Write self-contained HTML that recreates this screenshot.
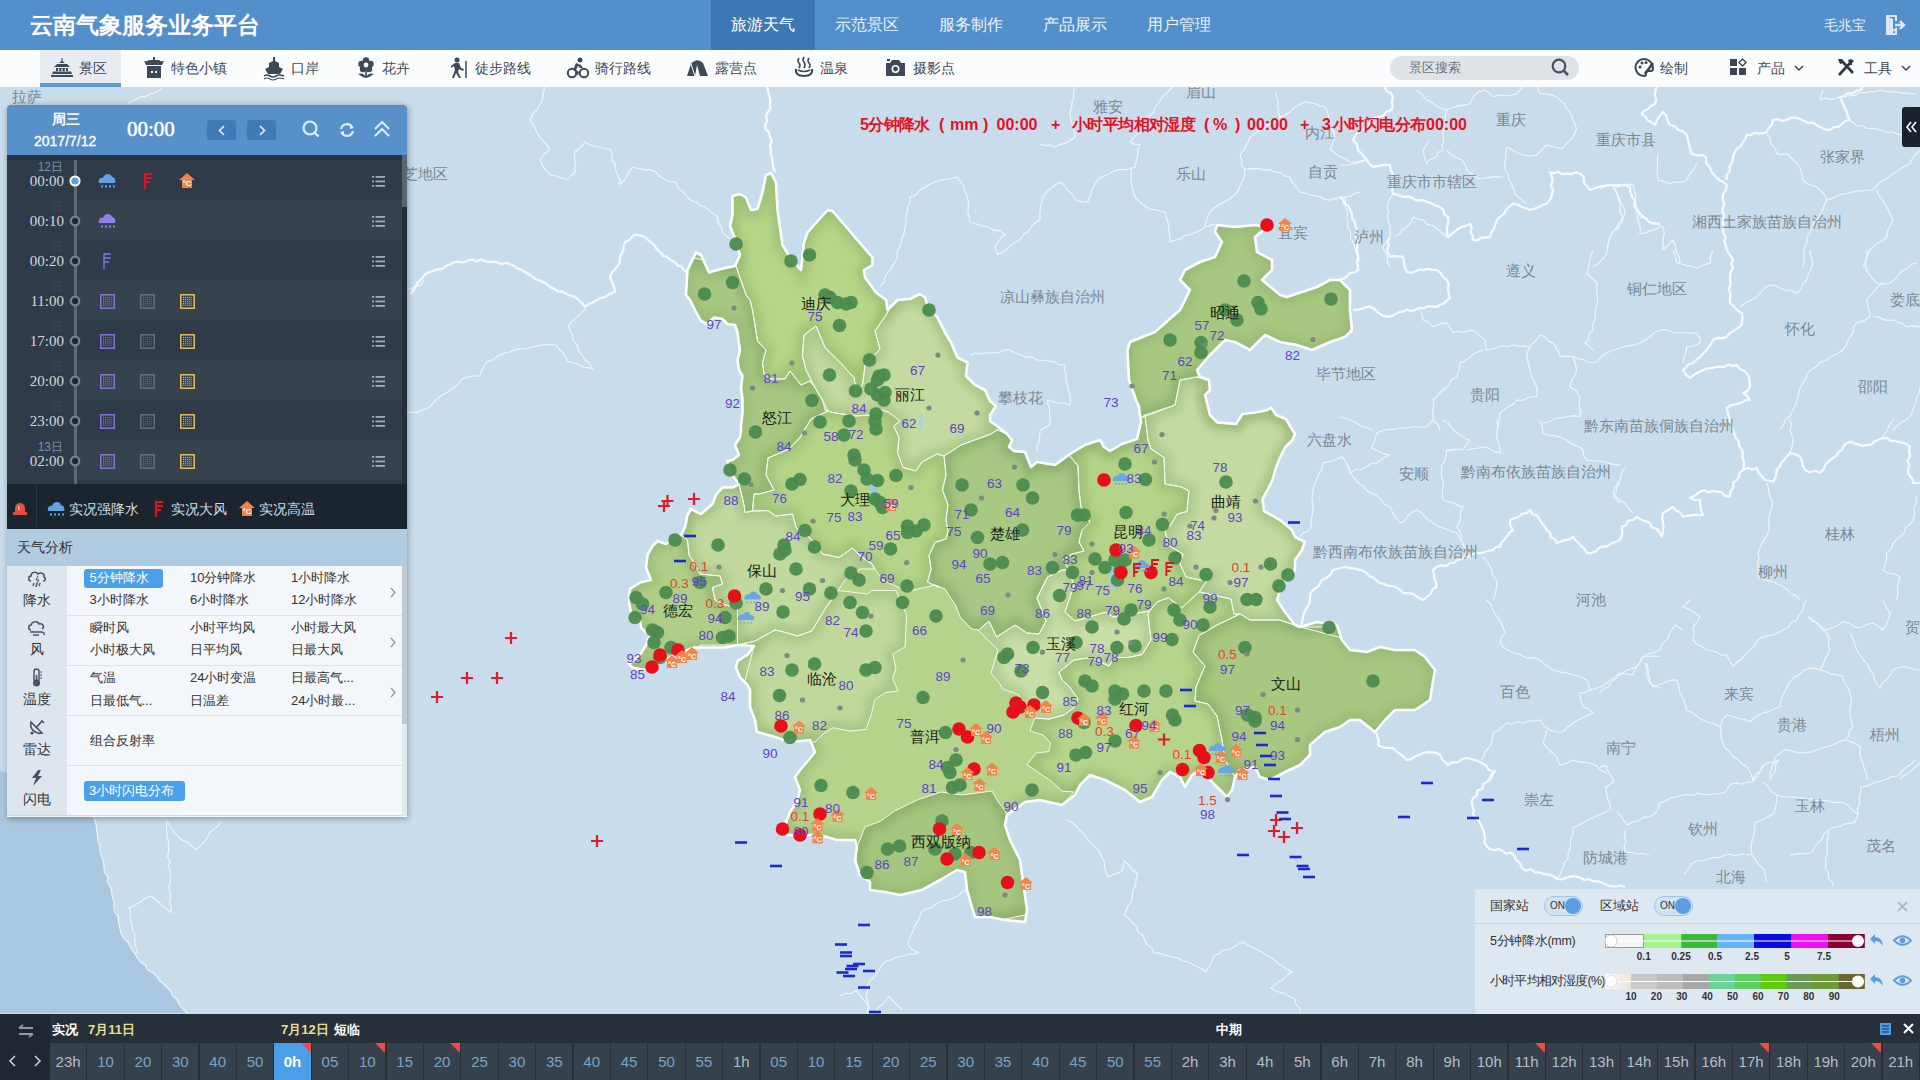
<!DOCTYPE html>
<html><head><meta charset="utf-8">
<style>
*{margin:0;padding:0;box-sizing:border-box}
html,body{width:1920px;height:1080px;overflow:hidden;background:#c9dcec;font-family:"Liberation Sans",sans-serif;position:relative}
.a{position:absolute;white-space:nowrap}
#map{position:absolute;left:0;top:0;width:1920px;height:1080px}
svg.i{position:absolute;overflow:visible}
#hdr{position:absolute;left:0;top:0;width:1920px;height:50px;background:#5390cb}
#hdr .title{position:absolute;left:30px;top:10px;font-family:"Liberation Serif",serif;font-weight:bold;font-size:23px;color:#fff;white-space:nowrap}
#hdr .nav{position:absolute;top:0;height:50px;width:104px;line-height:50px;text-align:center;font-size:16px;color:#eaf2fa;white-space:nowrap}
#hdr .nav.on{background:#3e78b4;color:#fff}
#tb{position:absolute;left:0;top:50px;width:1920px;height:37px;background:#fbfcfe}
#tb .it{position:absolute;top:0;height:37px;line-height:37px;font-size:14px;color:#3f4752;white-space:nowrap}
#lp{position:absolute;left:7px;top:105px;width:400px;height:424px;background:#2f3b48;border-radius:5px 5px 0 0;overflow:hidden;box-shadow:1px 1px 6px rgba(0,0,0,.35)}
#lph{position:absolute;left:0;top:0;width:400px;height:50px;background:#5890ca}
.row{position:absolute;left:71px;width:324px;height:40px;background:#2f3b48}
.row.l{background:#36434f}
.tt{position:absolute;left:0;width:57px;text-align:right;font-size:15px;color:#d3d9df;font-family:"Liberation Serif",serif;line-height:16px}
.td{position:absolute;left:0;width:56px;text-align:right;font-size:12px;color:#7d91a7;line-height:13px}
.td.f{color:#3c4855}
#wa{position:absolute;left:7px;top:529px;width:400px;height:288px;background:#f3f6fa;box-shadow:1px 2px 6px rgba(0,0,0,.3)}
#wa .hd{position:absolute;left:0;top:0;width:400px;height:37px;background:#b1cbe1;font-size:14px;color:#333;line-height:37px;padding-left:10px}
#wa .lc{position:absolute;left:0;width:60px;height:50px;background:#dde5ed}
#wa .lb{position:absolute;left:0;width:60px;text-align:center;font-size:14px;color:#333;line-height:15px}
#wa .tx{position:absolute;font-size:13px;color:#333;white-space:nowrap;line-height:14px}
#wa .sep{position:absolute;left:0;width:395px;height:1px;background:#dce1e6}
.pill{position:absolute;background:#4ba0ea;border-radius:3px;color:#fff;font-size:13px;white-space:nowrap;line-height:19px;padding-left:5px}
#bt{position:absolute;left:0;top:1014px;width:1920px;height:66px;background:#272f38}
.cell{position:absolute;top:29px;height:37px;background:#36414c;text-align:center;line-height:37px;font-size:15px;color:#7aa3c8}
.cell.h{color:#b4bec8}
.cell.on{background:#4a9fe8;color:#fff;font-weight:bold}
.tri{position:absolute;right:0;top:0;width:0;height:0;border-top:10px solid #f04a4a;border-left:10px solid transparent}
#lg{position:absolute;left:1475px;top:889px;width:445px;height:125px;background:rgba(224,233,242,0.9)}
#lg .t{position:absolute;font-size:12.5px;color:#333;white-space:nowrap;line-height:14px}
#lg .n{position:absolute;font-size:10px;color:#333;font-weight:bold;white-space:nowrap;transform:translateX(-50%);line-height:11px}
.tog{position:absolute;width:39px;height:20px;border-radius:10px;background:#cfe3f5;border:1px solid #9fc6ea}
.tog span{position:absolute;left:5px;top:3px;font-size:10px;color:#333;line-height:12px}
.tog i{position:absolute;right:1px;top:1px;width:16px;height:16px;border-radius:50%;background:#5b9de0}
.ttl{position:absolute;top:116px;font-size:16px;font-weight:bold;color:#e8101e;white-space:nowrap;line-height:18px}
</style></head>
<body>
<svg id="map" width="1920" height="1080" viewBox="0 0 1920 1080">
<defs><clipPath id="yn"><polygon points="686,295 687.5,270 696,252.5 701,255 709,272.5 721,269 735,266 740,255 736,241 730,226 732.5,215 732.5,196 740,194 746,197.5 751,210 757.5,209 762.5,192.5 766,175 771,173 776,182.5 777.5,210 782.5,245 790,257.5 801,270 804,242.5 807.5,232.5 827.5,210 832.5,211 872.5,257.5 872.5,265 864,270 865,277.5 876,292.5 886,300 887.5,310 897.5,300 910,299 920,294 925,297.5 927.5,306 937.5,317.5 945,332.5 951,342.5 957.5,357.5 967.5,362.5 966,376 975,385 985,390 990,401 996,406 990,415 990,421 997,426 1007,434 1012,440 1009,447 1014,451 1025,452 1031,467 1037,462 1055,465 1070,454 1085,445 1100,440 1104,447 1110,451 1122,444 1137,439 1141,422 1139,407 1136,400 1129,380 1127.5,350 1130,342 1155,332 1180,310 1190,290 1180,280 1185,270 1200,262 1215,257 1222,242 1215,232 1217,225 1235,227 1255,225 1267,227 1255,237 1257,252 1272,260 1272,270 1262,280 1280,295 1287,297 1317,287 1330,280 1340,280 1350,290 1350,310 1352,330 1345,337 1330,342 1312,350 1297,345 1280,342 1265,335 1250,350 1235,342 1225,340 1210,355 1197,370 1200,377 1209,380 1210,390 1205,395 1207.5,405 1210,415 1217.5,422.5 1236,424 1242.5,414 1255,412.5 1267.5,410 1271,407.5 1276,415 1286,419 1290,426 1295,434 1292.5,440 1285,447.5 1280,457.5 1276,467.5 1272.5,480 1267.5,490 1262.5,499 1264,511 1280,520 1292,530 1295,537 1305,542 1302,550 1295,560 1295,570 1285,580 1280,590 1277,600 1285,612 1295,625 1300,627 1317,622 1337,625 1342,640 1350,650 1367,652 1380,647 1395,650 1415,650 1425,657 1435,670 1432,687 1430,700 1415,710 1395,710 1385,720 1375,732 1360,720 1350,720 1340,727 1325,732 1310,745 1310,755 1300,765 1285,772 1270,780 1260,777 1255,767 1240,770 1235,777 1232,790 1227,797 1212,782 1200,770 1192,775 1185,787 1180,777 1170,772 1162,780 1152,797 1140,802 1125,790 1105,780 1090,775 1080,785 1075,795 1062,805 1040,800 1025,802 1007,815 1005,825 1010,840 1020,860 1022,875 1025,895 1027,910 1025,922 1005,920 990,917 975,917 972,907 967,890 965,872 957,870 940,880 922,890 900,895 885,892 870,890 870,882 860,875 855,860 857,847 855,840 837,840 820,835 805,835 787,835 782,830 785,825 790,812 797,802 800,790 795,777 800,770 807,762 815,752 810,740 790,742 775,737 757,732 755,720 750,707 750,690 747.5,685 740,677.5 736,667.5 737.5,661 747.5,655 754,646 737.5,645 725,647.5 694,647.5 675,655 656,664 644,670 632.5,667.5 629,664 640,655 646,645 650,635 646,632.5 641,627.5 640,620 629,617.5 631,612.5 629,602.5 630,589 640,582.5 651,580 646,567.5 647.5,555 652.5,546 657.5,541 666,544 674,539 681,535 685,527.5 687.5,515 691,509 701,514 712.5,504 716,495 722.5,487.5 732.5,487.5 739,484 729,471 727.5,461 732.5,460 739,455 735,445 740,437.5 741,430 741,425 742.5,412.5 742.5,400 741,387.5 742.5,376 739,370 737.5,360 740,350 739,344 737.5,332.5 735,325 727.5,324 722.5,319 714,317.5 707.5,324 701,321 695,310 690,300"/></clipPath><radialGradient id="seag" cx="0" cy="1" r="1.2"><stop offset="0" stop-color="#a4c3de"/><stop offset="1" stop-color="#b9d2e7"/></radialGradient><g id="house"><path d="M-7,-1 L0,-7 L7,-1 L5,-1 L5,6 L-5,6 L-5,-1 Z" fill="#f0864a"/><text x="0" y="4.5" font-size="7" fill="#fff" text-anchor="middle" font-weight="bold">°C</text></g><g id="cloud"><path d="M-8,2 C-9,-2 -5,-4 -3,-3 C-2,-7 4,-7 5,-3 C8,-3 9,0 8,2 Z" fill="#6aa6e2"/><g fill="#6aa6e2"><rect x="-6" y="4" width="1.6" height="1.6"/><rect x="-2.5" y="4" width="1.6" height="1.6"/><rect x="1" y="4" width="1.6" height="1.6"/><rect x="4.5" y="4" width="1.6" height="1.6"/></g></g></defs>
<rect width="1920" height="1080" fill="#c9dcec"/>
<polygon points="0,770 60,800 94,819 104,867 112,896 121,933 137.5,958 167,987.5 179,1004 187.5,1013 0,1013" fill="#a9c7e0"/>
<polyline points="735,242 730.5,239 726.1,236 722.5,232 721.2,226.9 718.1,222.4 717.5,217 713.4,213.6 708.9,210.6 705,207 700.1,205.5 696.3,202 691.3,200.5 687.5,197 683.2,192.1 678.3,187.7 675,182 669.7,181.8 665,179.5 659.9,176.3 655.5,172.1 650,169.5 644,169.6 638.2,168.5 632.5,167 628.5,173.1 625,179.5 620,184.5 619.7,179.2 617.3,174.4 615.5,169.6 615.5,164.2 611.7,159.8 612.3,154.2 610,149.5 604.9,148.8 600,147 594.7,146.2 589.7,144.6 585,142 580.4,147.4 575,152 574.2,157 575.8,162 574.8,167 575,172 571,175.5 567.5,179.5 561.6,178.2 555.9,176 550,174.5 545.7,170.1 542.4,165.1 540,159.5 544.5,154 550,149.5 547,145 543.2,141.3 540,137 537.1,132.9 535.2,128.1 532.4,123.9 530,119.5 532.7,114.2 536.9,109.9 539.8,104.8 542.5,99.5 543.1,93.1 545,87" fill="none" stroke="#f2f7fb" stroke-width="1.1" stroke-linejoin="round"/>
<polyline points="585.4,309 581.1,313.1 577,317.4 572.1,320.9 568.6,325.8 569.9,330.8 572.9,335.2 573.1,340.7 577,344.6 578,349.8 581.8,354.5 584.8,359.8 589.7,363.7 592.6,369 587.8,367.6 582.7,367.3 578.3,364.3 573.6,362.7 568.6,361.9 565.7,357.6 563.3,352.9 559.1,349.5 556.5,345 549.2,344.5 542,345 536.4,346 531,347.2 525.5,348.7 519.8,348.9 514.3,349.9 509,352.3 503.5,353.4 497.7,355.9 492.8,360.1 486.7,361.9 483.8,366.5 481.6,371.3 479.5,376.3 473.7,375.8 468.1,377.1 462.6,378.7 458.2,383.9 453,388.4 447.2,392.3 441,395.6 435.8,400.1 431.3,405.2 427.1,408.7 421.7,410.1 416.9,412.4 407.2,412.4" fill="none" stroke="#f2f7fb" stroke-width="1.1" stroke-linejoin="round"/>
<polyline points="400,294.4 405.1,291.2 410.4,288.7 415.8,286.2 421.7,284.8 424,280" fill="none" stroke="#f2f7fb" stroke-width="1.1" stroke-linejoin="round"/>
<polyline points="880,287 883.6,282.4 885.2,276.5 888.4,271.7 891.8,266.9 895,262 897.4,257.3 897,251.7 899.4,247 901.1,242 902.5,237 904.4,232.2 905.2,227.2 906.2,222.2 905.7,216.9 907,212 907.8,206.9 910,202.2 910,197 915.6,195 919.5,190.2 924.6,187.3 929.6,184.4 935,182 940.5,180.1 946.2,179.5 951.9,178.5 957.5,177 960.6,181.7 963.7,186.4 965.2,191.9 967.5,197 968.3,202 968.3,207 967.8,212.1 969,217 970,222 975.8,223.7 981.6,225.6 987.5,227 993.2,229.9 999.6,230.9 1005,234.5 1000.9,238 997.8,242.4 995,247 997.5,254.5 1002.5,252.3 1006.9,249.1 1010.8,245.3 1015.4,242.3 1020,239.5 1023.3,234.8 1028.2,231.7 1031.2,226.7 1035.2,222.7 1040,219.5 1039.9,213.8 1040.4,208.2 1041.5,202.6 1042.5,197 1046.1,192.4 1050.4,188.5 1055,185.1 1060,182 1064.5,185.7 1067.8,190.5 1072.2,194.3 1075,199.5 1081.1,201.7 1087.5,202 1090.3,196.5 1091.7,190.4 1094.4,184.9 1097.5,179.5 1103,176.6 1108.6,174.2 1114,171.1 1120,169.5 1125.1,169.6 1130.2,169.1 1135,167 1136.2,161.4 1137.5,155.7 1137.7,149.9 1140,144.5 1134.7,144.3 1130,142 1133.5,138 1137.1,134.1 1141.9,131.4 1145,127 1146.7,121.6 1148.9,116.4 1153.5,112.5 1155,107 1159.2,102 1162.6,96.4 1167.5,92 1172.5,87" fill="none" stroke="#f2f7fb" stroke-width="1.1" stroke-linejoin="round"/>
<polyline points="1040,144.5 1045,145.4 1050.2,145 1055,147 1060,144.6 1065.6,143.1 1070.4,140.3 1075,137 1074.5,131.9 1072.4,127.1 1071.7,122.1 1070.2,117.2 1070,112 1071.7,107.1 1072.1,102 1073.7,97.1 1073.6,91.9 1075,87" fill="none" stroke="#f2f7fb" stroke-width="1.1" stroke-linejoin="round"/>
<polyline points="1130,167 1131.5,171.9 1130.9,177.1 1131.3,182.2 1132.4,187.2 1133.4,192.1 1135,197 1139.5,201.8 1144.6,205.8 1150,209.5 1155.1,209.6 1160,211.2 1165,212 1166.2,216.9 1167.9,221.8 1168.7,226.8 1168.9,231.9 1169.8,236.9 1170,242 1175.2,240.3 1180.5,238.8 1184.9,235.4 1190.4,234.5 1195.5,232.5 1200.5,230.2 1205,227 1209.9,225.4 1215,224.5" fill="none" stroke="#f2f7fb" stroke-width="1.1" stroke-linejoin="round"/>
<polyline points="1205,227 1206,221.8 1207.7,216.8 1210,212 1214.1,208 1218.7,204.7 1223.9,202.3 1228.9,199.5 1233.4,196 1237.5,192 1240,186.1 1242.9,180.5 1245,174.5 1244.5,169.3 1241.5,164.8 1241.7,159.4 1240,154.5 1243.4,150.7 1245.6,146.1 1248.1,141.7 1250,137 1254.3,134.1 1258.1,130.6 1263.3,129.1 1266.9,125.2 1271.9,123.4 1276.4,120.9 1280,117 1278.7,112.1 1277.7,107.1 1278.1,101.8 1276.6,96.9 1275,92" fill="none" stroke="#f2f7fb" stroke-width="1.1" stroke-linejoin="round"/>
<polyline points="1245,169.5 1250,168.6 1255,168.5 1260,168.6 1265,170.6 1270,169.5 1274.7,172.1 1280.3,172.4 1284.7,175.9 1290,177 1292.3,182.7 1296.3,187.2 1300,192 1305.1,193.1 1310,195.1 1315.3,195.6 1320.4,196.8 1325,199.5 1330.2,200.1 1335,198.6 1340,197.7 1345,197 1350.4,196.4 1354.9,193.5 1360,192" fill="none" stroke="#f2f7fb" stroke-width="1.1" stroke-linejoin="round"/>
<polyline points="1280,117 1285.5,114.8 1290.4,111.7 1294.6,107.4 1299.7,104.4 1305,102 1310.1,102.7 1315.2,103.8 1319.9,106 1325,107 1327.3,111.8 1328.5,116.9 1330.9,121.7 1330.7,127.3 1333.7,131.9 1335,137 1332.6,143.3 1330,149.5 1334.9,152.8 1339.4,156.6 1345.1,158.7 1350,162 1355.7,162.4 1361.1,160.7 1366.7,160" fill="none" stroke="#f2f7fb" stroke-width="1.1" stroke-linejoin="round"/>
<polyline points="1345,197 1345.3,202 1345.8,207 1347.5,211.9 1346.8,217 1347.9,221.9 1347.5,227 1350.6,232.2 1350.5,238.5 1353.9,243.6 1355,249.5 1357.6,255.7 1360,262" fill="none" stroke="#f2f7fb" stroke-width="1.1" stroke-linejoin="round"/>
<polyline points="1340,165 1345.6,165.2 1351.1,164.3 1356.7,163.7 1361.5,161.4 1366.7,160" fill="none" stroke="#f2f7fb" stroke-width="1.1" stroke-linejoin="round"/>
<polyline points="1506.7,147 1506.2,152.7 1505.7,158.5 1504.7,164.2 1505,170 1507.9,174.3 1508.9,179.5 1511.6,184 1513.5,188.7 1515,193.7 1518.4,197.6 1522.8,200.4 1526.7,203.7" fill="none" stroke="#f2f7fb" stroke-width="1.1" stroke-linejoin="round"/>
<polyline points="1506.7,147 1512.1,149.8 1517.3,152.9 1523,155 1529.8,156.1 1536.7,155 1541.6,149.9 1546.7,145 1551.6,146.5 1556.7,147.5 1561.7,148.7 1565.5,144.8 1569.6,141.2 1573,137 1576.7,128.7 1574.4,123.2 1572.3,117.5 1570,112 1566.6,108.3 1564.2,103.7 1560.4,100.4 1556.7,97 1551.3,94.9 1545.8,93.7 1540,93.7 1536.7,87" fill="none" stroke="#f2f7fb" stroke-width="1.1" stroke-linejoin="round"/>
<polyline points="1416.7,90 1422.1,94.6 1426.7,100 1431.6,102.6 1436.2,106 1441.3,108.3 1446.7,110 1452.3,107.5 1458.1,105.9 1464.1,105.1 1470,103.7 1473.1,97.2 1478,92 1485,90 1489.4,93 1493,97 1498.8,95.1 1504.9,95.8 1510.9,95.3 1516.7,93.7 1523,87" fill="none" stroke="#f2f7fb" stroke-width="1.1" stroke-linejoin="round"/>
<polyline points="1446.7,110 1444.9,114.8 1446.1,120.1 1443.9,124.9 1443.3,129.9 1443,135 1443.9,140 1442,145 1443,150 1438.1,152.5 1435.3,157.4 1430,159.4 1426.7,163.7 1424.6,156.9 1423,150 1426.5,145 1430,140" fill="none" stroke="#f2f7fb" stroke-width="1.1" stroke-linejoin="round"/>
<polyline points="1446.7,150 1451,154.4 1456.2,157.4 1461.7,160 1465,164.6 1466.7,170 1472.5,174.2 1478,178.7 1483,178.4 1488,177.6 1492.9,176.9 1498,176.9 1503,177" fill="none" stroke="#f2f7fb" stroke-width="1.1" stroke-linejoin="round"/>
<polyline points="1393,193.7 1389.3,200.1 1386.7,207 1388.5,211.9 1387.7,217 1388.5,222 1390.1,226.9 1389.9,232 1390,237 1386.2,241.8 1383,247 1384.7,252 1387.6,256.6 1387.1,262.4 1390,267" fill="none" stroke="#f2f7fb" stroke-width="1.1" stroke-linejoin="round"/>
<polyline points="1413,217 1417.8,219.2 1423,220 1427.3,224.4 1433.6,226 1438.3,229.8 1443,233.7 1448,237" fill="none" stroke="#f2f7fb" stroke-width="1.1" stroke-linejoin="round"/>
<polyline points="1413,217 1410.9,222.6 1406.7,227 1402.3,229.8 1399.3,234.1 1395,237" fill="none" stroke="#f2f7fb" stroke-width="1.1" stroke-linejoin="round"/>
<polyline points="1613,185 1616.2,190.9 1617.9,197.4 1620,203.7 1619.9,209.3 1621.2,214.7 1623,220 1620.2,224.6 1617.2,229.1 1612.4,232.1 1610,237 1608.7,242.5 1607.3,248 1606.7,253.7 1602.9,258.9 1598.4,263.4 1593,267" fill="none" stroke="#f2f7fb" stroke-width="1.1" stroke-linejoin="round"/>
<polyline points="1636.7,210 1637,216 1638.5,221.8 1640.3,227.6 1640,233.7 1645.4,233.1 1650.1,230.7 1655.2,229.4 1660,227" fill="none" stroke="#f2f7fb" stroke-width="1.1" stroke-linejoin="round"/>
<polyline points="1766.7,133.7 1770.2,138.2 1770.9,144.1 1775.2,148.2 1776.7,153.7 1781.7,154.6 1786.7,153.7 1791.2,158 1795.9,162.3 1800,167 1801.4,173.5 1803,180 1808.1,184.3 1814.6,186.1 1820,190 1824.2,194.5 1826.7,200 1831.7,198.5 1836.5,196.2 1841.4,194.3 1846.7,193.7 1851.8,192.1 1857.1,191.1 1862.4,190.7 1867.7,190.3 1873,190 1877.6,184.6 1883,180 1887.8,177.9 1891.7,174.1 1896.5,171.9 1900.6,168.4 1905.3,166.1 1910,163.7 1912.3,158.4 1916.1,154.2 1920,150" fill="none" stroke="#f2f7fb" stroke-width="1.1" stroke-linejoin="round"/>
<polyline points="1850,120 1856.7,125.7 1861.9,125.5 1866.6,128.3 1871.7,128.8 1876.9,128.9 1881.7,130.6 1886.5,132.8 1891.9,131.7 1896.7,133.7 1902.4,135.3 1908.4,135.2 1914.2,136.2 1920,137" fill="none" stroke="#f2f7fb" stroke-width="1.1" stroke-linejoin="round"/>
<polyline points="1876.7,190 1879.3,196.1 1883.6,201.2 1886.7,207 1889.8,213.5 1893,220 1890.4,225.5 1887.6,230.9 1886.7,237 1882.8,240.6 1877.8,242.8 1873.8,246.3 1870,250 1867.3,255.5 1865.6,261.4 1863,267" fill="none" stroke="#f2f7fb" stroke-width="1.1" stroke-linejoin="round"/>
<polyline points="1826.7,200 1824.5,204.8 1822.7,209.8 1820,214.3 1817.7,219 1813.6,222.8 1812.3,228.1 1810,232.8 1806.7,237 1807.2,242.1 1804.6,246.9 1803.9,251.9 1803.8,256.9 1804.2,262.1 1803,267" fill="none" stroke="#f2f7fb" stroke-width="1.1" stroke-linejoin="round"/>
<polyline points="1600,188.7 1606.3,186.2 1613,185 1618,184.5 1623,184.9 1628,184.1 1633,185 1634.3,190.3 1635.9,195.5 1635.3,201.3 1636.5,206.6 1638.7,211.7 1640,217 1644.9,218.4 1648.7,222.1 1654,222.5 1658.5,224.7 1663,227 1664.3,232.8 1663.3,238.5 1663.1,244.2 1663,250 1668,245 1673,240 1675.5,245.7 1676.5,251.9 1679.5,257.4 1680,263.7" fill="none" stroke="#f2f7fb" stroke-width="1.1" stroke-linejoin="round"/>
<polyline points="1613,187 1616,191.7 1618.8,196.5 1620.4,201.9 1623.7,206.5 1625,212 1623.1,217.6 1619.4,222.3 1616.6,227.4 1612.8,231.9 1610,237 1608.3,242.8 1606.7,248.7" fill="none" stroke="#f2f7fb" stroke-width="1.1" stroke-linejoin="round"/>
<polyline points="1658,153.7 1657.3,159 1657.6,164.2 1657.4,169.5 1657,174.7 1658,180 1664.1,181.6 1670,183.7 1675.5,182 1681.4,182.5 1686.7,180 1689.3,174.1 1693.9,169.4 1696.7,163.7" fill="none" stroke="#f2f7fb" stroke-width="1.1" stroke-linejoin="round"/>
<polyline points="1823,90 1821.1,94.9 1820,100 1824.8,98.1 1830.1,99.4 1835.2,98.8 1840,97 1845.1,96.5 1850.1,95.8 1855.1,95.2 1859.8,92.6 1865,92.7 1870,91.8 1875.2,91.7 1880,90 1885.2,91.3 1890.4,91.9 1895.7,91.8 1900.9,93.1 1906.2,93.1 1911.4,93.7 1916.7,93.7" fill="none" stroke="#f2f7fb" stroke-width="1.1" stroke-linejoin="round"/>
<polyline points="1420,310 1422.2,314.8 1423,320 1428.7,322.3 1433,326.7 1439.6,323.9 1446.7,323 1450.2,327.8 1453,333 1457.8,331.2 1463.1,332.4 1468,330.9 1473,330 1476.8,333.6 1480.8,336.9 1485,340 1485.4,345.1 1486.7,350 1491.7,349 1496.7,348 1501.9,345.7 1507.7,346.8 1513,345 1518.6,346.2 1524.3,346.1 1530,346.7 1533.4,342.9 1537,339.2 1540,335 1544.9,336.7 1548.3,340.9 1553,343 1555.9,347.3 1558.7,351.6 1560,356.7 1566.5,356.1 1573,356.7 1577.8,358.8 1583.2,359.1 1587.8,362 1593,363 1598.3,360.7 1602.1,356.3 1606.7,353 1612,350.6 1617.5,348.7 1623,346.7 1628.8,345.9 1634.5,344.9 1640,343 1645.2,340 1650.2,336.8 1654.4,332.3 1660,330 1665.1,329.8 1670.1,330.9 1674.9,332.9 1680,333 1685.6,332.5 1691.1,333.2 1696.7,333 1699.6,337.6 1700,343 1693.7,346 1686.7,346.7 1686.1,352.3 1683.8,357.5 1683,363" fill="none" stroke="#f2f7fb" stroke-width="1.1" stroke-linejoin="round"/>
<polyline points="1593,250 1590.9,255.6 1589.4,261.4 1588.8,267.4 1586.7,273 1591.7,278 1596.7,283 1596.8,288.9 1596.8,294.9 1597.7,300.8 1596.7,306.7 1594.8,312.4 1595.6,318.5 1592.7,324 1593,330 1589.4,333.7 1588.7,339.3 1585,343 1589.1,346.4 1593,350" fill="none" stroke="#f2f7fb" stroke-width="1.1" stroke-linejoin="round"/>
<polyline points="1483,350 1478,351.9 1473.2,354.1 1469.3,357.9 1464.9,360.9 1460,363 1459.1,370 1456.7,376.7 1451.3,380.3 1448.1,386.1 1443,390 1437.9,394.9 1433,400 1433.9,405.6 1432.9,411.1 1433,416.7 1434.3,421.7 1438.5,425.1 1440,430" fill="none" stroke="#f2f7fb" stroke-width="1.1" stroke-linejoin="round"/>
<polyline points="1530,346.7 1527.6,351.4 1526.7,356.7 1528.3,363.4 1530,370 1531.3,375.9 1534,381.3 1536.7,386.7 1537.4,391.7 1536.7,396.7 1531.5,396.5 1526.7,398.4 1521.9,400.4 1516.7,400 1513.3,404.3 1508.4,406.5 1504.3,409.9 1500,413 1499.4,418.8 1498.7,424.5 1496.7,430" fill="none" stroke="#f2f7fb" stroke-width="1.1" stroke-linejoin="round"/>
<polyline points="1573,356.7 1575.2,363.2 1576.7,370 1574.9,375.7 1571.4,380.8 1570,386.7 1575.9,390.8 1580,396.7 1579.3,401.7 1579.1,406.7 1581,411.7 1580,416.7 1573.3,415.6 1566.7,416.7 1560.6,417.7 1554.6,418.8 1549.1,422 1543,423" fill="none" stroke="#f2f7fb" stroke-width="1.1" stroke-linejoin="round"/>
<polyline points="1340,416.7 1345.7,418.5 1351.2,420.6 1356.7,423 1361.6,426.5 1367.5,427.9 1373,430" fill="none" stroke="#f2f7fb" stroke-width="1.1" stroke-linejoin="round"/>
<polyline points="1740,306.7 1745.4,303.1 1751,299.9 1756.7,296.7 1760.7,292.4 1764.8,288 1770,285 1775.3,285.5 1780,288 1785.3,290.5 1791.3,290.8 1796.7,293 1800.9,289.4 1802.9,283.9 1806.7,280 1808.2,274.1 1810.9,268.7 1813,263 1810.7,256.7 1810,250" fill="none" stroke="#f2f7fb" stroke-width="1.1" stroke-linejoin="round"/>
<polyline points="1866.7,250 1867,255 1865.5,260 1865.7,265 1866.7,270 1869.4,274.8 1873.1,278.9 1876.7,283 1883.3,284.1 1890,283 1895.1,279.5 1898.8,274.4 1903,270 1907.8,268.2 1911.6,264.3 1916.7,263" fill="none" stroke="#f2f7fb" stroke-width="1.1" stroke-linejoin="round"/>
<polyline points="1881.7,283 1877.5,286.9 1874.3,291.6 1870,295.3 1866.7,300 1867.4,305.6 1869.4,311 1870,316.7 1863.9,320.9 1856.7,323 1853.5,327.1 1853.1,332.6 1850,336.7 1847.7,341.2 1845.7,345.8 1843,350 1837.8,353.8 1831.8,356.1 1826.7,360 1820.5,362.3 1815.9,367.2 1810,370 1807.1,374.3 1805.5,379.3 1802.4,383.4 1800,388 1798.5,393.6 1797.3,399.3 1795.6,404.8 1793,410 1790.4,415.4 1785.6,419.4 1783.3,425 1780,430" fill="none" stroke="#f2f7fb" stroke-width="1.1" stroke-linejoin="round"/>
<polyline points="1873,316.7 1878.1,316.8 1882.8,319.4 1887.8,320.4 1893,320 1897.6,322.1 1902.5,323.6 1906.7,326.7 1913.3,325.9 1920,326.7" fill="none" stroke="#f2f7fb" stroke-width="1.1" stroke-linejoin="round"/>
<polyline points="1920,386.7 1919.3,392 1917.1,396.8 1916,402 1914,406.9 1912.3,411.9 1910,416.7 1905.6,419.9 1900.9,422.6 1896.9,426.2 1893,430" fill="none" stroke="#f2f7fb" stroke-width="1.1" stroke-linejoin="round"/>
<polyline points="1673,250 1675.1,256.4 1676.7,263 1681.8,264 1686.7,265.6 1691.8,266.4 1696.7,268 1703.2,265.1 1710,263 1710.4,256.2 1713,250" fill="none" stroke="#f2f7fb" stroke-width="1.1" stroke-linejoin="round"/>
<polyline points="1300,536.7 1303.5,532.9 1308.6,531 1311.7,526.7 1310.9,521.4 1312.1,516.2 1312.6,511 1313.4,505.8 1311.9,500.5 1312.2,495.2 1313,490 1314.4,484.4 1316.8,479.1 1318.9,473.8 1322.1,468.8 1323,463 1329.5,461.8 1335.8,459.7 1341.7,456.7 1345.6,461.6 1348.3,467 1350,473 1353.8,477.6 1357.6,482.2 1362.6,485.7 1366.7,490 1371.2,493.5 1376.8,495.6 1380.8,499.8 1384.7,504.3 1390,506.7 1392.6,512.6 1395.9,518 1400,523 1404.9,520.7 1407.9,516 1411.9,512.4 1416.7,510 1421.3,512.5 1424.8,516.5 1428.6,520.1 1433,523 1437.3,526.1 1442.3,527.5 1447.1,529.4 1451.7,531.6 1456.7,533 1459.9,537.9 1463,543 1464.7,548 1466.7,553" fill="none" stroke="#f2f7fb" stroke-width="1.1" stroke-linejoin="round"/>
<polyline points="1350,473 1355.1,469.8 1361.4,469.5 1366.7,466.7 1371,463.7 1376.5,463 1380.8,460 1385.1,456.9 1390,455 1383.6,453.6 1377.6,450.9 1371.7,448 1373.7,443.1 1375.5,438.2 1376.7,433 1382.3,430.8 1388.1,429.4 1394.2,429.3 1400,428 1405.4,428 1410.7,427.2 1416,426.5 1421.4,427.2 1426.7,426.7 1433,420" fill="none" stroke="#f2f7fb" stroke-width="1.1" stroke-linejoin="round"/>
<polyline points="1443,420 1448.4,423.4 1452.5,428.3 1456.7,433 1461.2,435.2 1465,438.7 1470,440 1466.2,444.8 1463,450 1457.6,449 1452.1,450.1 1446.7,450 1446.1,455.2 1444.8,460.2 1441.8,464.7 1441.7,470 1441.4,475 1442.6,480 1443.6,484.9 1442.6,490 1442.3,495 1443,500 1448.1,501.5 1453.2,502.8 1457.9,505.4 1463,506.7 1460.4,511.4 1460.5,516.9 1459.4,522.1 1456.7,526.7 1459.6,531.5 1461.7,536.7" fill="none" stroke="#f2f7fb" stroke-width="1.1" stroke-linejoin="round"/>
<polyline points="1466.7,450 1472.1,448.7 1477.7,448.3 1483,446.7 1488.9,448.1 1494.1,451.6 1500,453 1499.8,447.9 1498.4,443 1496.8,438.1 1496.7,433 1497.9,426.5 1496.7,420" fill="none" stroke="#f2f7fb" stroke-width="1.1" stroke-linejoin="round"/>
<polyline points="1540,420 1542,426.4 1543,433 1548.7,435.5 1555,435.8 1561,437.6 1566.7,440 1571.8,443.9 1577.8,446.2 1583,450 1583.7,455.4 1586.7,460 1592.3,460.8 1597.9,460.9 1603.5,461.8 1608.9,463.1 1614.4,464.6 1620,465" fill="none" stroke="#f2f7fb" stroke-width="1.1" stroke-linejoin="round"/>
<polyline points="1620,483 1616.6,487 1616.2,492.6 1613,496.7 1620,503" fill="none" stroke="#f2f7fb" stroke-width="1.1" stroke-linejoin="round"/>
<polyline points="1483,556.7 1486.1,561 1489.4,565.2 1491.7,570 1493.1,575.6 1496.7,580 1496.7,585.2 1496,590.2 1495,595.2 1493,600" fill="none" stroke="#f2f7fb" stroke-width="1.1" stroke-linejoin="round"/>
<polyline points="1766.7,483 1768.5,487.9 1768.9,493.3 1770.5,498.3 1773,503 1771.4,508.5 1769.6,514 1768.7,519.6 1769.2,525.5 1768.6,531.2 1766.7,536.7 1762.8,541.6 1760.3,547.3 1758,553 1759.2,558 1757.6,563 1758.3,568 1758.3,573 1758,578 1763.1,579.3 1768.3,580.7 1773.4,582 1778.2,584.4 1783,586.7 1787.5,589.7 1790.8,594.3 1796.4,595.9 1800,600" fill="none" stroke="#f2f7fb" stroke-width="1.1" stroke-linejoin="round"/>
<polyline points="1625,468 1621.5,472.5 1620.9,478.3 1618.1,483.2 1614.6,487.6 1613,493 1616.4,497.6 1621.1,500.9 1625.8,504.2 1629,509 1633,513" fill="none" stroke="#f2f7fb" stroke-width="1.1" stroke-linejoin="round"/>
<polyline points="1916.7,496.7 1916.1,502.6 1913.8,508.2 1914.7,514.3 1913,520 1910,524.3 1905.6,527.6 1904.1,533.1 1900,536.6 1895.9,540.1 1892.7,544.3 1890.9,549.6 1886.7,553 1886.6,558.9 1885.3,564.6 1883,570 1888.3,573.2 1894.6,573.9 1900,576.7 1898.5,582.4 1897.3,588.2 1897.9,594.2 1896.7,600" fill="none" stroke="#f2f7fb" stroke-width="1.1" stroke-linejoin="round"/>
<polyline points="1790,420 1791.3,424.9 1790.3,430.2 1791.9,435 1793,440 1792.1,446.6 1790,453" fill="none" stroke="#f2f7fb" stroke-width="1.1" stroke-linejoin="round"/>
<polyline points="1893,420 1889.2,425.3 1886.7,431.4 1883,436.7" fill="none" stroke="#f2f7fb" stroke-width="1.1" stroke-linejoin="round"/>
<polyline points="1481.7,760 1484,755.3 1486.1,750.5 1490,746.7 1492.1,740 1493,733 1498.2,730.5 1502.3,726.6 1506.7,723 1512.1,724.2 1517.6,721.8 1523,723 1528.5,721.3 1534.3,720.9 1540,720 1544.2,725.8 1550,730 1556.3,732 1563,731.7 1567.8,727.1 1573,723 1577.7,719.9 1582.9,717.8 1588,715.5 1593,713 1588.6,708.9 1583,706.7 1580.7,700 1580,693 1585.2,692.3 1590,690 1588.9,684.8 1586.7,680 1582,677.5 1576.9,675.8 1571.8,674.5 1566.7,673 1559.8,671.9 1553,670 1548.4,667 1544.1,663.6 1540,660 1534.8,657.9 1528.9,658.3 1523.6,656.6 1518.6,653.8 1513,653 1508.3,650.2 1503.6,647.2 1500,643 1501.4,637.5 1505,633 1502.6,626.5 1500,620 1496.1,615.3 1493,610 1490.9,604.3 1486.7,600" fill="none" stroke="#f2f7fb" stroke-width="1.1" stroke-linejoin="round"/>
<polyline points="1590,690 1596,688.6 1601.6,686.5 1606.7,683 1611.8,679.1 1617,675.4 1623,673 1627.1,669.9 1632.1,668.8 1636.7,666.7 1640.3,662 1643,656.7 1648.7,656.6 1654.3,656 1660,656.7" fill="none" stroke="#f2f7fb" stroke-width="1.1" stroke-linejoin="round"/>
<polyline points="1546.7,730 1545.1,736.6 1543,743 1547.3,747.8 1551.8,752.5 1556.7,756.7 1560,765 1566.7,763.1 1573,760 1578.5,761.9 1584.3,762.4 1590,763 1596.1,765.5 1600.7,770.4 1606.7,773" fill="none" stroke="#f2f7fb" stroke-width="1.1" stroke-linejoin="round"/>
<polyline points="1646.7,663 1648.1,667.9 1648.2,673 1649.5,677.9 1650,683 1654.7,686.1 1660,688" fill="none" stroke="#f2f7fb" stroke-width="1.1" stroke-linejoin="round"/>
<polyline points="1690,600 1683,606.7 1689.1,609.4 1694.7,612.8 1700,616.7 1697,622.1 1693,626.7 1693.9,633.4 1693,640 1697,644.1 1702,646.8 1706.7,650 1711.8,650.8 1716.8,652.2 1721.4,655 1726.7,655 1729.8,660.9 1733,666.7 1736.5,662.3 1741.6,659.5 1745,655 1749.6,650.3 1754.6,645.8 1758,640 1762.6,637 1768,635.9 1773.3,634.8 1778.3,632.8 1783,630 1788.2,627.5 1791.4,622.4 1796.7,620 1799.4,614.7 1803,610 1803.9,604.7 1806.7,600" fill="none" stroke="#f2f7fb" stroke-width="1.1" stroke-linejoin="round"/>
<polyline points="1683,630 1675,625 1670,633 1667.4,639.1 1662.3,643.7 1660,650 1653.8,652.5 1647.4,654.3 1641.7,658 1639.1,663.8 1635.1,668.9 1633,675 1626.5,674.1 1620,673 1616.5,678 1611.5,681.7 1608,686.7 1603.3,688.9 1600,693" fill="none" stroke="#f2f7fb" stroke-width="1.1" stroke-linejoin="round"/>
<polyline points="1645,663 1646.9,669.7 1646.7,676.7 1649.6,681.8 1653,686.7 1660,684.5 1666.7,681.7 1671.6,680.1 1676.7,680 1678.7,686.4 1680,693 1683.1,698.3 1685.2,704.1 1686.7,710 1692.5,712.8 1697.4,716.9 1703,720 1708.5,722.6 1714.6,723.7 1720,726.7 1722.2,720.2 1726.7,715 1732.6,716.2 1738.2,718.8 1744.4,719.2 1750,721.7 1754.1,718.4 1758.2,715.3 1763,713 1768.9,711.6 1774.4,708.9 1780,706.7 1780.6,701.3 1782.4,696.4 1784.8,691.6 1786.7,686.7 1790,682.4 1793,678 1798.9,675 1803.8,670.4 1810,668 1815.2,668.1 1820,670 1823,665.2 1824.8,659.9 1827,654.7 1830,650 1828.4,644.4 1829,638.4 1826.7,633 1822.2,629.3 1818.5,624.7 1813.9,621 1810,616.7" fill="none" stroke="#f2f7fb" stroke-width="1.1" stroke-linejoin="round"/>
<polyline points="1720,726.7 1721.2,732.1 1721.1,737.7 1723,743 1725.3,748.3 1730,751.9 1733,756.7 1738,759.4 1741.8,763.8 1746.7,766.7 1750.5,773 1753,780 1755.3,774.4 1760.5,770.9 1763,765.4" fill="none" stroke="#f2f7fb" stroke-width="1.1" stroke-linejoin="round"/>
<polyline points="1820,670 1825.8,671.5 1831.3,674.1 1837.3,674.8 1843,676.7 1844.4,682.5 1847.8,687.5 1850,693 1850.9,698 1851.3,703 1849.9,708 1850,713 1851.1,719.9 1853,726.7 1849.4,730.6 1848.6,736.1 1845,740 1838.8,741.9 1832.9,744.8 1826.7,746.7 1821.7,748.3 1816.7,750 1811.3,751.9 1805.7,752.6 1800,753 1794.3,751.9 1788.9,749.9 1783,750 1779.7,754.1 1775,756.7 1773.8,762.5 1771.7,768.2 1770.1,773.9 1770,780" fill="none" stroke="#f2f7fb" stroke-width="1.1" stroke-linejoin="round"/>
<polyline points="1845,740 1850.3,741.5 1855.4,743.6 1860,746.7 1859.9,752.3 1860.8,757.8 1863,763 1864.3,768.7 1866.6,774.1 1866.7,780" fill="none" stroke="#f2f7fb" stroke-width="1.1" stroke-linejoin="round"/>
<polyline points="1808,616.7 1812,620.9 1817.5,623.1 1821.4,627.5 1826.7,630 1832.3,627.5 1837.9,625.2 1843,621.7 1849,623 1854.1,626.6 1860,628 1866.2,624.8 1873,623 1878.1,626.3 1883,630 1886.2,624.7 1888.5,619 1890,613 1885.8,606.9 1883,600" fill="none" stroke="#f2f7fb" stroke-width="1.1" stroke-linejoin="round"/>
<polyline points="1850,633 1852.9,638.4 1854.7,644.2 1856.7,650 1860,655 1863.6,659.8 1867.5,664.5 1870,670 1873.1,674.2 1874.5,679.3 1876.6,684 1880,688 1882.3,682.8 1886.6,679.1 1890.3,674.9 1893,670 1899.6,667.2 1906.7,666.7 1913.1,669.2 1920,670" fill="none" stroke="#f2f7fb" stroke-width="1.1" stroke-linejoin="round"/>
<polyline points="1900,780 1903.4,775.8 1908.2,773.4 1912.1,769.9 1916.2,766.7 1920,763" fill="none" stroke="#f2f7fb" stroke-width="1.1" stroke-linejoin="round"/>
<polyline points="1611,808.8 1606.5,811.6 1601.6,813.7 1596.7,815.7 1592.1,818.4 1587.1,820.2 1582.6,823.1 1577.8,825.5 1573,827.7 1573.4,832.9 1571,837.6 1570.5,842.7 1570.3,847.7 1568.2,852.5 1568,857.6 1564.6,862.6 1562.6,868.3 1560.5,874 1557,879" fill="none" stroke="#f2f7fb" stroke-width="1.1" stroke-linejoin="round"/>
<polyline points="1611,808.8 1609.7,803.4 1607.5,798.1 1606.3,792.7 1606,787 1614,781.7 1611.2,776.3 1607.7,771.3 1606,765.4 1600,767" fill="none" stroke="#f2f7fb" stroke-width="1.1" stroke-linejoin="round"/>
<polyline points="1617,811.5 1620.7,815.9 1624,820.5 1627.6,825 1632.6,821.7 1638.6,820.9 1643.5,817.4 1649.5,816.8 1654.7,814 1658,808.8 1660,803 1665.5,801 1670.6,797.9 1676.5,797 1682,795 1687.4,794.4 1692.8,795.5 1698.1,793.1 1703.6,794.7 1708.9,794.7 1714.3,793.7 1719.7,793.6 1725,792.5 1730.6,784.4 1735.9,782.9 1741.5,784.3 1746.6,782.4 1752,781.7 1756.7,776.9 1760.2,771.4 1763,765.4 1768.1,762.8 1773.9,762.5 1779,760 1775.7,764.5 1775.5,770.5 1772.6,775.2 1770,780" fill="none" stroke="#f2f7fb" stroke-width="1.1" stroke-linejoin="round"/>
<polyline points="1625,830.5 1624.3,835.9 1625.9,841.2 1624,846.6 1625,852 1631.1,852.2 1636.9,854.3 1643.1,853.3 1649,855" fill="none" stroke="#f2f7fb" stroke-width="1.1" stroke-linejoin="round"/>
<polyline points="1763,781.7 1767.6,786.1 1771.4,791.4 1776.7,795 1776.6,801.4 1775.5,807.8 1774,814 1769.2,816 1764.7,818.4 1760.2,821.1 1755,822 1754.8,828.5 1753.9,834.8 1752,841 1750.9,848 1752,855 1746.6,854.5 1741.2,854 1735.8,855.9 1730.4,854.3 1725,855 1719.9,857.3 1714.2,857.6 1708.8,858.7 1703.6,860.7 1697.9,860.7 1692.7,863 1688.5,868.3 1684.6,873.8" fill="none" stroke="#f2f7fb" stroke-width="1.1" stroke-linejoin="round"/>
<polyline points="1752,855 1755.5,859.6 1758.6,864.6 1763,868.4 1765.5,875 1766,882" fill="none" stroke="#f2f7fb" stroke-width="1.1" stroke-linejoin="round"/>
<polyline points="1776.7,795 1782.6,797 1788.8,796.8 1795,797 1801,798 1806.3,799.4 1811.8,798.6 1817,801.1 1822.5,800.7 1827.9,800.8 1833.2,802.4 1838.6,802.2 1844,803 1849.2,806 1852.9,810.8 1858,814 1857.4,808.5 1859.9,803.3 1859,797.7 1860.5,792.4 1860.7,787 1866.5,786.4 1871.6,783.7 1877,781.7 1882.5,780.7 1887.7,778.4 1892.9,776.2 1898.6,776 1901.9,771.1 1906.2,767.3 1911.1,764.2 1915,760" fill="none" stroke="#f2f7fb" stroke-width="1.1" stroke-linejoin="round"/>
<polyline points="1790,855 1795.5,854.1 1801,853.5 1806.6,853.8 1812,852 1814.4,847.1 1817.8,843 1821.9,839.3 1823.8,834.1 1828,830.5 1833,827.6 1838.7,826.7 1843.9,824.4 1849.5,823.3 1855,822 1858,814" fill="none" stroke="#f2f7fb" stroke-width="1.1" stroke-linejoin="round"/>
<polyline points="1828,830.5 1828.4,836 1827.1,841.3 1826.7,846.7 1827.3,852.2 1825.9,857.6 1825.9,863 1825.5,868.4 1828.4,872.7 1828.5,878.2 1832.2,882.1 1833.6,887" fill="none" stroke="#f2f7fb" stroke-width="1.1" stroke-linejoin="round"/>
<polyline points="1067.5,820 1072.2,822.7 1076.3,825.9 1079.5,830.4 1083.8,833.5 1087.1,838.9 1091.3,843.5 1096.1,847.6 1100,852.5 1102.2,857.2 1104.4,861.9 1104.4,867.3 1106.2,872.2 1108,877 1114.7,873.9 1121.7,871.5 1123.4,866.1 1124.4,860.6 1129,865 1132.7,870.3 1138,874 1136,879.3 1135.9,885.1 1132.9,890.1 1132.5,895.8 1131.6,901 1128.4,905.3 1126.6,910.1 1124.4,914.8 1128.9,918.4 1132.5,923 1136.5,926.6 1138.1,931.9 1142.7,935 1144.7,940 1146.9,944.9 1151.7,947.9 1154,952.7 1159.1,953 1163.8,955.1 1168.8,955.9 1173.6,957.3 1178.6,958 1182.7,961 1188,961.8 1192.3,964.4 1196.8,966.7 1201.6,968.4 1205.6,971.7 1209.2,966.7 1211.7,961.2 1213.8,955.4 1219,953.7 1223.2,949.7 1229.1,949.5 1233.9,947 1238.6,944.1 1243.6,941.9 1247.7,945.1 1252.5,947.2 1257.3,949.4 1261.8,951.9 1266.1,954.9 1270.8,957.1 1274.8,960.5 1278.7,964.1 1283.2,966.7 1287.4,969.8 1292.3,971.7 1287.6,974.5 1284,978.7 1279.3,981.4 1275.1,984.9 1270.7,988 1275.3,990.8 1280.4,992.4 1285.5,993.9 1290,997 1295,998.8 1295.7,1004 1299.4,1008 1300.5,1013" fill="none" stroke="#f2f7fb" stroke-width="1.1" stroke-linejoin="round"/>
<polyline points="967.3,890.4 962.3,891.7 958.6,895.9 953.8,897.4 949.2,899.7 944,900.6 939.2,902.3 934.8,904.9 930.7,908.1 925.5,908.9 921.3,912 919.8,916.8 918,921.6 914.5,925.6 913.2,930.5 911.1,935.1 909.2,939.8 907.7,944.6 912.4,949.6 918.5,952.7 913.1,954.1 907.5,954.5 902.1,956.3 896.6,957.2 891.5,959.6 886,960.8 882.4,964.5 879.5,968.8 876.9,973.3 873.9,977.5 869.9,980.9 867,985.2 868.1,990.8 865.9,996.3 867.9,1001.9 868.2,1007.4 867,1013" fill="none" stroke="#f2f7fb" stroke-width="1.1" stroke-linejoin="round"/>
<polyline points="840,996 845,993.2 851,993.5 856,990.6 859.8,995.1 863.7,999.6 867.3,1004.1 869.8,1009.6" fill="none" stroke="#f2f7fb" stroke-width="1.1" stroke-linejoin="round"/>
<polyline points="875,1013 877.5,1008 882.3,1004.8 885.6,1000.5 888.8,996 892.9,1000.9 897.4,1005.5 902.3,1009.6" fill="none" stroke="#f2f7fb" stroke-width="1.1" stroke-linejoin="round"/>
<polyline points="970,355 974.9,353.3 980,354 985,352.8 990.1,353.3 995.1,352.7 1000.1,352.3 1004.9,349.5 1010,350 1015.2,352.9 1020.6,355 1026.1,357.1 1032.3,357 1037.5,360 1043.1,360.2 1048.7,361 1054.2,361.8 1059.3,364.9 1065,365 1064.8,370.1 1065.9,375 1066,380.1 1067.2,385 1068.7,389.9 1069.8,394.9 1070.4,399.9 1070,405 1064.5,403.1 1058.6,403.2 1053,401.7 1047.5,400 1048.2,405 1049.7,409.9 1049.6,414.9 1050.1,419.9 1050,425 1044.7,427.5 1040,431 1039.7,436.4 1039.2,441.8 1036.9,447 1037.5,452.5" fill="none" stroke="#f2f7fb" stroke-width="1.1" stroke-linejoin="round"/>
<polyline points="127.5,103.8 133.8,100.4 140,97 145.3,96.4 150,94 156.4,91.7 162.5,88.75" fill="none" stroke="#f2f7fb" stroke-width="1.1" stroke-linejoin="round"/>
<polyline points="94,819 96.3,824.1 96.4,829.6 97.5,835 97.7,840.5 99.9,845.6 100.1,851.1 101.7,856.4 103.6,861.5 104,867 104.4,872.1 107.7,876.4 107.2,881.7 110.2,886.1 111.9,890.8 112,896 114,901.1 113.9,906.7 114.6,912.2 118.4,916.8 118.5,922.4 119.7,927.7 121,933 123.7,938.4 128.3,942.5 130.9,948 134.5,952.8 137.5,958 140.6,962.3 145.3,964.9 147.7,969.9 152.6,972.4 156.5,975.9 159.3,980.5 163.3,983.8 167,987.5 170.8,991 172.7,996 176.9,999.2 179,1004 182.7,1009 187.5,1013" fill="none" stroke="#f2f7fb" stroke-width="1.1" stroke-linejoin="round"/>
<polyline points="167,821 166.7,826.1 166.7,831.2 167.3,836.3 168.3,841.3 168.4,846.4 168.6,851.5 167.5,856.6 169.9,861.6 168,866.8 170.5,871.8 170.2,876.9 170.3,882 168.8,887.1 170.1,892.2 170.6,897.2 169.6,902.4 171.5,907.4 171,912.5 166.7,909.3 162.7,905.8 158.8,902.1 154.6,898.8 150,896 144.6,898.7 139.7,902.3 134.5,905.4 129,908 130.8,912.9 130,918.4 131.4,923.4 132.2,928.6 134.6,933.4 134.8,938.6 134.9,943.9 136.4,948.9 137.5,954" fill="none" stroke="#f2f7fb" stroke-width="1.1" stroke-linejoin="round"/>
<polyline points="221,821 218.2,825.8 213.9,829.4 209.5,832.8 207.2,838 203.8,842.2 200,846.2 196,850 192.1,846.2 188.2,842.5 182.8,840.5 178.6,837.1 175,833 170.5,827.4 167,821" fill="none" stroke="#f2f7fb" stroke-width="1.1" stroke-linejoin="round"/>
<polyline points="775,172 773.2,167.1 772.5,162 772.1,157.8 770.7,153.8 770.7,149.6 769.9,145.4 771.8,141 770,137 769,132.6 765.6,129.1 765,124.5 767.3,120.8 765.8,116.2 767.7,112.4 770.4,108.9 770,104.5 770.3,100 769.4,95.7 767.9,91.4 767.5,87" fill="none" stroke="#f7fafd" stroke-width="2.2" stroke-linejoin="round"/>
<polyline points="687.5,272 683.8,270.2 681.5,266.7 677.4,265.4 675,262 670.8,260.2 667.3,257.3 663,255.7 660,252 656.8,249.2 654.6,245.4 651.4,242.6 648,240 645,237 640.1,235.4 635,234.5 631.7,237.1 629,240.4 625,242 623.7,245.9 623.3,250.1 621.3,253.8 619.8,257.7 620,262 617.7,265.9 614.8,269.4 611.9,272.8 610,277 611.9,281.9 614.1,286.7 615,292 609.7,293.9 605,297 600.5,298 596.6,300.3 592.7,302.5 588.5,304.1 585,307 582,303.3 578.6,300 575,297 570.8,295.5 566.5,294.2 562.6,291.6 557.9,291.5 554.1,288.9 550,287 546.9,284.1 543.2,282.2 539.5,280.2 535.3,279.1 532,276.5 528.5,274.3 525,272 521.4,269.8 517.4,268.5 514,265.9 510,264.5 506,262.7 501.5,264.3 497.6,262.4 493.4,261.5 489.1,262.1 485,261.2 481,259.2 476.5,261.4 472.5,259.5 468,260.4 463.7,262.5 458.8,261.7 454.2,262.2 450,264.5 445.8,266.1 442.1,268.9 437.4,269.3 433.3,271.1 428.9,272.2 425,274.5 422.5,277.8 419.7,280.9 416.7,283.9 414.9,287.8 412.7,291.3 410,294.5" fill="none" stroke="#f7fafd" stroke-width="2.2" stroke-linejoin="round"/>
<polyline points="1385,87 1386.6,91.2 1391,93.1 1393,97 1392,101.3 1392.5,105.7 1391.7,110 1386.8,111.6 1383.1,115.7 1378,117 1373.6,118.6 1371.2,122.9 1368.2,126.4 1364.2,128.7 1360.4,131.2 1356.7,133.7 1353,140 1356.8,144.3 1358,150 1361.1,153.2 1364,156.5 1366.7,160 1369.4,163.9 1373,167 1377.2,166.1 1381.4,165.3 1385.7,164.7 1390,165 1390.8,169.6 1393,173.7 1391.7,177.7 1392.9,181.7 1393.8,185.7 1392.1,189.7 1393,193.7 1398.1,195 1403,197 1407.1,196.7 1411.2,197.1 1414.9,199.6 1418.9,200.3 1423,200 1427.1,202.1 1431.5,203.4 1435.7,205.4 1440,207 1443.3,209.8 1444.2,214.5 1448,217 1448.4,221 1447.6,225 1447,229 1447.1,233 1448,237 1452.3,233.4 1456.7,230 1460.9,227.3 1465.6,225.9 1470,223.7 1471.9,227.6 1470.5,232 1472.7,235.8 1473,240 1477.4,240.3 1481.4,237.8 1485.7,237.4 1490,237 1491.3,232.7 1493.8,228.9 1495.2,224.6 1496.7,220.3 1500,217 1503.7,214.1 1506,209.9 1509.2,206.5 1513,203.7 1517.5,204.7 1521.5,206.8 1525.8,208.2 1530,210 1534.3,208.8 1538.5,207.3 1542.4,204.9 1546.7,203.7 1550,199.7 1551.9,195 1553,190 1550.9,185.7 1552.5,180.8 1552,176.3 1550,172 1554.1,173.3 1558.5,171.8 1562.4,174.3 1566.7,173.7 1571.1,174.1 1575.6,172.2 1580,173.7 1583.7,177 1583.8,182.6 1587.1,186.2 1590,190 1594.4,188.3 1598.9,186.8 1603.6,186 1608.2,185.2 1613,185 1617.2,186.3 1621.6,185.5 1625.9,185.5 1630,187 1630.2,191.9 1631.8,196.4 1635,200.5 1634.2,205.7 1636.7,210 1639.8,213 1642.7,216.1 1646.2,218.6 1649,221.9 1653,223.7 1660,223.7" fill="none" stroke="#f7fafd" stroke-width="2.2" stroke-linejoin="round"/>
<polyline points="1656.7,87 1655.4,91.1 1654.8,95.2 1656.3,99.6 1655,103.7 1651.3,105.7 1648.3,108.6 1644.6,110.6 1641.7,113.7 1645.1,116.4 1647.6,120.2 1651.6,122.3 1655,125 1657.1,120.3 1659.7,115.9 1663,112 1666.3,115.8 1667.7,120.7 1670,125 1674.9,126.4 1678.4,129.9 1683.1,131.6 1686.7,135 1688,139.7 1689.2,144.3 1690.3,149.1 1691.7,153.7 1697.2,155.4 1703,155 1706.3,158 1706.1,163 1709.1,166.2 1710.8,170 1713,173.7 1716.1,176.9 1719.2,180.1 1723.5,181.9 1726.7,185 1725.7,190.1 1722.9,194.7 1723,200 1724.3,204 1722.6,208 1722.6,212 1724.4,216 1723,220 1723.2,224.3 1723.5,228.6 1723.3,233 1725.6,237.1 1724.2,241.6 1726.1,245.7 1726.7,250 1729.9,255 1733,260 1731.2,263.8 1733.2,268.2 1730.6,271.9 1730.2,275.9 1730,280 1730.5,284.6 1728.9,289.2 1730.4,293.8 1730.1,298.4 1730,303 1733.9,306.4 1737.3,310.3 1741.7,313 1742.6,317 1741.9,321 1741.7,325 1738.1,328.1 1734.1,330.7 1729.8,333 1726.7,336.7 1722.3,338.4 1717.3,337.9 1713,340 1710.1,345.2 1706.7,350 1703.3,353.2 1700.3,357 1696.4,359.7 1693,363 1688.8,364.2 1686.1,367.3 1683,370 1685.8,374.6 1690,378 1694.1,374.9 1698.4,372.2 1703,370 1707.4,368.3 1712.2,368.1 1716.7,366.7 1720.7,366.8 1724.8,366.9 1728.6,364.3 1732.8,366 1736.7,365 1739.3,368.6 1743.3,370.4 1746.7,373 1749.1,377.3 1749.5,382 1750,386.7 1747.5,391 1743,393 1747.2,395.8 1750,400 1745.7,400.1 1742.1,402.4 1738.2,403.6 1734.2,404.5 1730.2,405.5 1726.7,408 1727.6,412.5 1728.9,416.9 1730.1,421.3 1731.2,425.8 1733,430 1734.4,433.9 1735.8,437.9 1738.8,441.2 1739.2,445.5 1741.4,449.1 1743,453 1742.2,457.2 1744.2,461.5 1744,465.8 1743,470 1747.4,468 1752.3,469.5 1756.7,468 1758.4,472.7 1761.8,476.3 1765,480 1769.1,480.5 1773,481.7 1775.2,478.1 1776.3,474.2 1776.7,470 1779.5,466.7 1781.4,462.8 1784.2,459.4 1787.2,456.3 1790,453 1795.2,454.3 1800,456.7 1801.9,461.1 1802.9,465.7 1805,470 1809.7,472.3 1815.3,470.7 1820,473 1823.4,469.4 1825.5,464.6 1828.9,461 1833,458 1836.4,455.6 1838.6,452.2 1842.1,449.8 1843.8,445.9 1846.7,443 1850.8,441.9 1854.7,443.5 1858.7,444.5 1862.6,445.9 1866.7,445 1871.3,444.6 1874.8,441.4 1878.8,439.5 1883,438 1887.2,438.1 1890.6,440.9 1894.8,440.9 1898.7,442 1902.7,442.8 1906.6,444 1910,446.7 1909.1,451.3 1910.3,456.1 1907.4,460.6 1909.6,465.4 1908,470 1908.6,474.7 1912.4,478.3 1913,483 1920,483" fill="none" stroke="#f7fafd" stroke-width="2.2" stroke-linejoin="round"/>
<polyline points="1726.7,180 1726.6,175 1729.9,171 1729.7,166 1732.4,161.8 1733,157 1734.5,152.8 1736.4,149 1740.5,146.4 1742.7,142.7 1745.3,139.2 1746.7,135 1750.8,135.1 1754.5,132.6 1758.8,133.6 1762.8,133.2 1766.7,132 1768.7,127.9 1772,124.6 1773,120 1777.5,119 1782.1,121 1786.5,120 1790.9,117.7 1795.4,117.5 1800,118.7 1803.8,120.8 1807.6,122.9 1812.5,122.5 1816.2,124.8 1820,127 1824.8,129.2 1830,130 1833.6,127.1 1838.5,127 1842,124 1845.4,120.8 1850,120 1847.9,116.1 1846.7,111.8 1844.6,107.8 1843,103.7 1840,97 1844.2,96.1 1847.6,93.2 1852.3,93.6 1855.9,91 1860,90 1863,87" fill="none" stroke="#f7fafd" stroke-width="2.2" stroke-linejoin="round"/>
<polyline points="1353,310 1357.3,309.6 1361.6,308.7 1365.7,307.3 1370,306.7 1374.4,308.9 1377.9,312.4 1381.8,315.3 1386.7,316.7 1391,316.3 1394.9,314.4 1398.7,312.4 1403,311.7 1407,309.5 1411.8,311.2 1415.9,309.5 1420,308 1424.1,308.4 1427.9,306.3 1432,306.5 1436.2,307 1440,305 1443.9,303.5 1446.8,300.6 1450,298 1448.6,293.6 1448.1,289 1448.7,284.3 1446.7,280 1443.1,276.9 1440.4,272.9 1436.7,270 1432.1,269.7 1427.6,268.8 1423,270 1418.8,269.5 1414.9,271.5 1410.9,272.8 1406.7,271.7 1404.8,266.9 1404,261.8 1403,256.7 1398.7,256.4 1394.3,255.8 1390,256.7 1386.7,250 1388.9,246 1387.6,241 1390,237" fill="none" stroke="#f7fafd" stroke-width="2.2" stroke-linejoin="round"/>
<polyline points="1340,280 1343.9,278.5 1347.2,276.1 1350,273 1354.4,272.5 1358,270 1358,266 1356.8,262 1358.3,257.9 1357.9,253.9 1356.7,250 1357.3,246 1357.9,242 1356.2,238 1355.5,234 1356.7,230 1355.5,225.9 1354.9,221.7 1351.8,218.3 1352.1,213.8 1350,210 1348.5,205.9 1344.4,203.7 1342.8,199.7 1340,196.5" fill="none" stroke="#f7fafd" stroke-width="2.2" stroke-linejoin="round"/>
<polyline points="1300,627 1301.9,623.1 1302.8,618.7 1303.5,614.4 1305.1,610.3 1307.9,606.7 1309.5,602.6 1310,598.2 1310.4,593.7 1313,590 1316.5,587.8 1319.3,584.9 1321,580.9 1324.6,578.7 1328.1,576.6 1331,573.7 1333,570 1337,569 1341,567.7 1345,566.7 1349.3,568.2 1353.9,568.3 1358.3,569.6 1362.6,570.8 1366.7,573 1369.7,576 1373.6,577.7 1376.6,580.7 1380,583 1384.1,584.1 1388,585.8 1392.3,586.2 1396.5,587.3 1400,590 1403.6,593.1 1408.5,593 1413,593.9 1416.7,596.7 1423,600 1426.7,597 1430.5,594 1432.6,589.3 1436.7,586.7 1436.1,582.5 1434.4,578.5 1434,574.2 1433,570 1436.7,566.9 1441,565.2 1446.3,566.1 1450,563 1454.2,562.6 1457.6,560.1 1461.5,558.9 1465,556.6 1469.4,556.6 1472.8,554.2 1476.7,553 1480.9,553.2 1484.7,551.7 1488.6,550.8 1492.6,550.1 1495.9,547 1500,546.7 1501.5,542.5 1504.5,539.5 1507,536.1 1509.4,532.6 1513,530 1510.2,525.4 1510,520 1514.1,518.2 1518.5,517 1521.9,513.9 1526.6,513.2 1530,510 1532.5,514.2 1537.6,515.7 1540,520 1542,523.5 1544.7,526.5 1546.7,530 1550.1,532.6 1550.6,537.3 1554.8,539.3 1556.7,543 1560.8,541.6 1565,540.2 1569.4,539.6 1573,536.7 1575.4,540.3 1578.7,543 1581.3,546.4 1584.7,549.1 1586.7,553 1591.1,553.1 1595.1,551.9 1598.4,548.4 1602.3,546.6 1606.7,546.7 1610.8,543.8 1615.4,541.8 1620,540 1621.8,535.7 1622.3,531.3 1621.7,526.7 1626,525 1628.4,520.6 1633.4,519.9 1636.7,516.7 1640.9,519.4 1645.4,521.3 1650,523 1651.8,527.4 1656.9,529 1659.6,532.6 1661.7,536.7 1662.7,532 1663.5,527.3 1663,522.5 1662.1,517.7 1663,513 1668.1,510.1 1673,506.7 1675.8,510.6 1680.5,512.5 1683,516.7 1687,515.8 1690.9,515.3 1694.9,514.6 1699,515.3 1703,515 1701,510.2 1700.2,505.2 1700,500 1694.8,500 1690,498 1695.3,495.3 1700,491.7 1704.2,490.2 1708.3,492.4 1712.5,490.8 1716.7,491.7 1721.6,492.1 1725.1,496.2 1730,496.7 1730.2,492 1733.3,487.8 1733,483 1736.4,480.4 1738.9,477.2 1739.6,472.6 1743,470" fill="none" stroke="#f7fafd" stroke-width="2.2" stroke-linejoin="round"/>
<polyline points="1376.7,733 1377.3,737 1378.8,740.9 1378,745 1382.7,747.3 1387.8,748 1393,748 1396.2,751.3 1399.9,753.9 1403.6,756.6 1406.7,760 1411.2,759.1 1414.8,756.4 1419.1,755.1 1423,753 1427.6,751.9 1432.1,752.2 1436.7,753 1440.5,755.1 1441.9,759.4 1445.1,762.1 1448,765 1452.3,762.3 1457.7,762.5 1461.8,759.1 1466.7,758 1471.8,759.4 1477,760.4 1481.7,763 1485.9,765.4 1488.6,769.6 1493,771.7 1492,776 1490,780 1491.6,775 1495,771 1492.4,774.6 1490.1,778.5 1487,781.7 1483.3,784.2 1482.3,789 1477.5,790.5 1476.8,795.6 1473,798 1471.8,802 1472.5,806 1473.9,810 1473,814 1475.7,817.6 1478.9,821 1481,825 1482.9,829.1 1484.3,833.4 1485,837.9 1484.4,842.8 1487,846.7 1490.4,849.3 1494.3,850.3 1498.9,849.1 1502.6,850.8 1505.9,853.8 1510.5,852.5 1514,855 1516.1,859.7 1519.9,863.3 1522,868 1525.9,870.6 1531,869 1534.7,872.5 1539.4,872.3 1543.6,874 1548.4,874.7 1553.1,875.9 1557,879 1561.9,879.4 1566.5,877.8 1571.1,876.2 1576,876.5 1580.3,877.5 1584.2,880 1589.1,879.2 1593.1,881.4 1597.7,881.3 1602,882.6 1606,884.7 1610.7,886.1 1615.4,886.5 1620.4,885.5 1625,887" fill="none" stroke="#f7fafd" stroke-width="2.2" stroke-linejoin="round"/>
<polygon points="686,295 687.5,270 696,252.5 701,255 709,272.5 721,269 735,266 740,255 736,241 730,226 732.5,215 732.5,196 740,194 746,197.5 751,210 757.5,209 762.5,192.5 766,175 771,173 776,182.5 777.5,210 782.5,245 790,257.5 801,270 804,242.5 807.5,232.5 827.5,210 832.5,211 872.5,257.5 872.5,265 864,270 865,277.5 876,292.5 886,300 887.5,310 897.5,300 910,299 920,294 925,297.5 927.5,306 937.5,317.5 945,332.5 951,342.5 957.5,357.5 967.5,362.5 966,376 975,385 985,390 990,401 996,406 990,415 990,421 997,426 1007,434 1012,440 1009,447 1014,451 1025,452 1031,467 1037,462 1055,465 1070,454 1085,445 1100,440 1104,447 1110,451 1122,444 1137,439 1141,422 1139,407 1136,400 1129,380 1127.5,350 1130,342 1155,332 1180,310 1190,290 1180,280 1185,270 1200,262 1215,257 1222,242 1215,232 1217,225 1235,227 1255,225 1267,227 1255,237 1257,252 1272,260 1272,270 1262,280 1280,295 1287,297 1317,287 1330,280 1340,280 1350,290 1350,310 1352,330 1345,337 1330,342 1312,350 1297,345 1280,342 1265,335 1250,350 1235,342 1225,340 1210,355 1197,370 1200,377 1209,380 1210,390 1205,395 1207.5,405 1210,415 1217.5,422.5 1236,424 1242.5,414 1255,412.5 1267.5,410 1271,407.5 1276,415 1286,419 1290,426 1295,434 1292.5,440 1285,447.5 1280,457.5 1276,467.5 1272.5,480 1267.5,490 1262.5,499 1264,511 1280,520 1292,530 1295,537 1305,542 1302,550 1295,560 1295,570 1285,580 1280,590 1277,600 1285,612 1295,625 1300,627 1317,622 1337,625 1342,640 1350,650 1367,652 1380,647 1395,650 1415,650 1425,657 1435,670 1432,687 1430,700 1415,710 1395,710 1385,720 1375,732 1360,720 1350,720 1340,727 1325,732 1310,745 1310,755 1300,765 1285,772 1270,780 1260,777 1255,767 1240,770 1235,777 1232,790 1227,797 1212,782 1200,770 1192,775 1185,787 1180,777 1170,772 1162,780 1152,797 1140,802 1125,790 1105,780 1090,775 1080,785 1075,795 1062,805 1040,800 1025,802 1007,815 1005,825 1010,840 1020,860 1022,875 1025,895 1027,910 1025,922 1005,920 990,917 975,917 972,907 967,890 965,872 957,870 940,880 922,890 900,895 885,892 870,890 870,882 860,875 855,860 857,847 855,840 837,840 820,835 805,835 787,835 782,830 785,825 790,812 797,802 800,790 795,777 800,770 807,762 815,752 810,740 790,742 775,737 757,732 755,720 750,707 750,690 747.5,685 740,677.5 736,667.5 737.5,661 747.5,655 754,646 737.5,645 725,647.5 694,647.5 675,655 656,664 644,670 632.5,667.5 629,664 640,655 646,645 650,635 646,632.5 641,627.5 640,620 629,617.5 631,612.5 629,602.5 630,589 640,582.5 651,580 646,567.5 647.5,555 652.5,546 657.5,541 666,544 674,539 681,535 685,527.5 687.5,515 691,509 701,514 712.5,504 716,495 722.5,487.5 732.5,487.5 739,484 729,471 727.5,461 732.5,460 739,455 735,445 740,437.5 741,430 741,425 742.5,412.5 742.5,400 741,387.5 742.5,376 739,370 737.5,360 740,350 739,344 737.5,332.5 735,325 727.5,324 722.5,319 714,317.5 707.5,324 701,321 695,310 690,300" fill="#b6d38c"/>
<filter id="bl" x="-10%" y="-10%" width="120%" height="120%"><feGaussianBlur stdDeviation="5"/></filter>
<clipPath id="c_diqing"><polygon points="720,150 900,150 920,280 887.5,310 890,307.5 886,315 875,331 880,349 865,365 862.5,385 856,390 854,377.5 840,362.5 825,347.5 816,326 804,335 802.5,356 806,370 814,386 810,381 801,385 790,371 785,379 769,379 764,374 762.5,362.5 766,350 757.5,341 755,325 752.5,310 750,300 746,295 736,266 725,240"/></clipPath>
<clipPath id="c_nujiang"><polygon points="650,250 736,266 746,295 750,300 752.5,310 755,325 757.5,341 766,350 762.5,362.5 764,374 769,379 785,379 790,371 801,385 810,381 814,386 822.5,400 828,411 811,419 800,437.5 789,449 768,458 766,475 774,490 759,494 754,494 752.5,511 745,512.5 744,505 739,484 650,484"/></clipPath>
<clipPath id="c_lijiang"><polygon points="887.5,310 890,307.5 886,315 875,331 880,349 865,365 862.5,385 856,390 854,377.5 840,362.5 825,347.5 816,326 804,335 802.5,356 806,370 814,386 822.5,400 825,410 832.5,412.5 855,416 872.5,415 879,409 889,412.5 900,421 893.75,426 899,437.5 897.5,452.5 903,467.5 916,471 922,462 937,454 944,456 961,445 991,434 997,430 1020,400 960,280 900,280"/></clipPath>
<clipPath id="c_dali"><polygon points="828,411 811,419 800,437.5 789,449 768,458 766,475 774,490 759,494 754,494 752.5,511 768,510.6 776,516 792.5,514 796,527.5 811,539 822.5,554 839,557.5 852.5,548 860,555.6 871,563 875,569 882.5,580 899,587.5 909,591 935,585 939,587.5 927.5,582 931,569 929,555.6 935,542.5 946,539 948,531 946,520 948,505 942.5,490 946,475 944,456 937,454 922,462 916,471 903,467.5 897.5,452.5 899,437.5 893.75,426 900,421 889,412.5 879,409 872.5,415 855,416 832.5,412.5 825,410"/></clipPath>
<clipPath id="c_baoshan"><polygon points="681,535 700,470 739,484 744,505 745,512.5 752.5,511 768,510.6 776,516 792.5,514 796,527.5 811,539 822.5,554 839,557.5 852.5,548 860,555.6 871,563 875,569 860,569 845,580 838,590.5 825.7,608 811.7,631 797.6,636 780,631 775,630 755,641 737.5,645 737.5,625 737.5,607.5 725,605 715,600 712.5,587.5 722.5,584 720,576 700,574 695,565 689,555 687.5,540"/></clipPath>
<clipPath id="c_dehong"><polygon points="600,500 681,535 687.5,540 689,555 695,565 700,574 720,576 722.5,584 712.5,587.5 715,600 725,605 737.5,607.5 737.5,625 737.5,645 754,646 740,700 600,700"/></clipPath>
<clipPath id="c_lincang"><polygon points="737.5,645 755,641 775,630 780,631 797.6,636 811.7,631 825.7,608 838,590.5 868,594 871.5,590.5 896,590.5 906.6,615 905,647 892.6,654 896,668 892.6,678.5 898,691 885.5,692.6 875,699.6 871.5,713.7 866,729.5 850,731 833,727.7 824,733 815,742 700,742 700,645"/></clipPath>
<clipPath id="c_banna"><polygon points="857,847 865,827 880,821.5 894.6,811 918,799.6 941,792 961.7,795 992,791 996.7,799.6 1005,811 1007,815 1100,900 850,950"/></clipPath>
<clipPath id="c_chuxiong"><polygon points="944,456 961,445 991,434 997,430 1007,434 1012,440 1009,447 1014,451 1025,452 1031,467 1037,462 1055,465 1069,455 1078,466 1079,491 1081,507 1090,522 1082,530 1079,542 1084,551 1072,554 1063,560 1069,570 1062,570 1047.5,577 1037,598 1046,621 1039,634 1027,633 1015,625 996.5,637 989,621 979,630 971.7,629 960,617 956,606 945,589 935,585 939,587.5 927.5,582 931,569 929,555.6 935,542.5 946,539 948,531 946,520 948,505 942.5,490 946,475"/></clipPath>
<clipPath id="c_kunming"><polygon points="1069,455 1070,454 1085,445 1100,440 1104,447 1110,451 1122,444 1137,439 1141,418 1145,415 1148,440 1151,449 1164,457.5 1165,484 1181.5,487 1189,491 1187,511.5 1177,514 1171,524.6 1165,530 1168,545 1183,554 1180,564 1186,577 1200,580 1208,579 1199,592 1181.7,608 1168.5,597.7 1157,602 1149.6,611 1113,617 1106,612 1075,621 1065,612 1074,584.6 1068,570 1069,570 1063,560 1072,554 1084,551 1079,542 1082,530 1090,522 1081,507 1079,491 1078,466"/></clipPath>
<clipPath id="c_qujing"><polygon points="1141,418 1175,405 1180,380 1197,377 1209,380 1210,390 1205,395 1207.5,405 1210,415 1217.5,422.5 1236,424 1242.5,414 1255,412.5 1267.5,410 1271,407.5 1276,415 1286,419 1290,426 1295,434 1350,434 1350,640 1300,627 1280,620 1250,620 1240,614 1234,614 1231,599 1199,592 1208,579 1200,580 1186,577 1180,564 1183,554 1168,545 1165,530 1171,524.6 1177,514 1187,511.5 1189,491 1181.5,487 1165,484 1164,457.5 1151,449 1148,440 1145,415"/></clipPath>
<clipPath id="c_zhaotong"><polygon points="1120,200 1400,200 1400,434 1295,434 1290,426 1286,419 1276,415 1271,407.5 1267.5,410 1255,412.5 1242.5,414 1236,424 1217.5,422.5 1210,415 1207.5,405 1205,395 1210,390 1209,380 1197,377 1180,380 1175,405 1145,415 1141,418 1120,418"/></clipPath>
<clipPath id="c_yuxi"><polygon points="979,630 989,621 996.5,637 1015,625 1027,633 1039,634 1046,621 1037,598 1047.5,577 1062,570 1068,570 1074,584.6 1065,612 1075,621 1106,612 1113,617 1149.6,611 1148,614 1151,640 1142,654.6 1128,657.5 1114.6,657.5 1109,666 1091,657.5 1074,660 1059,672 1062,680 1069.6,687 1078,699 1074,707.7 1064,715 1049,719 1034.6,718 1024,709 1018.5,694.6 1002.5,689 1000,684 991,673 998,650 978.7,631"/></clipPath>
<clipPath id="c_honghe"><polygon points="1034.6,718 1049,719 1064,715 1074,707.7 1078,699 1069.6,687 1062,680 1059,672 1074,660 1091,657.5 1109,666 1114.6,657.5 1128,657.5 1142,654.6 1151,640 1148,614 1149.6,611 1157,602 1168.5,597.7 1181.7,608 1199,592 1231,599 1234,614 1240,614 1217,625 1199,635.6 1193,652 1205,666 1196,687 1195,701 1208,704 1217,716 1222,740 1225,760 1235,777 1240,850 1050,850 1062,805 1074,792 1062,791 1050.6,780.6 1034.6,770 1027,764.6 1036,753 1049,751.5 1050.6,743 1043,735 1030,731"/></clipPath>
<clipPath id="c_wenshan"><polygon points="1193,652 1199,635.6 1217,625 1240,614 1250,620 1280,620 1300,627 1450,627 1450,800 1235,777 1225,760 1222,740 1217,716 1208,704 1195,701 1196,687 1205,666"/></clipPath>
<g clip-path="url(#yn)">
<g clip-path="url(#c_diqing)"><polygon points="720,150 900,150 920,280 887.5,310 890,307.5 886,315 875,331 880,349 865,365 862.5,385 856,390 854,377.5 840,362.5 825,347.5 816,326 804,335 802.5,356 806,370 814,386 810,381 801,385 790,371 785,379 769,379 764,374 762.5,362.5 766,350 757.5,341 755,325 752.5,310 750,300 746,295 736,266 725,240" fill="#b6d586"/><polygon points="720,150 900,150 920,280 887.5,310 890,307.5 886,315 875,331 880,349 865,365 862.5,385 856,390 854,377.5 840,362.5 825,347.5 816,326 804,335 802.5,356 806,370 814,386 810,381 801,385 790,371 785,379 769,379 764,374 762.5,362.5 766,350 757.5,341 755,325 752.5,310 750,300 746,295 736,266 725,240" fill="none" stroke="#a1c375" stroke-width="14" filter="url(#bl)"/></g>
<g clip-path="url(#c_nujiang)"><polygon points="650,250 736,266 746,295 750,300 752.5,310 755,325 757.5,341 766,350 762.5,362.5 764,374 769,379 785,379 790,371 801,385 810,381 814,386 822.5,400 828,411 811,419 800,437.5 789,449 768,458 766,475 774,490 759,494 754,494 752.5,511 745,512.5 744,505 739,484 650,484" fill="#a8c882"/><polygon points="650,250 736,266 746,295 750,300 752.5,310 755,325 757.5,341 766,350 762.5,362.5 764,374 769,379 785,379 790,371 801,385 810,381 814,386 822.5,400 828,411 811,419 800,437.5 789,449 768,458 766,475 774,490 759,494 754,494 752.5,511 745,512.5 744,505 739,484 650,484" fill="none" stroke="#92b570" stroke-width="14" filter="url(#bl)"/></g>
<g clip-path="url(#c_lijiang)"><polygon points="887.5,310 890,307.5 886,315 875,331 880,349 865,365 862.5,385 856,390 854,377.5 840,362.5 825,347.5 816,326 804,335 802.5,356 806,370 814,386 822.5,400 825,410 832.5,412.5 855,416 872.5,415 879,409 889,412.5 900,421 893.75,426 899,437.5 897.5,452.5 903,467.5 916,471 922,462 937,454 944,456 961,445 991,434 997,430 1020,400 960,280 900,280" fill="#c4daa0"/><polygon points="887.5,310 890,307.5 886,315 875,331 880,349 865,365 862.5,385 856,390 854,377.5 840,362.5 825,347.5 816,326 804,335 802.5,356 806,370 814,386 822.5,400 825,410 832.5,412.5 855,416 872.5,415 879,409 889,412.5 900,421 893.75,426 899,437.5 897.5,452.5 903,467.5 916,471 922,462 937,454 944,456 961,445 991,434 997,430 1020,400 960,280 900,280" fill="none" stroke="#adc88b" stroke-width="14" filter="url(#bl)"/></g>
<g clip-path="url(#c_dali)"><polygon points="828,411 811,419 800,437.5 789,449 768,458 766,475 774,490 759,494 754,494 752.5,511 768,510.6 776,516 792.5,514 796,527.5 811,539 822.5,554 839,557.5 852.5,548 860,555.6 871,563 875,569 882.5,580 899,587.5 909,591 935,585 939,587.5 927.5,582 931,569 929,555.6 935,542.5 946,539 948,531 946,520 948,505 942.5,490 946,475 944,456 937,454 922,462 916,471 903,467.5 897.5,452.5 899,437.5 893.75,426 900,421 889,412.5 879,409 872.5,415 855,416 832.5,412.5 825,410" fill="#b6d488"/><polygon points="828,411 811,419 800,437.5 789,449 768,458 766,475 774,490 759,494 754,494 752.5,511 768,510.6 776,516 792.5,514 796,527.5 811,539 822.5,554 839,557.5 852.5,548 860,555.6 871,563 875,569 882.5,580 899,587.5 909,591 935,585 939,587.5 927.5,582 931,569 929,555.6 935,542.5 946,539 948,531 946,520 948,505 942.5,490 946,475 944,456 937,454 922,462 916,471 903,467.5 897.5,452.5 899,437.5 893.75,426 900,421 889,412.5 879,409 872.5,415 855,416 832.5,412.5 825,410" fill="none" stroke="#a1c277" stroke-width="14" filter="url(#bl)"/></g>
<g clip-path="url(#c_baoshan)"><polygon points="681,535 700,470 739,484 744,505 745,512.5 752.5,511 768,510.6 776,516 792.5,514 796,527.5 811,539 822.5,554 839,557.5 852.5,548 860,555.6 871,563 875,569 860,569 845,580 838,590.5 825.7,608 811.7,631 797.6,636 780,631 775,630 755,641 737.5,645 737.5,625 737.5,607.5 725,605 715,600 712.5,587.5 722.5,584 720,576 700,574 695,565 689,555 687.5,540" fill="#c2d99d"/><polygon points="681,535 700,470 739,484 744,505 745,512.5 752.5,511 768,510.6 776,516 792.5,514 796,527.5 811,539 822.5,554 839,557.5 852.5,548 860,555.6 871,563 875,569 860,569 845,580 838,590.5 825.7,608 811.7,631 797.6,636 780,631 775,630 755,641 737.5,645 737.5,625 737.5,607.5 725,605 715,600 712.5,587.5 722.5,584 720,576 700,574 695,565 689,555 687.5,540" fill="none" stroke="#aac688" stroke-width="14" filter="url(#bl)"/></g>
<g clip-path="url(#c_dehong)"><polygon points="600,500 681,535 687.5,540 689,555 695,565 700,574 720,576 722.5,584 712.5,587.5 715,600 725,605 737.5,607.5 737.5,625 737.5,645 754,646 740,700 600,700" fill="#b0ce88"/><polygon points="600,500 681,535 687.5,540 689,555 695,565 700,574 720,576 722.5,584 712.5,587.5 715,600 725,605 737.5,607.5 737.5,625 737.5,645 754,646 740,700 600,700" fill="none" stroke="#98b874" stroke-width="14" filter="url(#bl)"/></g>
<g clip-path="url(#c_lincang)"><polygon points="737.5,645 755,641 775,630 780,631 797.6,636 811.7,631 825.7,608 838,590.5 868,594 871.5,590.5 896,590.5 906.6,615 905,647 892.6,654 896,668 892.6,678.5 898,691 885.5,692.6 875,699.6 871.5,713.7 866,729.5 850,731 833,727.7 824,733 815,742 700,742 700,645" fill="#c0d89b"/><polygon points="737.5,645 755,641 775,630 780,631 797.6,636 811.7,631 825.7,608 838,590.5 868,594 871.5,590.5 896,590.5 906.6,615 905,647 892.6,654 896,668 892.6,678.5 898,691 885.5,692.6 875,699.6 871.5,713.7 866,729.5 850,731 833,727.7 824,733 815,742 700,742 700,645" fill="none" stroke="#a8c686" stroke-width="14" filter="url(#bl)"/></g>
<g clip-path="url(#c_banna)"><polygon points="857,847 865,827 880,821.5 894.6,811 918,799.6 941,792 961.7,795 992,791 996.7,799.6 1005,811 1007,815 1100,900 850,950" fill="#a5c67e"/><polygon points="857,847 865,827 880,821.5 894.6,811 918,799.6 941,792 961.7,795 992,791 996.7,799.6 1005,811 1007,815 1100,900 850,950" fill="none" stroke="#8fb16c" stroke-width="14" filter="url(#bl)"/></g>
<g clip-path="url(#c_chuxiong)"><polygon points="944,456 961,445 991,434 997,430 1007,434 1012,440 1009,447 1014,451 1025,452 1031,467 1037,462 1055,465 1069,455 1078,466 1079,491 1081,507 1090,522 1082,530 1079,542 1084,551 1072,554 1063,560 1069,570 1062,570 1047.5,577 1037,598 1046,621 1039,634 1027,633 1015,625 996.5,637 989,621 979,630 971.7,629 960,617 956,606 945,589 935,585 939,587.5 927.5,582 931,569 929,555.6 935,542.5 946,539 948,531 946,520 948,505 942.5,490 946,475" fill="#a8c883"/><polygon points="944,456 961,445 991,434 997,430 1007,434 1012,440 1009,447 1014,451 1025,452 1031,467 1037,462 1055,465 1069,455 1078,466 1079,491 1081,507 1090,522 1082,530 1079,542 1084,551 1072,554 1063,560 1069,570 1062,570 1047.5,577 1037,598 1046,621 1039,634 1027,633 1015,625 996.5,637 989,621 979,630 971.7,629 960,617 956,606 945,589 935,585 939,587.5 927.5,582 931,569 929,555.6 935,542.5 946,539 948,531 946,520 948,505 942.5,490 946,475" fill="none" stroke="#90b270" stroke-width="14" filter="url(#bl)"/></g>
<g clip-path="url(#c_kunming)"><polygon points="1069,455 1070,454 1085,445 1100,440 1104,447 1110,451 1122,444 1137,439 1141,418 1145,415 1148,440 1151,449 1164,457.5 1165,484 1181.5,487 1189,491 1187,511.5 1177,514 1171,524.6 1165,530 1168,545 1183,554 1180,564 1186,577 1200,580 1208,579 1199,592 1181.7,608 1168.5,597.7 1157,602 1149.6,611 1113,617 1106,612 1075,621 1065,612 1074,584.6 1068,570 1069,570 1063,560 1072,554 1084,551 1079,542 1082,530 1090,522 1081,507 1079,491 1078,466" fill="#b5d388"/><polygon points="1069,455 1070,454 1085,445 1100,440 1104,447 1110,451 1122,444 1137,439 1141,418 1145,415 1148,440 1151,449 1164,457.5 1165,484 1181.5,487 1189,491 1187,511.5 1177,514 1171,524.6 1165,530 1168,545 1183,554 1180,564 1186,577 1200,580 1208,579 1199,592 1181.7,608 1168.5,597.7 1157,602 1149.6,611 1113,617 1106,612 1075,621 1065,612 1074,584.6 1068,570 1069,570 1063,560 1072,554 1084,551 1079,542 1082,530 1090,522 1081,507 1079,491 1078,466" fill="none" stroke="#9ec076" stroke-width="14" filter="url(#bl)"/></g>
<g clip-path="url(#c_qujing)"><polygon points="1141,418 1175,405 1180,380 1197,377 1209,380 1210,390 1205,395 1207.5,405 1210,415 1217.5,422.5 1236,424 1242.5,414 1255,412.5 1267.5,410 1271,407.5 1276,415 1286,419 1290,426 1295,434 1350,434 1350,640 1300,627 1280,620 1250,620 1240,614 1234,614 1231,599 1199,592 1208,579 1200,580 1186,577 1180,564 1183,554 1168,545 1165,530 1171,524.6 1177,514 1187,511.5 1189,491 1181.5,487 1165,484 1164,457.5 1151,449 1148,440 1145,415" fill="#c4daa0"/><polygon points="1141,418 1175,405 1180,380 1197,377 1209,380 1210,390 1205,395 1207.5,405 1210,415 1217.5,422.5 1236,424 1242.5,414 1255,412.5 1267.5,410 1271,407.5 1276,415 1286,419 1290,426 1295,434 1350,434 1350,640 1300,627 1280,620 1250,620 1240,614 1234,614 1231,599 1199,592 1208,579 1200,580 1186,577 1180,564 1183,554 1168,545 1165,530 1171,524.6 1177,514 1187,511.5 1189,491 1181.5,487 1165,484 1164,457.5 1151,449 1148,440 1145,415" fill="none" stroke="#acc88c" stroke-width="14" filter="url(#bl)"/></g>
<g clip-path="url(#c_zhaotong)"><polygon points="1120,200 1400,200 1400,434 1295,434 1290,426 1286,419 1276,415 1271,407.5 1267.5,410 1255,412.5 1242.5,414 1236,424 1217.5,422.5 1210,415 1207.5,405 1205,395 1210,390 1209,380 1197,377 1180,380 1175,405 1145,415 1141,418 1120,418" fill="#a8c882"/><polygon points="1120,200 1400,200 1400,434 1295,434 1290,426 1286,419 1276,415 1271,407.5 1267.5,410 1255,412.5 1242.5,414 1236,424 1217.5,422.5 1210,415 1207.5,405 1205,395 1210,390 1209,380 1197,377 1180,380 1175,405 1145,415 1141,418 1120,418" fill="none" stroke="#91b36f" stroke-width="14" filter="url(#bl)"/></g>
<g clip-path="url(#c_yuxi)"><polygon points="979,630 989,621 996.5,637 1015,625 1027,633 1039,634 1046,621 1037,598 1047.5,577 1062,570 1068,570 1074,584.6 1065,612 1075,621 1106,612 1113,617 1149.6,611 1148,614 1151,640 1142,654.6 1128,657.5 1114.6,657.5 1109,666 1091,657.5 1074,660 1059,672 1062,680 1069.6,687 1078,699 1074,707.7 1064,715 1049,719 1034.6,718 1024,709 1018.5,694.6 1002.5,689 1000,684 991,673 998,650 978.7,631" fill="#c9dea7"/><polygon points="979,630 989,621 996.5,637 1015,625 1027,633 1039,634 1046,621 1037,598 1047.5,577 1062,570 1068,570 1074,584.6 1065,612 1075,621 1106,612 1113,617 1149.6,611 1148,614 1151,640 1142,654.6 1128,657.5 1114.6,657.5 1109,666 1091,657.5 1074,660 1059,672 1062,680 1069.6,687 1078,699 1074,707.7 1064,715 1049,719 1034.6,718 1024,709 1018.5,694.6 1002.5,689 1000,684 991,673 998,650 978.7,631" fill="none" stroke="#b1cb92" stroke-width="14" filter="url(#bl)"/></g>
<g clip-path="url(#c_honghe)"><polygon points="1034.6,718 1049,719 1064,715 1074,707.7 1078,699 1069.6,687 1062,680 1059,672 1074,660 1091,657.5 1109,666 1114.6,657.5 1128,657.5 1142,654.6 1151,640 1148,614 1149.6,611 1157,602 1168.5,597.7 1181.7,608 1199,592 1231,599 1234,614 1240,614 1217,625 1199,635.6 1193,652 1205,666 1196,687 1195,701 1208,704 1217,716 1222,740 1225,760 1235,777 1240,850 1050,850 1062,805 1074,792 1062,791 1050.6,780.6 1034.6,770 1027,764.6 1036,753 1049,751.5 1050.6,743 1043,735 1030,731" fill="#b7d48c"/><polygon points="1034.6,718 1049,719 1064,715 1074,707.7 1078,699 1069.6,687 1062,680 1059,672 1074,660 1091,657.5 1109,666 1114.6,657.5 1128,657.5 1142,654.6 1151,640 1148,614 1149.6,611 1157,602 1168.5,597.7 1181.7,608 1199,592 1231,599 1234,614 1240,614 1217,625 1199,635.6 1193,652 1205,666 1196,687 1195,701 1208,704 1217,716 1222,740 1225,760 1235,777 1240,850 1050,850 1062,805 1074,792 1062,791 1050.6,780.6 1034.6,770 1027,764.6 1036,753 1049,751.5 1050.6,743 1043,735 1030,731" fill="none" stroke="#9fc07a" stroke-width="14" filter="url(#bl)"/></g>
<g clip-path="url(#c_wenshan)"><polygon points="1193,652 1199,635.6 1217,625 1240,614 1250,620 1280,620 1300,627 1450,627 1450,800 1235,777 1225,760 1222,740 1217,716 1208,704 1195,701 1196,687 1205,666" fill="#a8c881"/><polygon points="1193,652 1199,635.6 1217,625 1240,614 1250,620 1280,620 1300,627 1450,627 1450,800 1235,777 1225,760 1222,740 1217,716 1208,704 1195,701 1196,687 1205,666" fill="none" stroke="#91b36e" stroke-width="14" filter="url(#bl)"/></g>
<polygon points="686,295 687.5,270 696,252.5 701,255 709,272.5 721,269 735,266 740,255 736,241 730,226 732.5,215 732.5,196 740,194 746,197.5 751,210 757.5,209 762.5,192.5 766,175 771,173 776,182.5 777.5,210 782.5,245 790,257.5 801,270 804,242.5 807.5,232.5 827.5,210 832.5,211 872.5,257.5 872.5,265 864,270 865,277.5 876,292.5 886,300 887.5,310 897.5,300 910,299 920,294 925,297.5 927.5,306 937.5,317.5 945,332.5 951,342.5 957.5,357.5 967.5,362.5 966,376 975,385 985,390 990,401 996,406 990,415 990,421 997,426 1007,434 1012,440 1009,447 1014,451 1025,452 1031,467 1037,462 1055,465 1070,454 1085,445 1100,440 1104,447 1110,451 1122,444 1137,439 1141,422 1139,407 1136,400 1129,380 1127.5,350 1130,342 1155,332 1180,310 1190,290 1180,280 1185,270 1200,262 1215,257 1222,242 1215,232 1217,225 1235,227 1255,225 1267,227 1255,237 1257,252 1272,260 1272,270 1262,280 1280,295 1287,297 1317,287 1330,280 1340,280 1350,290 1350,310 1352,330 1345,337 1330,342 1312,350 1297,345 1280,342 1265,335 1250,350 1235,342 1225,340 1210,355 1197,370 1200,377 1209,380 1210,390 1205,395 1207.5,405 1210,415 1217.5,422.5 1236,424 1242.5,414 1255,412.5 1267.5,410 1271,407.5 1276,415 1286,419 1290,426 1295,434 1292.5,440 1285,447.5 1280,457.5 1276,467.5 1272.5,480 1267.5,490 1262.5,499 1264,511 1280,520 1292,530 1295,537 1305,542 1302,550 1295,560 1295,570 1285,580 1280,590 1277,600 1285,612 1295,625 1300,627 1317,622 1337,625 1342,640 1350,650 1367,652 1380,647 1395,650 1415,650 1425,657 1435,670 1432,687 1430,700 1415,710 1395,710 1385,720 1375,732 1360,720 1350,720 1340,727 1325,732 1310,745 1310,755 1300,765 1285,772 1270,780 1260,777 1255,767 1240,770 1235,777 1232,790 1227,797 1212,782 1200,770 1192,775 1185,787 1180,777 1170,772 1162,780 1152,797 1140,802 1125,790 1105,780 1090,775 1080,785 1075,795 1062,805 1040,800 1025,802 1007,815 1005,825 1010,840 1020,860 1022,875 1025,895 1027,910 1025,922 1005,920 990,917 975,917 972,907 967,890 965,872 957,870 940,880 922,890 900,895 885,892 870,890 870,882 860,875 855,860 857,847 855,840 837,840 820,835 805,835 787,835 782,830 785,825 790,812 797,802 800,790 795,777 800,770 807,762 815,752 810,740 790,742 775,737 757,732 755,720 750,707 750,690 747.5,685 740,677.5 736,667.5 737.5,661 747.5,655 754,646 737.5,645 725,647.5 694,647.5 675,655 656,664 644,670 632.5,667.5 629,664 640,655 646,645 650,635 646,632.5 641,627.5 640,620 629,617.5 631,612.5 629,602.5 630,589 640,582.5 651,580 646,567.5 647.5,555 652.5,546 657.5,541 666,544 674,539 681,535 685,527.5 687.5,515 691,509 701,514 712.5,504 716,495 722.5,487.5 732.5,487.5 739,484 729,471 727.5,461 732.5,460 739,455 735,445 740,437.5 741,430 741,425 742.5,412.5 742.5,400 741,387.5 742.5,376 739,370 737.5,360 740,350 739,344 737.5,332.5 735,325 727.5,324 722.5,319 714,317.5 707.5,324 701,321 695,310 690,300" fill="none" stroke="#8fb06e" stroke-opacity="0.55" stroke-width="14" filter="url(#bl)"/>
<polygon points="720,150 900,150 920,280 887.5,310 890,307.5 886,315 875,331 880,349 865,365 862.5,385 856,390 854,377.5 840,362.5 825,347.5 816,326 804,335 802.5,356 806,370 814,386 810,381 801,385 790,371 785,379 769,379 764,374 762.5,362.5 766,350 757.5,341 755,325 752.5,310 750,300 746,295 736,266 725,240" fill="none" stroke="#f4f8ee" stroke-width="1" stroke-linejoin="round"/>
<polygon points="650,250 736,266 746,295 750,300 752.5,310 755,325 757.5,341 766,350 762.5,362.5 764,374 769,379 785,379 790,371 801,385 810,381 814,386 822.5,400 828,411 811,419 800,437.5 789,449 768,458 766,475 774,490 759,494 754,494 752.5,511 745,512.5 744,505 739,484 650,484" fill="none" stroke="#f4f8ee" stroke-width="1" stroke-linejoin="round"/>
<polygon points="887.5,310 890,307.5 886,315 875,331 880,349 865,365 862.5,385 856,390 854,377.5 840,362.5 825,347.5 816,326 804,335 802.5,356 806,370 814,386 822.5,400 825,410 832.5,412.5 855,416 872.5,415 879,409 889,412.5 900,421 893.75,426 899,437.5 897.5,452.5 903,467.5 916,471 922,462 937,454 944,456 961,445 991,434 997,430 1020,400 960,280 900,280" fill="none" stroke="#f4f8ee" stroke-width="1" stroke-linejoin="round"/>
<polygon points="828,411 811,419 800,437.5 789,449 768,458 766,475 774,490 759,494 754,494 752.5,511 768,510.6 776,516 792.5,514 796,527.5 811,539 822.5,554 839,557.5 852.5,548 860,555.6 871,563 875,569 882.5,580 899,587.5 909,591 935,585 939,587.5 927.5,582 931,569 929,555.6 935,542.5 946,539 948,531 946,520 948,505 942.5,490 946,475 944,456 937,454 922,462 916,471 903,467.5 897.5,452.5 899,437.5 893.75,426 900,421 889,412.5 879,409 872.5,415 855,416 832.5,412.5 825,410" fill="none" stroke="#f4f8ee" stroke-width="1" stroke-linejoin="round"/>
<polygon points="681,535 700,470 739,484 744,505 745,512.5 752.5,511 768,510.6 776,516 792.5,514 796,527.5 811,539 822.5,554 839,557.5 852.5,548 860,555.6 871,563 875,569 860,569 845,580 838,590.5 825.7,608 811.7,631 797.6,636 780,631 775,630 755,641 737.5,645 737.5,625 737.5,607.5 725,605 715,600 712.5,587.5 722.5,584 720,576 700,574 695,565 689,555 687.5,540" fill="none" stroke="#f4f8ee" stroke-width="1" stroke-linejoin="round"/>
<polygon points="600,500 681,535 687.5,540 689,555 695,565 700,574 720,576 722.5,584 712.5,587.5 715,600 725,605 737.5,607.5 737.5,625 737.5,645 754,646 740,700 600,700" fill="none" stroke="#f4f8ee" stroke-width="1" stroke-linejoin="round"/>
<polygon points="737.5,645 755,641 775,630 780,631 797.6,636 811.7,631 825.7,608 838,590.5 868,594 871.5,590.5 896,590.5 906.6,615 905,647 892.6,654 896,668 892.6,678.5 898,691 885.5,692.6 875,699.6 871.5,713.7 866,729.5 850,731 833,727.7 824,733 815,742 700,742 700,645" fill="none" stroke="#f4f8ee" stroke-width="1" stroke-linejoin="round"/>
<polygon points="857,847 865,827 880,821.5 894.6,811 918,799.6 941,792 961.7,795 992,791 996.7,799.6 1005,811 1007,815 1100,900 850,950" fill="none" stroke="#f4f8ee" stroke-width="1" stroke-linejoin="round"/>
<polygon points="944,456 961,445 991,434 997,430 1007,434 1012,440 1009,447 1014,451 1025,452 1031,467 1037,462 1055,465 1069,455 1078,466 1079,491 1081,507 1090,522 1082,530 1079,542 1084,551 1072,554 1063,560 1069,570 1062,570 1047.5,577 1037,598 1046,621 1039,634 1027,633 1015,625 996.5,637 989,621 979,630 971.7,629 960,617 956,606 945,589 935,585 939,587.5 927.5,582 931,569 929,555.6 935,542.5 946,539 948,531 946,520 948,505 942.5,490 946,475" fill="none" stroke="#f4f8ee" stroke-width="1" stroke-linejoin="round"/>
<polygon points="1069,455 1070,454 1085,445 1100,440 1104,447 1110,451 1122,444 1137,439 1141,418 1145,415 1148,440 1151,449 1164,457.5 1165,484 1181.5,487 1189,491 1187,511.5 1177,514 1171,524.6 1165,530 1168,545 1183,554 1180,564 1186,577 1200,580 1208,579 1199,592 1181.7,608 1168.5,597.7 1157,602 1149.6,611 1113,617 1106,612 1075,621 1065,612 1074,584.6 1068,570 1069,570 1063,560 1072,554 1084,551 1079,542 1082,530 1090,522 1081,507 1079,491 1078,466" fill="none" stroke="#f4f8ee" stroke-width="1" stroke-linejoin="round"/>
<polygon points="1141,418 1175,405 1180,380 1197,377 1209,380 1210,390 1205,395 1207.5,405 1210,415 1217.5,422.5 1236,424 1242.5,414 1255,412.5 1267.5,410 1271,407.5 1276,415 1286,419 1290,426 1295,434 1350,434 1350,640 1300,627 1280,620 1250,620 1240,614 1234,614 1231,599 1199,592 1208,579 1200,580 1186,577 1180,564 1183,554 1168,545 1165,530 1171,524.6 1177,514 1187,511.5 1189,491 1181.5,487 1165,484 1164,457.5 1151,449 1148,440 1145,415" fill="none" stroke="#f4f8ee" stroke-width="1" stroke-linejoin="round"/>
<polygon points="1120,200 1400,200 1400,434 1295,434 1290,426 1286,419 1276,415 1271,407.5 1267.5,410 1255,412.5 1242.5,414 1236,424 1217.5,422.5 1210,415 1207.5,405 1205,395 1210,390 1209,380 1197,377 1180,380 1175,405 1145,415 1141,418 1120,418" fill="none" stroke="#f4f8ee" stroke-width="1" stroke-linejoin="round"/>
<polygon points="979,630 989,621 996.5,637 1015,625 1027,633 1039,634 1046,621 1037,598 1047.5,577 1062,570 1068,570 1074,584.6 1065,612 1075,621 1106,612 1113,617 1149.6,611 1148,614 1151,640 1142,654.6 1128,657.5 1114.6,657.5 1109,666 1091,657.5 1074,660 1059,672 1062,680 1069.6,687 1078,699 1074,707.7 1064,715 1049,719 1034.6,718 1024,709 1018.5,694.6 1002.5,689 1000,684 991,673 998,650 978.7,631" fill="none" stroke="#f4f8ee" stroke-width="1" stroke-linejoin="round"/>
<polygon points="1034.6,718 1049,719 1064,715 1074,707.7 1078,699 1069.6,687 1062,680 1059,672 1074,660 1091,657.5 1109,666 1114.6,657.5 1128,657.5 1142,654.6 1151,640 1148,614 1149.6,611 1157,602 1168.5,597.7 1181.7,608 1199,592 1231,599 1234,614 1240,614 1217,625 1199,635.6 1193,652 1205,666 1196,687 1195,701 1208,704 1217,716 1222,740 1225,760 1235,777 1240,850 1050,850 1062,805 1074,792 1062,791 1050.6,780.6 1034.6,770 1027,764.6 1036,753 1049,751.5 1050.6,743 1043,735 1030,731" fill="none" stroke="#f4f8ee" stroke-width="1" stroke-linejoin="round"/>
<polygon points="1193,652 1199,635.6 1217,625 1240,614 1250,620 1280,620 1300,627 1450,627 1450,800 1235,777 1225,760 1222,740 1217,716 1208,704 1195,701 1196,687 1205,666" fill="none" stroke="#f4f8ee" stroke-width="1" stroke-linejoin="round"/>
</g>
<polygon points="686,295 687.5,270 696,252.5 701,255 709,272.5 721,269 735,266 740,255 736,241 730,226 732.5,215 732.5,196 740,194 746,197.5 751,210 757.5,209 762.5,192.5 766,175 771,173 776,182.5 777.5,210 782.5,245 790,257.5 801,270 804,242.5 807.5,232.5 827.5,210 832.5,211 872.5,257.5 872.5,265 864,270 865,277.5 876,292.5 886,300 887.5,310 897.5,300 910,299 920,294 925,297.5 927.5,306 937.5,317.5 945,332.5 951,342.5 957.5,357.5 967.5,362.5 966,376 975,385 985,390 990,401 996,406 990,415 990,421 997,426 1007,434 1012,440 1009,447 1014,451 1025,452 1031,467 1037,462 1055,465 1070,454 1085,445 1100,440 1104,447 1110,451 1122,444 1137,439 1141,422 1139,407 1136,400 1129,380 1127.5,350 1130,342 1155,332 1180,310 1190,290 1180,280 1185,270 1200,262 1215,257 1222,242 1215,232 1217,225 1235,227 1255,225 1267,227 1255,237 1257,252 1272,260 1272,270 1262,280 1280,295 1287,297 1317,287 1330,280 1340,280 1350,290 1350,310 1352,330 1345,337 1330,342 1312,350 1297,345 1280,342 1265,335 1250,350 1235,342 1225,340 1210,355 1197,370 1200,377 1209,380 1210,390 1205,395 1207.5,405 1210,415 1217.5,422.5 1236,424 1242.5,414 1255,412.5 1267.5,410 1271,407.5 1276,415 1286,419 1290,426 1295,434 1292.5,440 1285,447.5 1280,457.5 1276,467.5 1272.5,480 1267.5,490 1262.5,499 1264,511 1280,520 1292,530 1295,537 1305,542 1302,550 1295,560 1295,570 1285,580 1280,590 1277,600 1285,612 1295,625 1300,627 1317,622 1337,625 1342,640 1350,650 1367,652 1380,647 1395,650 1415,650 1425,657 1435,670 1432,687 1430,700 1415,710 1395,710 1385,720 1375,732 1360,720 1350,720 1340,727 1325,732 1310,745 1310,755 1300,765 1285,772 1270,780 1260,777 1255,767 1240,770 1235,777 1232,790 1227,797 1212,782 1200,770 1192,775 1185,787 1180,777 1170,772 1162,780 1152,797 1140,802 1125,790 1105,780 1090,775 1080,785 1075,795 1062,805 1040,800 1025,802 1007,815 1005,825 1010,840 1020,860 1022,875 1025,895 1027,910 1025,922 1005,920 990,917 975,917 972,907 967,890 965,872 957,870 940,880 922,890 900,895 885,892 870,890 870,882 860,875 855,860 857,847 855,840 837,840 820,835 805,835 787,835 782,830 785,825 790,812 797,802 800,790 795,777 800,770 807,762 815,752 810,740 790,742 775,737 757,732 755,720 750,707 750,690 747.5,685 740,677.5 736,667.5 737.5,661 747.5,655 754,646 737.5,645 725,647.5 694,647.5 675,655 656,664 644,670 632.5,667.5 629,664 640,655 646,645 650,635 646,632.5 641,627.5 640,620 629,617.5 631,612.5 629,602.5 630,589 640,582.5 651,580 646,567.5 647.5,555 652.5,546 657.5,541 666,544 674,539 681,535 685,527.5 687.5,515 691,509 701,514 712.5,504 716,495 722.5,487.5 732.5,487.5 739,484 729,471 727.5,461 732.5,460 739,455 735,445 740,437.5 741,430 741,425 742.5,412.5 742.5,400 741,387.5 742.5,376 739,370 737.5,360 740,350 739,344 737.5,332.5 735,325 727.5,324 722.5,319 714,317.5 707.5,324 701,321 695,310 690,300" fill="none" stroke="#ffffff" stroke-width="2.6" stroke-linejoin="round"/>
<path d="M1110,567 Q1117,566 1119,574 Q1120,584 1114,590 Q1108,586 1109,577 Z" fill="#9fc9e8"/>
<path d="M871,484 Q876,483 878,489 Q877,495 872,494 Q869,490 871,484 Z" fill="#9fc9e8"/>
<path d="M919,415 L922,415 L923,430 L920,430 Z" fill="#a9cfe9"/>
<g font-size="14.7" fill="#7b8794" text-anchor="middle">
<text x="27" y="102">拉萨</text>
<text x="425" y="179">芝地区</text>
<text x="1108" y="112">雅安</text>
<text x="1201" y="97">眉山</text>
<text x="1320" y="138">内江</text>
<text x="1191" y="179">乐山</text>
<text x="1323" y="177">自贡</text>
<text x="1511" y="125">重庆</text>
<text x="1626" y="145">重庆市县</text>
<text x="1432" y="187">重庆市市辖区</text>
<text x="1842" y="162">张家界</text>
<text x="1767" y="227">湘西土家族苗族自治州</text>
<text x="1369" y="242">泸州</text>
<text x="1293" y="238">宜宾</text>
<text x="1521" y="276">遵义</text>
<text x="1657" y="294">铜仁地区</text>
<text x="1800" y="334">怀化</text>
<text x="1905" y="305">娄底</text>
<text x="1052" y="302">凉山彝族自治州</text>
<text x="1346" y="379">毕节地区</text>
<text x="1020" y="403">攀枝花</text>
<text x="1485" y="400">贵阳</text>
<text x="1873" y="392">邵阳</text>
<text x="1329" y="445">六盘水</text>
<text x="1659" y="431">黔东南苗族侗族自治州</text>
<text x="1414" y="479">安顺</text>
<text x="1536" y="477">黔南布依族苗族自治州</text>
<text x="1395" y="557">黔西南布依族苗族自治州</text>
<text x="1840" y="539">桂林</text>
<text x="1773" y="577">柳州</text>
<text x="1591" y="605">河池</text>
<text x="1912" y="632">贺</text>
<text x="1515" y="697">百色</text>
<text x="1739" y="699">来宾</text>
<text x="1792" y="730">贵港</text>
<text x="1885" y="740">梧州</text>
<text x="1621" y="753">南宁</text>
<text x="1539" y="805">崇左</text>
<text x="1810" y="811">玉林</text>
<text x="1703" y="834">钦州</text>
<text x="1605" y="863">防城港</text>
<text x="1881" y="851">茂名</text>
<text x="1731" y="882">北海</text>
</g>
<g fill="#4b8b4f" fill-opacity="0.95">
<circle cx="736" cy="244" r="6.8"/>
<circle cx="791" cy="261" r="6.8"/>
<circle cx="809.5" cy="255" r="6.8"/>
<circle cx="732.5" cy="282.5" r="6.8"/>
<circle cx="704.5" cy="294" r="6.8"/>
<circle cx="825" cy="295" r="6.8"/>
<circle cx="830" cy="297.5" r="6.8"/>
<circle cx="837.5" cy="302.5" r="6.8"/>
<circle cx="846" cy="304" r="6.8"/>
<circle cx="851" cy="302.5" r="6.8"/>
<circle cx="839.5" cy="325.5" r="6.8"/>
<circle cx="869.5" cy="360" r="6.8"/>
<circle cx="829.5" cy="375" r="6.8"/>
<circle cx="855.5" cy="391" r="6.8"/>
<circle cx="879" cy="376" r="6.8"/>
<circle cx="884" cy="375" r="6.8"/>
<circle cx="877.5" cy="380" r="6.8"/>
<circle cx="871" cy="389" r="6.8"/>
<circle cx="877.5" cy="395" r="6.8"/>
<circle cx="885" cy="392.5" r="6.8"/>
<circle cx="884" cy="400" r="6.8"/>
<circle cx="929" cy="310" r="6.8"/>
<circle cx="812" cy="400.5" r="6.8"/>
<circle cx="820" cy="422" r="6.8"/>
<circle cx="849" cy="421" r="6.8"/>
<circle cx="844" cy="435" r="6.8"/>
<circle cx="876" cy="414" r="6.8"/>
<circle cx="875" cy="421" r="6.8"/>
<circle cx="876" cy="429" r="6.8"/>
<circle cx="755.5" cy="432" r="6.8"/>
<circle cx="1244" cy="281" r="6.8"/>
<circle cx="1258" cy="302.5" r="6.8"/>
<circle cx="1261" cy="309" r="6.8"/>
<circle cx="1237" cy="320" r="6.8"/>
<circle cx="1225" cy="310" r="6.8"/>
<circle cx="1331" cy="299" r="6.8"/>
<circle cx="1170" cy="340" r="6.8"/>
<circle cx="1201" cy="342.5" r="6.8"/>
<circle cx="1201" cy="352.5" r="6.8"/>
<circle cx="730" cy="470" r="6.8"/>
<circle cx="744.5" cy="479" r="6.8"/>
<circle cx="792" cy="484" r="6.8"/>
<circle cx="800" cy="479.5" r="6.8"/>
<circle cx="854" cy="455" r="6.8"/>
<circle cx="855" cy="460" r="6.8"/>
<circle cx="864" cy="470" r="6.8"/>
<circle cx="867" cy="479" r="6.8"/>
<circle cx="877.5" cy="480.5" r="6.8"/>
<circle cx="896" cy="475.5" r="6.8"/>
<circle cx="851" cy="491" r="6.8"/>
<circle cx="875" cy="499" r="6.8"/>
<circle cx="882.5" cy="507.5" r="6.8"/>
<circle cx="880" cy="502.5" r="6.8"/>
<circle cx="805" cy="530.5" r="6.8"/>
<circle cx="814.5" cy="547" r="6.8"/>
<circle cx="907.5" cy="526" r="6.8"/>
<circle cx="924" cy="525" r="6.8"/>
<circle cx="916" cy="531" r="6.8"/>
<circle cx="907.5" cy="532.5" r="6.8"/>
<circle cx="890.5" cy="549" r="6.8"/>
<circle cx="962" cy="485" r="6.8"/>
<circle cx="1023" cy="485" r="6.8"/>
<circle cx="1032.5" cy="498" r="6.8"/>
<circle cx="971" cy="510" r="6.8"/>
<circle cx="977.5" cy="537.5" r="6.8"/>
<circle cx="1022.5" cy="530" r="6.8"/>
<circle cx="990" cy="564" r="6.8"/>
<circle cx="1002.5" cy="562.5" r="6.8"/>
<circle cx="1052.5" cy="567.5" r="6.8"/>
<circle cx="1077.5" cy="515" r="6.8"/>
<circle cx="1072.5" cy="572.5" r="6.8"/>
<circle cx="1059.5" cy="595.5" r="6.8"/>
<circle cx="718" cy="545" r="6.8"/>
<circle cx="785" cy="550" r="6.8"/>
<circle cx="780" cy="554" r="6.8"/>
<circle cx="784" cy="545" r="6.8"/>
<circle cx="796" cy="569" r="6.8"/>
<circle cx="766" cy="589" r="6.8"/>
<circle cx="809.5" cy="589" r="6.8"/>
<circle cx="831" cy="593" r="6.8"/>
<circle cx="851" cy="573" r="6.8"/>
<circle cx="859" cy="580" r="6.8"/>
<circle cx="907" cy="586" r="6.8"/>
<circle cx="902.5" cy="602.5" r="6.8"/>
<circle cx="850" cy="602.5" r="6.8"/>
<circle cx="862.5" cy="612.5" r="6.8"/>
<circle cx="783" cy="612" r="6.8"/>
<circle cx="866" cy="631" r="6.8"/>
<circle cx="936" cy="616" r="6.8"/>
<circle cx="666" cy="592.5" r="6.8"/>
<circle cx="636" cy="597.5" r="6.8"/>
<circle cx="642.5" cy="604" r="6.8"/>
<circle cx="657.5" cy="632.5" r="6.8"/>
<circle cx="652.5" cy="630" r="6.8"/>
<circle cx="654" cy="642.5" r="6.8"/>
<circle cx="725" cy="617.5" r="6.8"/>
<circle cx="722.5" cy="637.5" r="6.8"/>
<circle cx="729" cy="636" r="6.8"/>
<circle cx="736" cy="603" r="6.8"/>
<circle cx="671" cy="647.5" r="6.8"/>
<circle cx="660" cy="657.5" r="6.8"/>
<circle cx="700" cy="582.5" r="6.8"/>
<circle cx="675" cy="540" r="6.8"/>
<circle cx="635" cy="617.5" r="6.8"/>
<circle cx="792" cy="670" r="6.8"/>
<circle cx="814.5" cy="664" r="6.8"/>
<circle cx="866" cy="670" r="6.8"/>
<circle cx="875" cy="667.5" r="6.8"/>
<circle cx="779.5" cy="695.5" r="6.8"/>
<circle cx="923" cy="697.5" r="6.8"/>
<circle cx="1004" cy="657.5" r="6.8"/>
<circle cx="1007.5" cy="654" r="6.8"/>
<circle cx="1033" cy="647.5" r="6.8"/>
<circle cx="1021" cy="671" r="6.8"/>
<circle cx="1042.5" cy="692.5" r="6.8"/>
<circle cx="1076" cy="642.5" r="6.8"/>
<circle cx="1125" cy="464" r="6.8"/>
<circle cx="1145.5" cy="479.5" r="6.8"/>
<circle cx="1226" cy="482" r="6.8"/>
<circle cx="1126" cy="512.5" r="6.8"/>
<circle cx="1162.5" cy="524.5" r="6.8"/>
<circle cx="1149" cy="540" r="6.8"/>
<circle cx="1084" cy="515" r="6.8"/>
<circle cx="1175" cy="558" r="6.8"/>
<circle cx="1095" cy="559" r="6.8"/>
<circle cx="1105" cy="567.5" r="6.8"/>
<circle cx="1115" cy="560" r="6.8"/>
<circle cx="1120" cy="570" r="6.8"/>
<circle cx="1117.5" cy="580" r="6.8"/>
<circle cx="1125" cy="560" r="6.8"/>
<circle cx="1206" cy="574.5" r="6.8"/>
<circle cx="1270.5" cy="564" r="6.8"/>
<circle cx="1288" cy="575" r="6.8"/>
<circle cx="1279" cy="586" r="6.8"/>
<circle cx="1247" cy="599.5" r="6.8"/>
<circle cx="1256" cy="599.5" r="6.8"/>
<circle cx="1210" cy="607" r="6.8"/>
<circle cx="1174" cy="610" r="6.8"/>
<circle cx="1180" cy="620" r="6.8"/>
<circle cx="1124" cy="619" r="6.8"/>
<circle cx="1131" cy="610" r="6.8"/>
<circle cx="1092" cy="627" r="6.8"/>
<circle cx="1203" cy="625" r="6.8"/>
<circle cx="1117" cy="647.5" r="6.8"/>
<circle cx="1135" cy="646" r="6.8"/>
<circle cx="1172" cy="639.5" r="6.8"/>
<circle cx="1245" cy="647.5" r="6.8"/>
<circle cx="1329" cy="627.5" r="6.8"/>
<circle cx="1373" cy="681" r="6.8"/>
<circle cx="1085" cy="681" r="6.8"/>
<circle cx="1092" cy="686" r="6.8"/>
<circle cx="1115" cy="691" r="6.8"/>
<circle cx="1122.5" cy="694" r="6.8"/>
<circle cx="1115" cy="699" r="6.8"/>
<circle cx="1144" cy="691" r="6.8"/>
<circle cx="1166" cy="691" r="6.8"/>
<circle cx="1172.5" cy="715" r="6.8"/>
<circle cx="1247.5" cy="715" r="6.8"/>
<circle cx="1255" cy="717.5" r="6.8"/>
<circle cx="790" cy="737.5" r="6.8"/>
<circle cx="821" cy="785.5" r="6.8"/>
<circle cx="853" cy="792.5" r="6.8"/>
<circle cx="945.5" cy="732.5" r="6.8"/>
<circle cx="956" cy="760" r="6.8"/>
<circle cx="950" cy="772.5" r="6.8"/>
<circle cx="947.5" cy="767.5" r="6.8"/>
<circle cx="960" cy="785" r="6.8"/>
<circle cx="952.5" cy="787.5" r="6.8"/>
<circle cx="1032" cy="790" r="6.8"/>
<circle cx="942" cy="821" r="6.8"/>
<circle cx="887.5" cy="849" r="6.8"/>
<circle cx="899.5" cy="846" r="6.8"/>
<circle cx="935" cy="849" r="6.8"/>
<circle cx="955" cy="854" r="6.8"/>
<circle cx="971" cy="852.5" r="6.8"/>
<circle cx="867" cy="872.5" r="6.8"/>
<circle cx="1076" cy="755" r="6.8"/>
<circle cx="1084" cy="722.5" r="6.8"/>
<circle cx="1115" cy="741" r="6.8"/>
<circle cx="1085.5" cy="752.5" r="6.8"/>
<circle cx="1175" cy="720" r="6.8"/>
<circle cx="1255" cy="721" r="6.8"/>
</g>
<g fill="#7d8a80">
<circle cx="734" cy="308" r="2.6"/>
<circle cx="792" cy="363" r="2.6"/>
<circle cx="752.5" cy="388" r="2.6"/>
<circle cx="938" cy="355" r="2.6"/>
<circle cx="929" cy="408" r="2.6"/>
<circle cx="977" cy="413" r="2.6"/>
<circle cx="804.5" cy="433" r="2.6"/>
<circle cx="1313" cy="339.5" r="2.6"/>
<circle cx="1205" cy="345" r="2.6"/>
<circle cx="1132" cy="386" r="2.6"/>
<circle cx="1162" cy="434.5" r="2.6"/>
<circle cx="751" cy="484.5" r="2.6"/>
<circle cx="813" cy="521" r="2.6"/>
<circle cx="911" cy="487.5" r="2.6"/>
<circle cx="981.5" cy="498" r="2.6"/>
<circle cx="1014.5" cy="467" r="2.6"/>
<circle cx="1055" cy="554.5" r="2.6"/>
<circle cx="1008" cy="595" r="2.6"/>
<circle cx="906.7" cy="562.5" r="2.6"/>
<circle cx="822.5" cy="580.5" r="2.6"/>
<circle cx="782.5" cy="590.5" r="2.6"/>
<circle cx="719" cy="567" r="2.6"/>
<circle cx="871" cy="616" r="2.6"/>
<circle cx="787" cy="655.5" r="2.6"/>
<circle cx="802.5" cy="700" r="2.6"/>
<circle cx="840" cy="708" r="2.6"/>
<circle cx="963" cy="660" r="2.6"/>
<circle cx="1042.5" cy="652" r="2.6"/>
<circle cx="1154.5" cy="462" r="2.6"/>
<circle cx="1255.5" cy="501" r="2.6"/>
<circle cx="1216" cy="510.5" r="2.6"/>
<circle cx="1214" cy="518" r="2.6"/>
<circle cx="1164" cy="514" r="2.6"/>
<circle cx="1190" cy="526" r="2.6"/>
<circle cx="1196" cy="567" r="2.6"/>
<circle cx="1092" cy="544" r="2.6"/>
<circle cx="1092" cy="572.5" r="2.6"/>
<circle cx="1230" cy="582.5" r="2.6"/>
<circle cx="1261" cy="567" r="2.6"/>
<circle cx="1164" cy="589" r="2.6"/>
<circle cx="1117" cy="632" r="2.6"/>
<circle cx="1131" cy="642.5" r="2.6"/>
<circle cx="1247" cy="654" r="2.6"/>
<circle cx="1263" cy="694.5" r="2.6"/>
<circle cx="1297.5" cy="710" r="2.6"/>
<circle cx="956" cy="749.5" r="2.6"/>
<circle cx="1005" cy="895" r="2.6"/>
<circle cx="1297.5" cy="739.5" r="2.6"/>
<circle cx="1160" cy="772.5" r="2.6"/>
<circle cx="1227.5" cy="799.5" r="2.6"/>
</g>
<g fill="#e60f1c">
<circle cx="1267" cy="225" r="6.8"/>
<circle cx="734.5" cy="596" r="6.8"/>
<circle cx="1104" cy="480" r="6.8"/>
<circle cx="1116" cy="550" r="6.8"/>
<circle cx="1121" cy="572.5" r="6.8"/>
<circle cx="1151" cy="572.5" r="6.8"/>
<circle cx="781" cy="726" r="6.8"/>
<circle cx="959" cy="729" r="6.8"/>
<circle cx="967.5" cy="737" r="6.8"/>
<circle cx="974" cy="769" r="6.8"/>
<circle cx="820" cy="814" r="6.8"/>
<circle cx="782.5" cy="829" r="6.8"/>
<circle cx="800" cy="835" r="6.8"/>
<circle cx="939.5" cy="829" r="6.8"/>
<circle cx="979" cy="852.5" r="6.8"/>
<circle cx="947" cy="859" r="6.8"/>
<circle cx="1007.5" cy="882.5" r="6.8"/>
<circle cx="1136" cy="725.5" r="6.8"/>
<circle cx="1199.5" cy="750.5" r="6.8"/>
<circle cx="1204" cy="757.5" r="6.8"/>
<circle cx="1182.5" cy="769.5" r="6.8"/>
<circle cx="1208" cy="772.5" r="6.8"/>
<circle cx="652" cy="667" r="6.8"/>
<circle cx="678" cy="650" r="6.8"/>
<circle cx="660" cy="655" r="6.8"/>
<circle cx="1013" cy="712" r="6.8"/>
<circle cx="1020" cy="707" r="6.8"/>
<circle cx="1034" cy="705" r="6.8"/>
<circle cx="1078" cy="718" r="6.8"/>
<circle cx="1016" cy="703" r="6.8"/>
</g>
<use href="#house" x="1285" y="225"/>
<use href="#house" x="891" y="505"/>
<use href="#house" x="1134" y="552.5"/>
<use href="#house" x="799" y="727.5"/>
<use href="#house" x="976" y="730"/>
<use href="#house" x="986" y="738"/>
<use href="#house" x="992" y="769.5"/>
<use href="#house" x="967.5" y="774"/>
<use href="#house" x="979.5" y="785"/>
<use href="#house" x="871" y="794"/>
<use href="#house" x="837.5" y="816"/>
<use href="#house" x="817.5" y="825"/>
<use href="#house" x="817.5" y="837.5"/>
<use href="#house" x="957" y="830"/>
<use href="#house" x="994.5" y="854"/>
<use href="#house" x="965.5" y="860"/>
<use href="#house" x="1026" y="884"/>
<use href="#house" x="1134" y="742.5"/>
<use href="#house" x="1154.5" y="726"/>
<use href="#house" x="1221" y="757"/>
<use href="#house" x="1236" y="751"/>
<use href="#house" x="1201" y="770"/>
<use href="#house" x="1242.5" y="774"/>
<use href="#house" x="672" y="662"/>
<use href="#house" x="682" y="657"/>
<use href="#house" x="692" y="654"/>
<use href="#house" x="1030" y="712"/>
<use href="#house" x="1046" y="707"/>
<use href="#house" x="1084" y="720"/>
<use href="#house" x="1102" y="719"/>
<use href="#cloud" x="752.5" y="597.5"/>
<use href="#cloud" x="745.75" y="618"/>
<use href="#cloud" x="1121" y="479"/>
<use href="#cloud" x="1141" y="566"/>
<use href="#cloud" x="1217" y="749"/>
<use href="#cloud" x="1226" y="771"/>
<path d="M1134,563 v14 M1134,564 h7 M1134,568 h6 M1134,572 h4" stroke="#e0121f" stroke-width="1.8" fill="none"/>
<path d="M1152,559 v14 M1152,560 h7 M1152,564 h6 M1152,568 h4" stroke="#e0121f" stroke-width="1.8" fill="none"/>
<path d="M1166.4,562 v14 M1166.4,563 h7 M1166.4,567 h6 M1166.4,571 h4" stroke="#e0121f" stroke-width="1.8" fill="none"/>
<g stroke="#e01b2a" stroke-width="2.2">
<path d="M661.5,501h12M667.5,495v12"/>
<path d="M658,506h12M664,500v12"/>
<path d="M688,499h12M694,493v12"/>
<path d="M505,638h12M511,632v12"/>
<path d="M461,678h12M467,672v12"/>
<path d="M491,678h12M497,672v12"/>
<path d="M431,697h12M437,691v12"/>
<path d="M591,841h12M597,835v12"/>
<path d="M1158,739.5h12M1164,733.5v12"/>
<path d="M1270,820h12M1276,814v12"/>
<path d="M1268,831h12M1274,825v12"/>
<path d="M1291,828h12M1297,822v12"/>
<path d="M1278,837h12M1284,831v12"/>
</g>
<g stroke="#1a2ad0" stroke-width="2.6">
<path d="M684,536h12"/>
<path d="M674,561h12"/>
<path d="M1288,522.5h12"/>
<path d="M1180,690h12"/>
<path d="M1184,706h12"/>
<path d="M735,842.5h12"/>
<path d="M770,866h12"/>
<path d="M858,925h12"/>
<path d="M835,944.5h12"/>
<path d="M840,952.5h12"/>
<path d="M840,956h12"/>
<path d="M853,964h12"/>
<path d="M846.5,966h12"/>
<path d="M845,969h12"/>
<path d="M836.5,972.5h12"/>
<path d="M863,971h12"/>
<path d="M843,976h12"/>
<path d="M858,987.5h12"/>
<path d="M1254,733h12"/>
<path d="M1256,745h12"/>
<path d="M1260,756h12"/>
<path d="M1264,765h12"/>
<path d="M1268,779h12"/>
<path d="M1270,796h12"/>
<path d="M1276.5,812.5h12"/>
<path d="M1279,819h12"/>
<path d="M1421,783h12"/>
<path d="M1398,817h12"/>
<path d="M1467,818h12"/>
<path d="M1482,800h12"/>
<path d="M1517,849h12"/>
<path d="M1237,855h12"/>
<path d="M1289.5,857h12"/>
<path d="M1296.5,866h12"/>
<path d="M1298,869h12"/>
<path d="M1303,877h12"/>
<path d="M869,1012h12"/>
</g>
<g font-size="13.5" fill="#5f44c9" text-anchor="middle">
<text x="714" y="329">97</text>
<text x="815" y="321">75</text>
<text x="771" y="383">81</text>
<text x="732.5" y="407.5">92</text>
<text x="917.5" y="375">67</text>
<text x="859" y="412.5">84</text>
<text x="909" y="427.5">62</text>
<text x="957" y="432.5">69</text>
<text x="831" y="441">58</text>
<text x="856" y="439">72</text>
<text x="784" y="451">84</text>
<text x="1202" y="329.5">57</text>
<text x="1217" y="340">72</text>
<text x="1185" y="365.5">62</text>
<text x="1169.5" y="380">71</text>
<text x="1292.5" y="360">82</text>
<text x="1111" y="407">73</text>
<text x="1141" y="452.5">67</text>
<text x="731" y="505">88</text>
<text x="779.5" y="503">76</text>
<text x="835" y="483">82</text>
<text x="834" y="522">75</text>
<text x="855" y="520.5">83</text>
<text x="891" y="508">59</text>
<text x="793" y="541">84</text>
<text x="893" y="540">65</text>
<text x="876" y="550">59</text>
<text x="865" y="561">70</text>
<text x="887" y="583">69</text>
<text x="802.5" y="601">95</text>
<text x="832.5" y="625">82</text>
<text x="851" y="637">74</text>
<text x="919.5" y="635">66</text>
<text x="943" y="681">89</text>
<text x="767" y="676">83</text>
<text x="846" y="690">80</text>
<text x="728" y="701">84</text>
<text x="782" y="720">86</text>
<text x="994.5" y="487.5">63</text>
<text x="1012.5" y="517">64</text>
<text x="962" y="519">71</text>
<text x="954" y="536">75</text>
<text x="980" y="557.5">90</text>
<text x="959" y="569">94</text>
<text x="983" y="583">65</text>
<text x="1034.5" y="575">83</text>
<text x="987.5" y="615">69</text>
<text x="1042.5" y="618">86</text>
<text x="1022" y="672.5">73</text>
<text x="1062.5" y="662">77</text>
<text x="1070" y="706">85</text>
<text x="1064" y="535">79</text>
<text x="1070" y="564">83</text>
<text x="1070" y="592">79</text>
<text x="680" y="602.5">89</text>
<text x="647.5" y="614">94</text>
<text x="715" y="622.5">94</text>
<text x="706" y="639.5">80</text>
<text x="634" y="662.5">93</text>
<text x="637.5" y="679">85</text>
<text x="699" y="586">95</text>
<text x="762" y="610.5">89</text>
<text x="1220" y="472">78</text>
<text x="1134" y="483">83</text>
<text x="1235" y="522">93</text>
<text x="1197.5" y="530">74</text>
<text x="1194" y="539.5">83</text>
<text x="1170" y="547">80</text>
<text x="1144" y="534.5">84</text>
<text x="1126" y="552.5">93</text>
<text x="1176" y="586">84</text>
<text x="1135" y="592.5">76</text>
<text x="1102.5" y="595">75</text>
<text x="1084" y="590">97</text>
<text x="1086" y="585">81</text>
<text x="1144" y="609">79</text>
<text x="1112.5" y="615">79</text>
<text x="1084" y="617.5">88</text>
<text x="1210" y="602.5">99</text>
<text x="1190" y="629">90</text>
<text x="1160" y="642">99</text>
<text x="1097" y="652.5">78</text>
<text x="1095" y="666">79</text>
<text x="1111" y="662">78</text>
<text x="1241" y="587">97</text>
<text x="1227.5" y="674">97</text>
<text x="1242.5" y="715">97</text>
<text x="1104" y="715">83</text>
<text x="770" y="758">90</text>
<text x="936" y="769">84</text>
<text x="929" y="792.5">81</text>
<text x="1011" y="811">90</text>
<text x="801" y="807">91</text>
<text x="832.5" y="812.5">80</text>
<text x="801" y="836">80</text>
<text x="882" y="869">86</text>
<text x="911" y="866">87</text>
<text x="984.5" y="916">98</text>
<text x="1065.5" y="738">88</text>
<text x="1064" y="772">91</text>
<text x="904" y="727.5">75</text>
<text x="994" y="732.5">90</text>
<text x="819.5" y="729.5">82</text>
<text x="1277.5" y="730">94</text>
<text x="1239" y="740.5">94</text>
<text x="1277.5" y="760">93</text>
<text x="1251" y="769">91</text>
<text x="1140" y="792.5">95</text>
<text x="1207.5" y="819">98</text>
<text x="1104" y="752">97</text>
<text x="1132.5" y="737.5">67</text>
<text x="1149" y="730">94</text>
</g>
<g font-size="13.5" fill="#e8412c" text-anchor="middle">
<text x="699" y="571">0.1</text>
<text x="679.5" y="588">0.3</text>
<text x="715" y="607.5">0.3</text>
<text x="1241" y="572">0.1</text>
<text x="1227.5" y="659">0.5</text>
<text x="1277.5" y="715">0.1</text>
<text x="800" y="821">0.1</text>
<text x="1104.5" y="736">0.3</text>
<text x="1182" y="759">0.1</text>
<text x="1207.5" y="804.5">1.5</text>
</g>
<g font-size="15" fill="#172314" text-anchor="middle">
<text x="816" y="308.5">迪庆</text>
<text x="910" y="400">丽江</text>
<text x="777" y="423">怒江</text>
<text x="1224.5" y="318">昭通</text>
<text x="855" y="505">大理</text>
<text x="762" y="575.5">保山</text>
<text x="677.5" y="616">德宏</text>
<text x="1005" y="539">楚雄</text>
<text x="822" y="684">临沧</text>
<text x="1061" y="648.5">玉溪</text>
<text x="1226" y="507">曲靖</text>
<text x="1127.5" y="537">昆明</text>
<text x="1286" y="689">文山</text>
<text x="1134" y="713.5">红河</text>
<text x="925" y="742">普洱</text>
<text x="941" y="847">西双版纳</text>
</g>
</svg>
<div id="hdr"><div class="title">云南气象服务业务平台</div>
<div class="nav on" style="left:711px">旅游天气</div>
<div class="nav" style="left:815px">示范景区</div>
<div class="nav" style="left:919px">服务制作</div>
<div class="nav" style="left:1023px">产品展示</div>
<div class="nav" style="left:1127px">用户管理</div>
<div class="a" style="left:1824px;top:17px;font-size:14px;color:#e6eef7;line-height:16px">毛兆宝</div>
<svg class="i" style="left:1884px;top:14px" width="22" height="22" viewBox="0 0 22 22"><path d="M2,2 L12,2 L12,7 M12,15 L12,20 L2,20 Z" fill="none" stroke="#dbe7f3" stroke-width="2"/><path d="M2,2 L9,5 L9,21 L2,20 Z" fill="#dbe7f3"/><path d="M11,11 L19,11 M16,7 L20,11 L16,15" fill="none" stroke="#dbe7f3" stroke-width="2.4"/></svg>
</div>
<div id="tb">
<div class="a" style="left:40px;top:0;width:81px;height:37px;background:#e8ecf1"></div>
<div class="a" style="left:40px;top:33px;width:81px;height:4px;background:#5b9bd8"></div>
<div class="it" style="left:79px">景区</div>
<div class="it" style="left:171px">特色小镇</div>
<div class="it" style="left:291px">口岸</div>
<div class="it" style="left:382px">花卉</div>
<div class="it" style="left:475px">徒步路线</div>
<div class="it" style="left:595px">骑行路线</div>
<div class="it" style="left:715px">露营点</div>
<div class="it" style="left:820px">温泉</div>
<div class="it" style="left:913px">摄影点</div>
<svg class="i" style="left:51px;top:8px" width="22" height="20" viewBox="0 0 22 20"><path d="M10.5,0 L11.5,0 L11.5,3 L14,5 L8,5 L10.5,3 Z M6,6 L16,6 L19,9 L3,9 Z M5,10 L17,10 L17,13 L5,13 Z M2,13.5 L20,13.5 L21,16 L1,16 Z M0,17 L22,17 L22,19 L0,19 Z" fill="#3d4858"/><g fill="#e9edf2"><rect x="7" y="10.5" width="1.2" height="2.5"/><rect x="10.4" y="10.5" width="1.2" height="2.5"/><rect x="13.8" y="10.5" width="1.2" height="2.5"/></g></svg>
<svg class="i" style="left:144px;top:7px" width="20" height="22" viewBox="0 0 20 22"><path d="M0,4 Q3,5 5,3 L15,3 Q17,5 20,4 L18,8 L2,8 Z M9,0 L11,0 L11,3 L9,3 Z" fill="#3d4858"/><path d="M3,9 L17,9 L17,21 L3,21 Z" fill="#3d4858"/><rect x="7" y="14" width="2" height="2" fill="#fff"/><rect x="11" y="14" width="2" height="2" fill="#fff"/></svg>
<svg class="i" style="left:263px;top:6px" width="22" height="24" viewBox="0 0 22 24"><path d="M10,1 L12,1 L12,5 L16,7 L16,11 L20,13 L17,18 L5,18 L2,13 L6,11 L6,7 L10,5 Z" fill="#3d4858"/><path d="M1,20 Q4,18 7,20 T13,20 T21,20" stroke="#3d4858" stroke-width="1.6" fill="none"/><path d="M1,23 Q4,21 7,23 T13,23 T21,23" stroke="#3d4858" stroke-width="1.2" fill="none"/></svg>
<svg class="i" style="left:357px;top:7px" width="18" height="22" viewBox="0 0 18 22"><g fill="#3d4858"><circle cx="9" cy="3.5" r="3.2"/><circle cx="13.5" cy="7" r="3.2"/><circle cx="12" cy="12" r="3.2"/><circle cx="6" cy="12" r="3.2"/><circle cx="4.5" cy="7" r="3.2"/><circle cx="9" cy="8" r="4"/></g><circle cx="9" cy="8" r="2.4" fill="#fff"/><path d="M8.2,14 L9.8,14 L9.8,21 L8.2,21 Z M1,17 Q6,15 9,20 Q12,15 17,17 Q13,20 9,21 Q5,20 1,17 Z" fill="#3d4858"/></svg>
<svg class="i" style="left:450px;top:7px" width="18" height="22" viewBox="0 0 18 22"><circle cx="7" cy="3" r="2.5" fill="#3d4858"/><path d="M5,6 L9,6 L11,11 L14,12 L13,14 L9,12 L8,15 L11,21 L9,21 L6,16 L4,21 L2,21 L5,13 L4,9 L1,11 L1,9 Z" fill="#3d4858"/><path d="M16,4 L16,21" stroke="#3d4858" stroke-width="1.5"/></svg>
<svg class="i" style="left:567px;top:7px" width="22" height="22" viewBox="0 0 22 22"><circle cx="13" cy="3" r="2.5" fill="#3d4858"/><path d="M9,6 L14,8 L16,11 L13,11 L11,9 L9,13 L12,15 L11,19 L9,15 L6,13 Z" fill="#3d4858"/><circle cx="5" cy="16" r="4.2" fill="none" stroke="#3d4858" stroke-width="2"/><circle cx="17" cy="16" r="4.2" fill="none" stroke="#3d4858" stroke-width="2"/></svg>
<svg class="i" style="left:686px;top:9px" width="23" height="18" viewBox="0 0 23 18"><path d="M1,17 L5,5 Q11,-2 17,4 L22,17 Z" fill="#3d4858"/><path d="M9,17 L11,6 L14,17 Z" fill="#fff"/><path d="M5,5 L9,17" stroke="#fff" stroke-width="1"/></svg>
<svg class="i" style="left:794px;top:6px" width="20" height="22" viewBox="0 0 20 22"><path d="M5,2 Q3,5 5,7 Q7,9 5,12 M10,1 Q8,4 10,6 Q12,9 10,12 M15,2 Q13,5 15,7 Q17,9 15,12" stroke="#3d4858" stroke-width="1.6" fill="none"/><path d="M2,13 Q1,20 10,20 Q19,20 18,13" stroke="#3d4858" stroke-width="2.2" fill="none"/><path d="M4,14 Q10,17 16,14" stroke="#3d4858" stroke-width="1.4" fill="none"/></svg>
<svg class="i" style="left:885px;top:8px" width="21" height="19" viewBox="0 0 21 19"><path d="M1,5 L5,5 L7,2 L14,2 L16,5 L20,5 L20,18 L1,18 Z" fill="#3d4858"/><circle cx="10.5" cy="11" r="4" fill="#fff"/><circle cx="10.5" cy="11" r="2.4" fill="#3d4858"/><rect x="2" y="1" width="3" height="2" fill="#3d4858"/></svg>
<div class="a" style="left:1390px;top:6px;width:189px;height:24px;border-radius:12px;background:#dfe3e8"></div>
<div class="a" style="left:1409px;top:10px;font-size:13px;color:#6b737c;line-height:15px">景区搜索</div>
<svg class="i" style="left:1551px;top:8px" width="20" height="20" viewBox="0 0 20 20"><circle cx="8" cy="8" r="6.3" fill="none" stroke="#475261" stroke-width="2.2"/><path d="M12.5,12.5 L17,17" stroke="#475261" stroke-width="2.6"/></svg>
<svg class="i" style="left:1635px;top:8px" width="19" height="20" viewBox="0 0 19 20"><path d="M9,1 A8,8 0 1 0 9,18 Q11,18 11,16 Q10,13 13,13 L16,13 Q18,13 18,10 A9,9 0 0 0 9,1 Z" fill="none" stroke="#3b4554" stroke-width="2"/><circle cx="5" cy="9" r="1.5" fill="#3b4554"/><circle cx="7" cy="5" r="1.5" fill="#3b4554"/><circle cx="11" cy="4.5" r="1.5" fill="#3b4554"/><path d="M10,16 L18,5" stroke="#3b4554" stroke-width="2.6"/></svg>
<div class="it" style="left:1660px">绘制</div>
<svg class="i" style="left:1730px;top:9px" width="18" height="18" viewBox="0 0 18 18"><rect x="0" y="0" width="7" height="7" fill="#3b4554"/><rect x="0" y="9" width="7" height="7" fill="#3b4554"/><rect x="9" y="9" width="7" height="7" fill="#3b4554"/><path d="M12.5,0 L16,3.5 L12.5,7 L9,3.5 Z" fill="none" stroke="#3b4554" stroke-width="1.4"/></svg>
<div class="it" style="left:1757px">产品</div>
<svg class="i" style="left:1794px;top:15px" width="10" height="7" viewBox="0 0 10 7"><path d="M1,1 L5,5 L9,1" fill="none" stroke="#3b4554" stroke-width="1.5"/></svg>
<svg class="i" style="left:1837px;top:8px" width="18" height="19" viewBox="0 0 18 19"><path d="M2,17 L13,5 M4,2 L16,15" stroke="#2f3946" stroke-width="2.6"/><path d="M11,2 Q15,0 17,3 L15,5 L15,7 L13,7 Z" fill="#2f3946"/><path d="M1,1 L5,1 L6,5 L3,6 Z" fill="#2f3946"/></svg>
<div class="it" style="left:1864px">工具</div>
<svg class="i" style="left:1901px;top:15px" width="10" height="7" viewBox="0 0 10 7"><path d="M1,1 L5,5 L9,1" fill="none" stroke="#3b4554" stroke-width="1.5"/></svg>
</div>
<div id="lp"><div id="lph"></div>
<div class="a" style="left:0;top:50px;width:400px;height:5px;background:#2a3541"></div>
<div class="a" style="left:45px;top:7px;font-size:14px;color:#fff;line-height:15px;font-weight:bold">周三</div>
<div class="a" style="left:27px;top:29px;font-size:14px;color:#fff;line-height:15px;-webkit-text-stroke:0.35px #fff">2017/7/12</div>
<div class="a" style="left:120px;top:13px;font-size:21px;color:#fff;line-height:23px;font-family:'Liberation Serif',serif;-webkit-text-stroke:0.5px #fff">00:00</div>
<div class="a" style="left:200px;top:15px;width:29px;height:20px;border-radius:3px;background:#4279b8"></div>
<div class="a" style="left:240px;top:15px;width:29px;height:20px;border-radius:3px;background:#4279b8"></div>
<svg class="i" style="left:210px;top:20px" width="10" height="11" viewBox="0 0 10 11"><path d="M7,1 L2.5,5.5 L7,10" fill="none" stroke="#e6f1fc" stroke-width="1.6"/></svg>
<svg class="i" style="left:250px;top:20px" width="10" height="11" viewBox="0 0 10 11"><path d="M3,1 L7.5,5.5 L3,10" fill="none" stroke="#e6f1fc" stroke-width="1.6"/></svg>
<svg class="i" style="left:295px;top:15px" width="18" height="18" viewBox="0 0 18 18"><circle cx="8" cy="8" r="6.5" fill="none" stroke="#dcefff" stroke-width="2.2"/><path d="M12.5,12.5 L16.5,16.5" stroke="#dcefff" stroke-width="2.4"/></svg>
<svg class="i" style="left:331px;top:16px" width="18" height="18" viewBox="0 0 18 18"><path d="M3,8 A6,6 0 0 1 14,6 M15,10 A6,6 0 0 1 4,12" fill="none" stroke="#dcefff" stroke-width="2.2"/><path d="M12,3 L16,7 L12,8 Z M6,15 L2,11 L6,10 Z" fill="#dcefff"/></svg>
<svg class="i" style="left:367px;top:16px" width="16" height="18" viewBox="0 0 16 18"><path d="M1,8 L8,1 L15,8 M1,15 L8,8 L15,15" fill="none" stroke="#dcefff" stroke-width="2"/></svg>
<div class="row" style="top:55px"></div>
<div class="row l" style="top:95px"></div>
<div class="row" style="top:135px"></div>
<div class="row l" style="top:175px"></div>
<div class="row" style="top:215px"></div>
<div class="row l" style="top:255px"></div>
<div class="row" style="top:295px"></div>
<div class="row l" style="top:335px"></div>
<div class="row" style="top:375px;height:4px"></div>
<div class="a" style="left:67px;top:55px;width:3px;height:324px;background:#5d6975"></div>
<div class="tt" style="top:68px">00:00</div>
<div class="td" style="top:56px">12日</div>
<svg class="i" style="left:62px;top:70px" width="12" height="12" viewBox="0 0 12 12"><circle cx="6" cy="6" r="4.6" fill="#5aa0e2" stroke="#fff" stroke-width="2"/></svg>
<svg class="i" style="left:364.5px;top:70.5px" width="13" height="11" viewBox="0 0 13 11"><g fill="#a3abb3"><rect x="0" y="0" width="2" height="1.8"/><rect x="3.5" y="0" width="9.5" height="1.8"/><rect x="0" y="4.5" width="2" height="1.8"/><rect x="3.5" y="4.5" width="9.5" height="1.8"/><rect x="0" y="9" width="2" height="1.8"/><rect x="3.5" y="9" width="9.5" height="1.8"/></g></svg>
<div class="tt" style="top:108px">00:10</div>
<div class="td f" style="top:96px">日</div>
<svg class="i" style="left:62px;top:110px" width="12" height="12" viewBox="0 0 12 12"><circle cx="6" cy="6" r="4.3" fill="#1e2832" stroke="#7c858e" stroke-width="2.2"/></svg>
<svg class="i" style="left:364.5px;top:110.5px" width="13" height="11" viewBox="0 0 13 11"><g fill="#a3abb3"><rect x="0" y="0" width="2" height="1.8"/><rect x="3.5" y="0" width="9.5" height="1.8"/><rect x="0" y="4.5" width="2" height="1.8"/><rect x="3.5" y="4.5" width="9.5" height="1.8"/><rect x="0" y="9" width="2" height="1.8"/><rect x="3.5" y="9" width="9.5" height="1.8"/></g></svg>
<div class="tt" style="top:148px">00:20</div>
<div class="td f" style="top:136px">日</div>
<svg class="i" style="left:62px;top:150px" width="12" height="12" viewBox="0 0 12 12"><circle cx="6" cy="6" r="4.3" fill="#1e2832" stroke="#7c858e" stroke-width="2.2"/></svg>
<svg class="i" style="left:364.5px;top:150.5px" width="13" height="11" viewBox="0 0 13 11"><g fill="#a3abb3"><rect x="0" y="0" width="2" height="1.8"/><rect x="3.5" y="0" width="9.5" height="1.8"/><rect x="0" y="4.5" width="2" height="1.8"/><rect x="3.5" y="4.5" width="9.5" height="1.8"/><rect x="0" y="9" width="2" height="1.8"/><rect x="3.5" y="9" width="9.5" height="1.8"/></g></svg>
<div class="tt" style="top:188px">11:00</div>
<div class="td f" style="top:176px">日</div>
<svg class="i" style="left:62px;top:190px" width="12" height="12" viewBox="0 0 12 12"><circle cx="6" cy="6" r="4.3" fill="#1e2832" stroke="#7c858e" stroke-width="2.2"/></svg>
<svg class="i" style="left:364.5px;top:190.5px" width="13" height="11" viewBox="0 0 13 11"><g fill="#a3abb3"><rect x="0" y="0" width="2" height="1.8"/><rect x="3.5" y="0" width="9.5" height="1.8"/><rect x="0" y="4.5" width="2" height="1.8"/><rect x="3.5" y="4.5" width="9.5" height="1.8"/><rect x="0" y="9" width="2" height="1.8"/><rect x="3.5" y="9" width="9.5" height="1.8"/></g></svg>
<div class="tt" style="top:228px">17:00</div>
<div class="td f" style="top:216px">日</div>
<svg class="i" style="left:62px;top:230px" width="12" height="12" viewBox="0 0 12 12"><circle cx="6" cy="6" r="4.3" fill="#1e2832" stroke="#7c858e" stroke-width="2.2"/></svg>
<svg class="i" style="left:364.5px;top:230.5px" width="13" height="11" viewBox="0 0 13 11"><g fill="#a3abb3"><rect x="0" y="0" width="2" height="1.8"/><rect x="3.5" y="0" width="9.5" height="1.8"/><rect x="0" y="4.5" width="2" height="1.8"/><rect x="3.5" y="4.5" width="9.5" height="1.8"/><rect x="0" y="9" width="2" height="1.8"/><rect x="3.5" y="9" width="9.5" height="1.8"/></g></svg>
<div class="tt" style="top:268px">20:00</div>
<div class="td f" style="top:256px">日</div>
<svg class="i" style="left:62px;top:270px" width="12" height="12" viewBox="0 0 12 12"><circle cx="6" cy="6" r="4.3" fill="#1e2832" stroke="#7c858e" stroke-width="2.2"/></svg>
<svg class="i" style="left:364.5px;top:270.5px" width="13" height="11" viewBox="0 0 13 11"><g fill="#a3abb3"><rect x="0" y="0" width="2" height="1.8"/><rect x="3.5" y="0" width="9.5" height="1.8"/><rect x="0" y="4.5" width="2" height="1.8"/><rect x="3.5" y="4.5" width="9.5" height="1.8"/><rect x="0" y="9" width="2" height="1.8"/><rect x="3.5" y="9" width="9.5" height="1.8"/></g></svg>
<div class="tt" style="top:308px">23:00</div>
<div class="td f" style="top:296px">日</div>
<svg class="i" style="left:62px;top:310px" width="12" height="12" viewBox="0 0 12 12"><circle cx="6" cy="6" r="4.3" fill="#1e2832" stroke="#7c858e" stroke-width="2.2"/></svg>
<svg class="i" style="left:364.5px;top:310.5px" width="13" height="11" viewBox="0 0 13 11"><g fill="#a3abb3"><rect x="0" y="0" width="2" height="1.8"/><rect x="3.5" y="0" width="9.5" height="1.8"/><rect x="0" y="4.5" width="2" height="1.8"/><rect x="3.5" y="4.5" width="9.5" height="1.8"/><rect x="0" y="9" width="2" height="1.8"/><rect x="3.5" y="9" width="9.5" height="1.8"/></g></svg>
<div class="tt" style="top:348px">02:00</div>
<div class="td" style="top:336px">13日</div>
<svg class="i" style="left:62px;top:350px" width="12" height="12" viewBox="0 0 12 12"><circle cx="6" cy="6" r="4.3" fill="#1e2832" stroke="#7c858e" stroke-width="2.2"/></svg>
<svg class="i" style="left:364.5px;top:350.5px" width="13" height="11" viewBox="0 0 13 11"><g fill="#a3abb3"><rect x="0" y="0" width="2" height="1.8"/><rect x="3.5" y="0" width="9.5" height="1.8"/><rect x="0" y="4.5" width="2" height="1.8"/><rect x="3.5" y="4.5" width="9.5" height="1.8"/><rect x="0" y="9" width="2" height="1.8"/><rect x="3.5" y="9" width="9.5" height="1.8"/></g></svg>
<svg class="i" style="left:91px;top:67px" width="18" height="18" viewBox="0 0 18 18"><path d="M1,11 C0,7 3,5 5,6 C6,1 13,1 14,5 C17,5 18,9 17,11 Z" fill="#64a2e2"/><g fill="#64a2e2"><rect x="3" y="13.5" width="2" height="2"/><rect x="7" y="13.5" width="2" height="2"/><rect x="11" y="13.5" width="2" height="2"/><rect x="15" y="13.5" width="2" height="2"/></g></svg><svg class="i" style="left:135px;top:67px" width="12" height="18" viewBox="0 0 12 18"><path d="M3,1 L3,17 M3,2 L10,2 M3,6 L10,6 M3,10 L8,10" stroke="#e0121f" stroke-width="2.2" fill="none"/></svg><svg class="i" style="left:171px;top:67px" width="18" height="18" viewBox="0 0 18 18"><path d="M1,8 L9,1 L17,8 L14,8 L14,16 L4,16 L4,8 Z" fill="#f08448"/><text x="9" y="14" font-size="8" fill="#fff" text-anchor="middle" font-weight="bold">°C</text></svg>
<svg class="i" style="left:91px;top:107px" width="18" height="18" viewBox="0 0 18 18"><path d="M1,11 C0,7 3,5 5,6 C6,1 13,1 14,5 C17,5 18,9 17,11 Z" fill="#8f82e6"/><g fill="#8f82e6"><rect x="3" y="13.5" width="2" height="2"/><rect x="7" y="13.5" width="2" height="2"/><rect x="11" y="13.5" width="2" height="2"/><rect x="15" y="13.5" width="2" height="2"/></g></svg>
<svg class="i" style="left:94px;top:147px" width="12" height="18" viewBox="0 0 12 18"><path d="M3,1 L3,17 M3,2 L10,2 M3,6 L10,6 M3,10 L8,10" stroke="#8a78d8" stroke-width="1.3" fill="none"/></svg>
<svg class="i" style="left:92.5px;top:188.5px" width="15" height="15" viewBox="0 0 15 15"><rect x="0.8" y="0.8" width="13.4" height="13.4" fill="none" stroke="#8a72d6" stroke-width="1.5"/><g fill="#8a72d6"><rect x="3.0" y="3.0" width="1" height="1"/><rect x="3.0" y="4.9" width="1" height="1"/><rect x="3.0" y="6.8" width="1" height="1"/><rect x="3.0" y="8.7" width="1" height="1"/><rect x="3.0" y="10.6" width="1" height="1"/><rect x="4.9" y="3.0" width="1" height="1"/><rect x="4.9" y="4.9" width="1" height="1"/><rect x="4.9" y="6.8" width="1" height="1"/><rect x="4.9" y="8.7" width="1" height="1"/><rect x="4.9" y="10.6" width="1" height="1"/><rect x="6.8" y="3.0" width="1" height="1"/><rect x="6.8" y="4.9" width="1" height="1"/><rect x="6.8" y="6.8" width="1" height="1"/><rect x="6.8" y="8.7" width="1" height="1"/><rect x="6.8" y="10.6" width="1" height="1"/><rect x="8.7" y="3.0" width="1" height="1"/><rect x="8.7" y="4.9" width="1" height="1"/><rect x="8.7" y="6.8" width="1" height="1"/><rect x="8.7" y="8.7" width="1" height="1"/><rect x="8.7" y="10.6" width="1" height="1"/><rect x="10.6" y="3.0" width="1" height="1"/><rect x="10.6" y="4.9" width="1" height="1"/><rect x="10.6" y="6.8" width="1" height="1"/><rect x="10.6" y="8.7" width="1" height="1"/><rect x="10.6" y="10.6" width="1" height="1"/></g></svg><svg class="i" style="left:132.5px;top:188.5px" width="15" height="15" viewBox="0 0 15 15"><rect x="0.8" y="0.8" width="13.4" height="13.4" fill="none" stroke="#66707a" stroke-width="1.5"/><g fill="#66707a"><rect x="3.0" y="3.0" width="1" height="1"/><rect x="3.0" y="4.9" width="1" height="1"/><rect x="3.0" y="6.8" width="1" height="1"/><rect x="3.0" y="8.7" width="1" height="1"/><rect x="3.0" y="10.6" width="1" height="1"/><rect x="4.9" y="3.0" width="1" height="1"/><rect x="4.9" y="4.9" width="1" height="1"/><rect x="4.9" y="6.8" width="1" height="1"/><rect x="4.9" y="8.7" width="1" height="1"/><rect x="4.9" y="10.6" width="1" height="1"/><rect x="6.8" y="3.0" width="1" height="1"/><rect x="6.8" y="4.9" width="1" height="1"/><rect x="6.8" y="6.8" width="1" height="1"/><rect x="6.8" y="8.7" width="1" height="1"/><rect x="6.8" y="10.6" width="1" height="1"/><rect x="8.7" y="3.0" width="1" height="1"/><rect x="8.7" y="4.9" width="1" height="1"/><rect x="8.7" y="6.8" width="1" height="1"/><rect x="8.7" y="8.7" width="1" height="1"/><rect x="8.7" y="10.6" width="1" height="1"/><rect x="10.6" y="3.0" width="1" height="1"/><rect x="10.6" y="4.9" width="1" height="1"/><rect x="10.6" y="6.8" width="1" height="1"/><rect x="10.6" y="8.7" width="1" height="1"/><rect x="10.6" y="10.6" width="1" height="1"/></g></svg><svg class="i" style="left:172.5px;top:188.5px" width="15" height="15" viewBox="0 0 15 15"><rect x="0.8" y="0.8" width="13.4" height="13.4" fill="none" stroke="#e6bf5e" stroke-width="1.5"/><g fill="#e6bf5e"><rect x="3.0" y="3.0" width="1" height="1"/><rect x="3.0" y="4.9" width="1" height="1"/><rect x="3.0" y="6.8" width="1" height="1"/><rect x="3.0" y="8.7" width="1" height="1"/><rect x="3.0" y="10.6" width="1" height="1"/><rect x="4.9" y="3.0" width="1" height="1"/><rect x="4.9" y="4.9" width="1" height="1"/><rect x="4.9" y="6.8" width="1" height="1"/><rect x="4.9" y="8.7" width="1" height="1"/><rect x="4.9" y="10.6" width="1" height="1"/><rect x="6.8" y="3.0" width="1" height="1"/><rect x="6.8" y="4.9" width="1" height="1"/><rect x="6.8" y="6.8" width="1" height="1"/><rect x="6.8" y="8.7" width="1" height="1"/><rect x="6.8" y="10.6" width="1" height="1"/><rect x="8.7" y="3.0" width="1" height="1"/><rect x="8.7" y="4.9" width="1" height="1"/><rect x="8.7" y="6.8" width="1" height="1"/><rect x="8.7" y="8.7" width="1" height="1"/><rect x="8.7" y="10.6" width="1" height="1"/><rect x="10.6" y="3.0" width="1" height="1"/><rect x="10.6" y="4.9" width="1" height="1"/><rect x="10.6" y="6.8" width="1" height="1"/><rect x="10.6" y="8.7" width="1" height="1"/><rect x="10.6" y="10.6" width="1" height="1"/></g></svg>
<svg class="i" style="left:92.5px;top:228.5px" width="15" height="15" viewBox="0 0 15 15"><rect x="0.8" y="0.8" width="13.4" height="13.4" fill="none" stroke="#8a72d6" stroke-width="1.5"/><g fill="#8a72d6"><rect x="3.0" y="3.0" width="1" height="1"/><rect x="3.0" y="4.9" width="1" height="1"/><rect x="3.0" y="6.8" width="1" height="1"/><rect x="3.0" y="8.7" width="1" height="1"/><rect x="3.0" y="10.6" width="1" height="1"/><rect x="4.9" y="3.0" width="1" height="1"/><rect x="4.9" y="4.9" width="1" height="1"/><rect x="4.9" y="6.8" width="1" height="1"/><rect x="4.9" y="8.7" width="1" height="1"/><rect x="4.9" y="10.6" width="1" height="1"/><rect x="6.8" y="3.0" width="1" height="1"/><rect x="6.8" y="4.9" width="1" height="1"/><rect x="6.8" y="6.8" width="1" height="1"/><rect x="6.8" y="8.7" width="1" height="1"/><rect x="6.8" y="10.6" width="1" height="1"/><rect x="8.7" y="3.0" width="1" height="1"/><rect x="8.7" y="4.9" width="1" height="1"/><rect x="8.7" y="6.8" width="1" height="1"/><rect x="8.7" y="8.7" width="1" height="1"/><rect x="8.7" y="10.6" width="1" height="1"/><rect x="10.6" y="3.0" width="1" height="1"/><rect x="10.6" y="4.9" width="1" height="1"/><rect x="10.6" y="6.8" width="1" height="1"/><rect x="10.6" y="8.7" width="1" height="1"/><rect x="10.6" y="10.6" width="1" height="1"/></g></svg><svg class="i" style="left:132.5px;top:228.5px" width="15" height="15" viewBox="0 0 15 15"><rect x="0.8" y="0.8" width="13.4" height="13.4" fill="none" stroke="#66707a" stroke-width="1.5"/><g fill="#66707a"><rect x="3.0" y="3.0" width="1" height="1"/><rect x="3.0" y="4.9" width="1" height="1"/><rect x="3.0" y="6.8" width="1" height="1"/><rect x="3.0" y="8.7" width="1" height="1"/><rect x="3.0" y="10.6" width="1" height="1"/><rect x="4.9" y="3.0" width="1" height="1"/><rect x="4.9" y="4.9" width="1" height="1"/><rect x="4.9" y="6.8" width="1" height="1"/><rect x="4.9" y="8.7" width="1" height="1"/><rect x="4.9" y="10.6" width="1" height="1"/><rect x="6.8" y="3.0" width="1" height="1"/><rect x="6.8" y="4.9" width="1" height="1"/><rect x="6.8" y="6.8" width="1" height="1"/><rect x="6.8" y="8.7" width="1" height="1"/><rect x="6.8" y="10.6" width="1" height="1"/><rect x="8.7" y="3.0" width="1" height="1"/><rect x="8.7" y="4.9" width="1" height="1"/><rect x="8.7" y="6.8" width="1" height="1"/><rect x="8.7" y="8.7" width="1" height="1"/><rect x="8.7" y="10.6" width="1" height="1"/><rect x="10.6" y="3.0" width="1" height="1"/><rect x="10.6" y="4.9" width="1" height="1"/><rect x="10.6" y="6.8" width="1" height="1"/><rect x="10.6" y="8.7" width="1" height="1"/><rect x="10.6" y="10.6" width="1" height="1"/></g></svg><svg class="i" style="left:172.5px;top:228.5px" width="15" height="15" viewBox="0 0 15 15"><rect x="0.8" y="0.8" width="13.4" height="13.4" fill="none" stroke="#e6bf5e" stroke-width="1.5"/><g fill="#e6bf5e"><rect x="3.0" y="3.0" width="1" height="1"/><rect x="3.0" y="4.9" width="1" height="1"/><rect x="3.0" y="6.8" width="1" height="1"/><rect x="3.0" y="8.7" width="1" height="1"/><rect x="3.0" y="10.6" width="1" height="1"/><rect x="4.9" y="3.0" width="1" height="1"/><rect x="4.9" y="4.9" width="1" height="1"/><rect x="4.9" y="6.8" width="1" height="1"/><rect x="4.9" y="8.7" width="1" height="1"/><rect x="4.9" y="10.6" width="1" height="1"/><rect x="6.8" y="3.0" width="1" height="1"/><rect x="6.8" y="4.9" width="1" height="1"/><rect x="6.8" y="6.8" width="1" height="1"/><rect x="6.8" y="8.7" width="1" height="1"/><rect x="6.8" y="10.6" width="1" height="1"/><rect x="8.7" y="3.0" width="1" height="1"/><rect x="8.7" y="4.9" width="1" height="1"/><rect x="8.7" y="6.8" width="1" height="1"/><rect x="8.7" y="8.7" width="1" height="1"/><rect x="8.7" y="10.6" width="1" height="1"/><rect x="10.6" y="3.0" width="1" height="1"/><rect x="10.6" y="4.9" width="1" height="1"/><rect x="10.6" y="6.8" width="1" height="1"/><rect x="10.6" y="8.7" width="1" height="1"/><rect x="10.6" y="10.6" width="1" height="1"/></g></svg>
<svg class="i" style="left:92.5px;top:268.5px" width="15" height="15" viewBox="0 0 15 15"><rect x="0.8" y="0.8" width="13.4" height="13.4" fill="none" stroke="#8a72d6" stroke-width="1.5"/><g fill="#8a72d6"><rect x="3.0" y="3.0" width="1" height="1"/><rect x="3.0" y="4.9" width="1" height="1"/><rect x="3.0" y="6.8" width="1" height="1"/><rect x="3.0" y="8.7" width="1" height="1"/><rect x="3.0" y="10.6" width="1" height="1"/><rect x="4.9" y="3.0" width="1" height="1"/><rect x="4.9" y="4.9" width="1" height="1"/><rect x="4.9" y="6.8" width="1" height="1"/><rect x="4.9" y="8.7" width="1" height="1"/><rect x="4.9" y="10.6" width="1" height="1"/><rect x="6.8" y="3.0" width="1" height="1"/><rect x="6.8" y="4.9" width="1" height="1"/><rect x="6.8" y="6.8" width="1" height="1"/><rect x="6.8" y="8.7" width="1" height="1"/><rect x="6.8" y="10.6" width="1" height="1"/><rect x="8.7" y="3.0" width="1" height="1"/><rect x="8.7" y="4.9" width="1" height="1"/><rect x="8.7" y="6.8" width="1" height="1"/><rect x="8.7" y="8.7" width="1" height="1"/><rect x="8.7" y="10.6" width="1" height="1"/><rect x="10.6" y="3.0" width="1" height="1"/><rect x="10.6" y="4.9" width="1" height="1"/><rect x="10.6" y="6.8" width="1" height="1"/><rect x="10.6" y="8.7" width="1" height="1"/><rect x="10.6" y="10.6" width="1" height="1"/></g></svg><svg class="i" style="left:132.5px;top:268.5px" width="15" height="15" viewBox="0 0 15 15"><rect x="0.8" y="0.8" width="13.4" height="13.4" fill="none" stroke="#66707a" stroke-width="1.5"/><g fill="#66707a"><rect x="3.0" y="3.0" width="1" height="1"/><rect x="3.0" y="4.9" width="1" height="1"/><rect x="3.0" y="6.8" width="1" height="1"/><rect x="3.0" y="8.7" width="1" height="1"/><rect x="3.0" y="10.6" width="1" height="1"/><rect x="4.9" y="3.0" width="1" height="1"/><rect x="4.9" y="4.9" width="1" height="1"/><rect x="4.9" y="6.8" width="1" height="1"/><rect x="4.9" y="8.7" width="1" height="1"/><rect x="4.9" y="10.6" width="1" height="1"/><rect x="6.8" y="3.0" width="1" height="1"/><rect x="6.8" y="4.9" width="1" height="1"/><rect x="6.8" y="6.8" width="1" height="1"/><rect x="6.8" y="8.7" width="1" height="1"/><rect x="6.8" y="10.6" width="1" height="1"/><rect x="8.7" y="3.0" width="1" height="1"/><rect x="8.7" y="4.9" width="1" height="1"/><rect x="8.7" y="6.8" width="1" height="1"/><rect x="8.7" y="8.7" width="1" height="1"/><rect x="8.7" y="10.6" width="1" height="1"/><rect x="10.6" y="3.0" width="1" height="1"/><rect x="10.6" y="4.9" width="1" height="1"/><rect x="10.6" y="6.8" width="1" height="1"/><rect x="10.6" y="8.7" width="1" height="1"/><rect x="10.6" y="10.6" width="1" height="1"/></g></svg><svg class="i" style="left:172.5px;top:268.5px" width="15" height="15" viewBox="0 0 15 15"><rect x="0.8" y="0.8" width="13.4" height="13.4" fill="none" stroke="#e6bf5e" stroke-width="1.5"/><g fill="#e6bf5e"><rect x="3.0" y="3.0" width="1" height="1"/><rect x="3.0" y="4.9" width="1" height="1"/><rect x="3.0" y="6.8" width="1" height="1"/><rect x="3.0" y="8.7" width="1" height="1"/><rect x="3.0" y="10.6" width="1" height="1"/><rect x="4.9" y="3.0" width="1" height="1"/><rect x="4.9" y="4.9" width="1" height="1"/><rect x="4.9" y="6.8" width="1" height="1"/><rect x="4.9" y="8.7" width="1" height="1"/><rect x="4.9" y="10.6" width="1" height="1"/><rect x="6.8" y="3.0" width="1" height="1"/><rect x="6.8" y="4.9" width="1" height="1"/><rect x="6.8" y="6.8" width="1" height="1"/><rect x="6.8" y="8.7" width="1" height="1"/><rect x="6.8" y="10.6" width="1" height="1"/><rect x="8.7" y="3.0" width="1" height="1"/><rect x="8.7" y="4.9" width="1" height="1"/><rect x="8.7" y="6.8" width="1" height="1"/><rect x="8.7" y="8.7" width="1" height="1"/><rect x="8.7" y="10.6" width="1" height="1"/><rect x="10.6" y="3.0" width="1" height="1"/><rect x="10.6" y="4.9" width="1" height="1"/><rect x="10.6" y="6.8" width="1" height="1"/><rect x="10.6" y="8.7" width="1" height="1"/><rect x="10.6" y="10.6" width="1" height="1"/></g></svg>
<svg class="i" style="left:92.5px;top:308.5px" width="15" height="15" viewBox="0 0 15 15"><rect x="0.8" y="0.8" width="13.4" height="13.4" fill="none" stroke="#8a72d6" stroke-width="1.5"/><g fill="#8a72d6"><rect x="3.0" y="3.0" width="1" height="1"/><rect x="3.0" y="4.9" width="1" height="1"/><rect x="3.0" y="6.8" width="1" height="1"/><rect x="3.0" y="8.7" width="1" height="1"/><rect x="3.0" y="10.6" width="1" height="1"/><rect x="4.9" y="3.0" width="1" height="1"/><rect x="4.9" y="4.9" width="1" height="1"/><rect x="4.9" y="6.8" width="1" height="1"/><rect x="4.9" y="8.7" width="1" height="1"/><rect x="4.9" y="10.6" width="1" height="1"/><rect x="6.8" y="3.0" width="1" height="1"/><rect x="6.8" y="4.9" width="1" height="1"/><rect x="6.8" y="6.8" width="1" height="1"/><rect x="6.8" y="8.7" width="1" height="1"/><rect x="6.8" y="10.6" width="1" height="1"/><rect x="8.7" y="3.0" width="1" height="1"/><rect x="8.7" y="4.9" width="1" height="1"/><rect x="8.7" y="6.8" width="1" height="1"/><rect x="8.7" y="8.7" width="1" height="1"/><rect x="8.7" y="10.6" width="1" height="1"/><rect x="10.6" y="3.0" width="1" height="1"/><rect x="10.6" y="4.9" width="1" height="1"/><rect x="10.6" y="6.8" width="1" height="1"/><rect x="10.6" y="8.7" width="1" height="1"/><rect x="10.6" y="10.6" width="1" height="1"/></g></svg><svg class="i" style="left:132.5px;top:308.5px" width="15" height="15" viewBox="0 0 15 15"><rect x="0.8" y="0.8" width="13.4" height="13.4" fill="none" stroke="#66707a" stroke-width="1.5"/><g fill="#66707a"><rect x="3.0" y="3.0" width="1" height="1"/><rect x="3.0" y="4.9" width="1" height="1"/><rect x="3.0" y="6.8" width="1" height="1"/><rect x="3.0" y="8.7" width="1" height="1"/><rect x="3.0" y="10.6" width="1" height="1"/><rect x="4.9" y="3.0" width="1" height="1"/><rect x="4.9" y="4.9" width="1" height="1"/><rect x="4.9" y="6.8" width="1" height="1"/><rect x="4.9" y="8.7" width="1" height="1"/><rect x="4.9" y="10.6" width="1" height="1"/><rect x="6.8" y="3.0" width="1" height="1"/><rect x="6.8" y="4.9" width="1" height="1"/><rect x="6.8" y="6.8" width="1" height="1"/><rect x="6.8" y="8.7" width="1" height="1"/><rect x="6.8" y="10.6" width="1" height="1"/><rect x="8.7" y="3.0" width="1" height="1"/><rect x="8.7" y="4.9" width="1" height="1"/><rect x="8.7" y="6.8" width="1" height="1"/><rect x="8.7" y="8.7" width="1" height="1"/><rect x="8.7" y="10.6" width="1" height="1"/><rect x="10.6" y="3.0" width="1" height="1"/><rect x="10.6" y="4.9" width="1" height="1"/><rect x="10.6" y="6.8" width="1" height="1"/><rect x="10.6" y="8.7" width="1" height="1"/><rect x="10.6" y="10.6" width="1" height="1"/></g></svg><svg class="i" style="left:172.5px;top:308.5px" width="15" height="15" viewBox="0 0 15 15"><rect x="0.8" y="0.8" width="13.4" height="13.4" fill="none" stroke="#e6bf5e" stroke-width="1.5"/><g fill="#e6bf5e"><rect x="3.0" y="3.0" width="1" height="1"/><rect x="3.0" y="4.9" width="1" height="1"/><rect x="3.0" y="6.8" width="1" height="1"/><rect x="3.0" y="8.7" width="1" height="1"/><rect x="3.0" y="10.6" width="1" height="1"/><rect x="4.9" y="3.0" width="1" height="1"/><rect x="4.9" y="4.9" width="1" height="1"/><rect x="4.9" y="6.8" width="1" height="1"/><rect x="4.9" y="8.7" width="1" height="1"/><rect x="4.9" y="10.6" width="1" height="1"/><rect x="6.8" y="3.0" width="1" height="1"/><rect x="6.8" y="4.9" width="1" height="1"/><rect x="6.8" y="6.8" width="1" height="1"/><rect x="6.8" y="8.7" width="1" height="1"/><rect x="6.8" y="10.6" width="1" height="1"/><rect x="8.7" y="3.0" width="1" height="1"/><rect x="8.7" y="4.9" width="1" height="1"/><rect x="8.7" y="6.8" width="1" height="1"/><rect x="8.7" y="8.7" width="1" height="1"/><rect x="8.7" y="10.6" width="1" height="1"/><rect x="10.6" y="3.0" width="1" height="1"/><rect x="10.6" y="4.9" width="1" height="1"/><rect x="10.6" y="6.8" width="1" height="1"/><rect x="10.6" y="8.7" width="1" height="1"/><rect x="10.6" y="10.6" width="1" height="1"/></g></svg>
<svg class="i" style="left:92.5px;top:348.5px" width="15" height="15" viewBox="0 0 15 15"><rect x="0.8" y="0.8" width="13.4" height="13.4" fill="none" stroke="#8a72d6" stroke-width="1.5"/><g fill="#8a72d6"><rect x="3.0" y="3.0" width="1" height="1"/><rect x="3.0" y="4.9" width="1" height="1"/><rect x="3.0" y="6.8" width="1" height="1"/><rect x="3.0" y="8.7" width="1" height="1"/><rect x="3.0" y="10.6" width="1" height="1"/><rect x="4.9" y="3.0" width="1" height="1"/><rect x="4.9" y="4.9" width="1" height="1"/><rect x="4.9" y="6.8" width="1" height="1"/><rect x="4.9" y="8.7" width="1" height="1"/><rect x="4.9" y="10.6" width="1" height="1"/><rect x="6.8" y="3.0" width="1" height="1"/><rect x="6.8" y="4.9" width="1" height="1"/><rect x="6.8" y="6.8" width="1" height="1"/><rect x="6.8" y="8.7" width="1" height="1"/><rect x="6.8" y="10.6" width="1" height="1"/><rect x="8.7" y="3.0" width="1" height="1"/><rect x="8.7" y="4.9" width="1" height="1"/><rect x="8.7" y="6.8" width="1" height="1"/><rect x="8.7" y="8.7" width="1" height="1"/><rect x="8.7" y="10.6" width="1" height="1"/><rect x="10.6" y="3.0" width="1" height="1"/><rect x="10.6" y="4.9" width="1" height="1"/><rect x="10.6" y="6.8" width="1" height="1"/><rect x="10.6" y="8.7" width="1" height="1"/><rect x="10.6" y="10.6" width="1" height="1"/></g></svg><svg class="i" style="left:132.5px;top:348.5px" width="15" height="15" viewBox="0 0 15 15"><rect x="0.8" y="0.8" width="13.4" height="13.4" fill="none" stroke="#66707a" stroke-width="1.5"/><g fill="#66707a"><rect x="3.0" y="3.0" width="1" height="1"/><rect x="3.0" y="4.9" width="1" height="1"/><rect x="3.0" y="6.8" width="1" height="1"/><rect x="3.0" y="8.7" width="1" height="1"/><rect x="3.0" y="10.6" width="1" height="1"/><rect x="4.9" y="3.0" width="1" height="1"/><rect x="4.9" y="4.9" width="1" height="1"/><rect x="4.9" y="6.8" width="1" height="1"/><rect x="4.9" y="8.7" width="1" height="1"/><rect x="4.9" y="10.6" width="1" height="1"/><rect x="6.8" y="3.0" width="1" height="1"/><rect x="6.8" y="4.9" width="1" height="1"/><rect x="6.8" y="6.8" width="1" height="1"/><rect x="6.8" y="8.7" width="1" height="1"/><rect x="6.8" y="10.6" width="1" height="1"/><rect x="8.7" y="3.0" width="1" height="1"/><rect x="8.7" y="4.9" width="1" height="1"/><rect x="8.7" y="6.8" width="1" height="1"/><rect x="8.7" y="8.7" width="1" height="1"/><rect x="8.7" y="10.6" width="1" height="1"/><rect x="10.6" y="3.0" width="1" height="1"/><rect x="10.6" y="4.9" width="1" height="1"/><rect x="10.6" y="6.8" width="1" height="1"/><rect x="10.6" y="8.7" width="1" height="1"/><rect x="10.6" y="10.6" width="1" height="1"/></g></svg><svg class="i" style="left:172.5px;top:348.5px" width="15" height="15" viewBox="0 0 15 15"><rect x="0.8" y="0.8" width="13.4" height="13.4" fill="none" stroke="#e6bf5e" stroke-width="1.5"/><g fill="#e6bf5e"><rect x="3.0" y="3.0" width="1" height="1"/><rect x="3.0" y="4.9" width="1" height="1"/><rect x="3.0" y="6.8" width="1" height="1"/><rect x="3.0" y="8.7" width="1" height="1"/><rect x="3.0" y="10.6" width="1" height="1"/><rect x="4.9" y="3.0" width="1" height="1"/><rect x="4.9" y="4.9" width="1" height="1"/><rect x="4.9" y="6.8" width="1" height="1"/><rect x="4.9" y="8.7" width="1" height="1"/><rect x="4.9" y="10.6" width="1" height="1"/><rect x="6.8" y="3.0" width="1" height="1"/><rect x="6.8" y="4.9" width="1" height="1"/><rect x="6.8" y="6.8" width="1" height="1"/><rect x="6.8" y="8.7" width="1" height="1"/><rect x="6.8" y="10.6" width="1" height="1"/><rect x="8.7" y="3.0" width="1" height="1"/><rect x="8.7" y="4.9" width="1" height="1"/><rect x="8.7" y="6.8" width="1" height="1"/><rect x="8.7" y="8.7" width="1" height="1"/><rect x="8.7" y="10.6" width="1" height="1"/><rect x="10.6" y="3.0" width="1" height="1"/><rect x="10.6" y="4.9" width="1" height="1"/><rect x="10.6" y="6.8" width="1" height="1"/><rect x="10.6" y="8.7" width="1" height="1"/><rect x="10.6" y="10.6" width="1" height="1"/></g></svg>
<div class="a" style="left:395px;top:50px;width:5px;height:329px;background:#242e38"></div>
<div class="a" style="left:395px;top:50px;width:5px;height:52px;background:#5a6570"></div>
<div class="a" style="left:0;top:379px;width:400px;height:45px;background:#1b2530"></div>
<div class="a" style="left:29px;top:379px;width:1px;height:45px;background:#2c3742"></div>
<svg class="i" style="left:6px;top:396px" width="14" height="14" viewBox="0 0 14 14"><path d="M2,12 L2,7 A5,5 0 0 1 12,7 L12,12 Z" fill="#e84a45"/><rect x="0" y="11" width="14" height="3" fill="#e84a45"/><rect x="5" y="5" width="1.5" height="4" fill="#fff" opacity=".6"/></svg>
<svg class="i" style="left:40px;top:395px" width="18" height="18" viewBox="0 0 18 18"><path d="M1,11 C0,7 3,5 5,6 C6,1 13,1 14,5 C17,5 18,9 17,11 Z" fill="#64a2e2"/><g fill="#64a2e2"><rect x="3" y="13.5" width="2" height="2"/><rect x="7" y="13.5" width="2" height="2"/><rect x="11" y="13.5" width="2" height="2"/><rect x="15" y="13.5" width="2" height="2"/></g></svg>
<div class="a" style="left:62px;top:396px;font-size:14px;color:#d5dce4;line-height:16px">实况强降水</div>
<svg class="i" style="left:146px;top:395px" width="12" height="18" viewBox="0 0 12 18"><path d="M3,1 L3,17 M3,2 L10,2 M3,6 L10,6 M3,10 L8,10" stroke="#e0121f" stroke-width="2.2" fill="none"/></svg>
<div class="a" style="left:164px;top:396px;font-size:14px;color:#d5dce4;line-height:16px">实况大风</div>
<svg class="i" style="left:231px;top:395px" width="18" height="18" viewBox="0 0 18 18"><path d="M1,8 L9,1 L17,8 L14,8 L14,16 L4,16 L4,8 Z" fill="#f08448"/><text x="9" y="14" font-size="8" fill="#fff" text-anchor="middle" font-weight="bold">°C</text></svg>
<div class="a" style="left:252px;top:396px;font-size:14px;color:#d5dce4;line-height:16px">实况高温</div>
</div>
<div id="wa"><div class="hd">天气分析</div>
<div class="lc" style="top:37px;height:49px"></div>
<div class="lb" style="top:64px">降水</div>
<div class="lc" style="top:86px;height:50px"></div>
<div class="lb" style="top:113px">风</div>
<div class="sep" style="top:86px"></div>
<div class="lc" style="top:136px;height:50px"></div>
<div class="lb" style="top:163px">温度</div>
<div class="sep" style="top:136px"></div>
<div class="lc" style="top:186px;height:50px"></div>
<div class="lb" style="top:213px">雷达</div>
<div class="sep" style="top:186px"></div>
<div class="lc" style="top:236px;height:51px"></div>
<div class="lb" style="top:263px">闪电</div>
<div class="sep" style="top:236px"></div>
<div class="sep" style="top:286px;background:#cfd6de"></div>
<svg class="i" style="left:20px;top:41px" width="20" height="18" viewBox="0 0 20 18"><path d="M4,11 C1,11 1,6 4,6 C4,2 9,1 11,4 C13,2 18,3 17,7 C19,8 19,11 16,11" fill="none" stroke="#4a5260" stroke-width="1.5"/><path d="M7,13 L6,16 M10,13 L9,17 M13,13 L12,16" stroke="#4a5260" stroke-width="1.4"/><path d="M11,6 L9,10 L12,10 L10,13" stroke="#4a5260" stroke-width="1" fill="none"/></svg>
<svg class="i" style="left:20px;top:91px" width="20" height="18" viewBox="0 0 20 18"><path d="M4,10 C1,10 1,5 4,5 C5,1 11,1 12,4 C16,3 18,7 15,9" fill="none" stroke="#4a5260" stroke-width="1.5"/><path d="M3,12 L14,12 Q18,12 17,15 M6,15 L12,15" stroke="#4a5260" stroke-width="1.4" fill="none"/></svg>
<svg class="i" style="left:23px;top:139px" width="14" height="20" viewBox="0 0 14 20"><rect x="4" y="1" width="5" height="13" rx="2.5" fill="none" stroke="#4a5260" stroke-width="1.5"/><circle cx="6.5" cy="15" r="3.5" fill="#4a5260"/><rect x="5.7" y="7" width="1.6" height="8" fill="#4a5260"/><path d="M10,4 L12,4 M10,7 L12,7 M10,10 L12,10" stroke="#4a5260" stroke-width="1"/></svg>
<svg class="i" style="left:21px;top:189px" width="18" height="18" viewBox="0 0 18 18"><path d="M3,4 A9,9 0 0 0 14,15 Z" fill="none" stroke="#4a5260" stroke-width="1.6"/><path d="M8,10 L14,3 L16,5" stroke="#4a5260" stroke-width="1.6" fill="none"/><circle cx="4" cy="15" r="1.6" fill="#4a5260"/></svg>
<svg class="i" style="left:23px;top:240px" width="14" height="18" viewBox="0 0 14 18"><path d="M8,1 L2,9 L6,9 L3,17 L12,7 L8,7 L11,1 Z" fill="#4a5260"/></svg>
<div class="pill" style="left:77px;top:39.5px;width:79px;height:19px"></div>
<div class="tx" style="left:82.5px;top:42px;color:#fff">5分钟降水</div>
<div class="tx" style="left:183px;top:42px;">10分钟降水</div>
<div class="tx" style="left:284px;top:42px;">1小时降水</div>
<div class="tx" style="left:82.5px;top:64px;">3小时降水</div>
<div class="tx" style="left:183px;top:64px;">6小时降水</div>
<div class="tx" style="left:284px;top:64px;">12小时降水</div>
<svg class="i" style="left:382px;top:58px" width="8" height="11" viewBox="0 0 8 11"><path d="M2,1 L6,5.5 L2,10" fill="none" stroke="#8a929b" stroke-width="1.2"/></svg>
<div class="tx" style="left:82.5px;top:92.4px;">瞬时风</div>
<div class="tx" style="left:183px;top:92.4px;">小时平均风</div>
<div class="tx" style="left:284px;top:92.4px;">小时最大风</div>
<div class="tx" style="left:82.5px;top:114.3px;">小时极大风</div>
<div class="tx" style="left:183px;top:114.3px;">日平均风</div>
<div class="tx" style="left:284px;top:114.3px;">日最大风</div>
<svg class="i" style="left:382px;top:108px" width="8" height="11" viewBox="0 0 8 11"><path d="M2,1 L6,5.5 L2,10" fill="none" stroke="#8a929b" stroke-width="1.2"/></svg>
<div class="tx" style="left:82.5px;top:142px;">气温</div>
<div class="tx" style="left:183px;top:142px;">24小时变温</div>
<div class="tx" style="left:284px;top:142px;">日最高气...</div>
<div class="tx" style="left:82.5px;top:164.6px;">日最低气...</div>
<div class="tx" style="left:183px;top:164.6px;">日温差</div>
<div class="tx" style="left:284px;top:164.6px;">24小时最...</div>
<svg class="i" style="left:382px;top:158px" width="8" height="11" viewBox="0 0 8 11"><path d="M2,1 L6,5.5 L2,10" fill="none" stroke="#8a929b" stroke-width="1.2"/></svg>
<div class="tx" style="left:82.5px;top:205px">组合反射率</div>
<div class="pill" style="left:77px;top:252px;width:101px;height:19.5px">3小时闪电分布</div>
<div class="a" style="left:395px;top:37px;width:5px;height:250px;background:#e4e8ec"></div>
<div class="a" style="left:395px;top:37px;width:5px;height:158px;background:#c3c9d0"></div>
</div>
<div class="ttl" style="left:860px;letter-spacing:-0.6px">5分钟降水</div>
<div class="ttl" style="left:939px">(</div>
<div class="ttl" style="left:950px">mm</div>
<div class="ttl" style="left:983px">)</div>
<div class="ttl" style="left:996.5px">00:00</div>
<div class="ttl" style="left:1051px">+</div>
<div class="ttl" style="left:1072px;letter-spacing:-0.6px">小时平均相对湿度</div>
<div class="ttl" style="left:1204px">(</div>
<div class="ttl" style="left:1213px">%</div>
<div class="ttl" style="left:1235px">)</div>
<div class="ttl" style="left:1247px">00:00</div>
<div class="ttl" style="left:1300px">+</div>
<div class="ttl" style="left:1322px">3</div>
<div class="ttl" style="left:1333px;letter-spacing:-0.6px">小时闪电分布</div>
<div class="ttl" style="left:1426px">00:00</div>
<div class="a" style="left:1902px;top:107px;width:18px;height:40px;background:#19232d;border-radius:3px 0 0 3px"></div>
<svg class="i" style="left:1905px;top:121px" width="12" height="12" viewBox="0 0 12 12"><path d="M6,1 L2,6 L6,11 M11,1 L7,6 L11,11" fill="none" stroke="#fff" stroke-width="1.6"/></svg>
<div id="lg">
<div class="t" style="left:15px;top:10px">国家站</div>
<div class="tog" style="left:69px;top:7px"><span>ON</span><i></i></div>
<div class="t" style="left:125px;top:10px">区域站</div>
<div class="tog" style="left:179px;top:7px"><span>ON</span><i></i></div>
<svg class="i" style="left:422px;top:12px" width="11" height="11" viewBox="0 0 11 11"><path d="M1,1 L10,10 M10,1 L1,10" stroke="#a9b1b9" stroke-width="1.6"/></svg>
<div class="a" style="left:0;top:34px;width:445px;height:1px;background:#cbd5df"></div>
<div class="t" style="left:15px;top:45px;letter-spacing:-0.3px">5分钟降水(mm)</div>
<svg class="i" style="left:130px;top:45px" width="260" height="14" viewBox="0 0 260 14"><rect x="0" y="0" width="39.05" height="14" fill="#f4f6f8"/><rect x="38.75" y="0" width="37.8" height="14" fill="#a6f28f"/><rect x="76.25" y="0" width="36.05" height="14" fill="#3cb93c"/><rect x="112" y="0" width="37.3" height="14" fill="#66b3f5"/><rect x="149" y="0" width="37.3" height="14" fill="#0a0ae6"/><rect x="186" y="0" width="37.3" height="14" fill="#f00ff0"/><rect x="223" y="0" width="36.8" height="14" fill="#8a0030"/><rect x="0.5" y="0.5" width="38" height="13" fill="none" stroke="#999" stroke-width="1"/><path d="M0,7 L259,7" stroke="#fff" stroke-width="1.2"/><circle cx="6" cy="7" r="6" fill="#fff" stroke="#ccc"/><circle cx="253" cy="7" r="6" fill="#fff"/></svg>
<div class="n" style="left:168.75px;top:62px">0.1</div>
<div class="n" style="left:206px;top:62px">0.25</div>
<div class="n" style="left:240px;top:62px">0.5</div>
<div class="n" style="left:277px;top:62px">2.5</div>
<div class="n" style="left:312px;top:62px">5</div>
<div class="n" style="left:349px;top:62px">7.5</div>
<div class="t" style="left:15px;top:85px;letter-spacing:-0.8px">小时平均相对湿度(%)</div>
<svg class="i" style="left:130px;top:85px" width="260" height="15" viewBox="0 0 260 15"><defs><linearGradient id="fd"><stop offset="0" stop-color="#fff" stop-opacity=".9"/><stop offset="1" stop-color="#e9e3da"/></linearGradient></defs><rect x="0" y="0" width="26" height="15" fill="url(#fd)"/><rect x="26.00" y="0" width="26.3" height="15" fill="#c9c9c9"/><rect x="51.94" y="0" width="26.3" height="15" fill="#bcbcbc"/><rect x="77.88" y="0" width="26.3" height="15" fill="#a7a7a7"/><rect x="103.82" y="0" width="26.3" height="15" fill="#6ed29a"/><rect x="129.76" y="0" width="26.3" height="15" fill="#5ece5e"/><rect x="155.70" y="0" width="26.3" height="15" fill="#5fca12"/><rect x="181.64" y="0" width="26.3" height="15" fill="#699a5a"/><rect x="207.58" y="0" width="26.3" height="15" fill="#6d9a38"/><rect x="233.52" y="0" width="26.3" height="15" fill="#6b6535"/><path d="M0,7.5 L259,7.5" stroke="#fff" stroke-width="1.2"/><circle cx="6" cy="7.5" r="6" fill="#fff" stroke="#ddd"/><circle cx="253" cy="7.5" r="6" fill="#fff"/></svg>
<div class="n" style="left:156.0px;top:102px">10</div>
<div class="n" style="left:181.4px;top:102px">20</div>
<div class="n" style="left:206.8px;top:102px">30</div>
<div class="n" style="left:232.2px;top:102px">40</div>
<div class="n" style="left:257.6px;top:102px">50</div>
<div class="n" style="left:283.0px;top:102px">60</div>
<div class="n" style="left:308.4px;top:102px">70</div>
<div class="n" style="left:333.8px;top:102px">80</div>
<div class="n" style="left:359.2px;top:102px">90</div>
<svg class="i" style="left:393px;top:44px" width="16" height="14" viewBox="0 0 16 14"><path d="M2,6 L7,1 L7,4 Q14,4 15,13 Q12,8 7,8 L7,11 Z" fill="#5b9de0"/></svg>
<svg class="i" style="left:418px;top:46px" width="19" height="11" viewBox="0 0 19 11"><path d="M1,5.5 Q9.5,-3 18,5.5 Q9.5,14 1,5.5 Z" fill="none" stroke="#5b9de0" stroke-width="1.8"/><circle cx="9.5" cy="5.5" r="2.8" fill="#5b9de0"/></svg>
<svg class="i" style="left:393px;top:84px" width="16" height="14" viewBox="0 0 16 14"><path d="M2,6 L7,1 L7,4 Q14,4 15,13 Q12,8 7,8 L7,11 Z" fill="#5b9de0"/></svg>
<svg class="i" style="left:418px;top:86px" width="19" height="11" viewBox="0 0 19 11"><path d="M1,5.5 Q9.5,-3 18,5.5 Q9.5,14 1,5.5 Z" fill="none" stroke="#5b9de0" stroke-width="1.8"/><circle cx="9.5" cy="5.5" r="2.8" fill="#5b9de0"/></svg>
</div>
<div id="bt">
<div class="a" style="left:0;top:0;width:50px;height:66px;background:#1f2731"></div>
<svg class="i" style="left:18px;top:10px" width="16" height="14" viewBox="0 0 16 14"><path d="M1,4 L15,4 M5,1 L1,4 M1,10 L15,10 M11,13 L15,10" stroke="#8f99a3" stroke-width="1.8" fill="none"/></svg>
<svg class="i" style="left:8px;top:41px" width="10" height="12" viewBox="0 0 10 12"><path d="M7,1 L2,6 L7,11" fill="none" stroke="#c6ced6" stroke-width="1.6"/></svg>
<svg class="i" style="left:32px;top:41px" width="10" height="12" viewBox="0 0 10 12"><path d="M3,1 L8,6 L3,11" fill="none" stroke="#c6ced6" stroke-width="1.6"/></svg>
<div class="a" style="left:52px;top:8px;font-size:13px;color:#fff;font-weight:bold;line-height:15px">实况</div>
<div class="a" style="left:88px;top:8px;font-size:13px;color:#e6de93;font-weight:bold;line-height:15px">7月11日</div>
<div class="a" style="left:281px;top:8px;font-size:13px;color:#e6de93;font-weight:bold;line-height:15px">7月12日</div>
<div class="a" style="left:334px;top:8px;font-size:13px;color:#fff;font-weight:bold;line-height:15px">短临</div>
<div class="a" style="left:1216px;top:8px;font-size:13px;color:#fff;font-weight:bold;line-height:15px">中期</div>
<svg class="i" style="left:1880px;top:9px" width="12" height="12" viewBox="0 0 12 12"><rect x="0" y="0" width="11" height="12" fill="#4c9fe6"/><path d="M2,3 L9,3 M2,6 L9,6 M2,9 L9,9" stroke="#1f2731" stroke-width="1"/></svg>
<svg class="i" style="left:1903px;top:9px" width="11" height="11" viewBox="0 0 11 11"><path d="M1,1 L10,10 M10,1 L1,10" stroke="#fff" stroke-width="2"/></svg>
<div class="cell h" style="left:50.00px;width:36.20px">23h</div>
<div class="cell" style="left:87.40px;width:36.20px">10</div>
<div class="cell" style="left:124.80px;width:36.20px">20</div>
<div class="cell" style="left:162.20px;width:36.20px">30</div>
<div class="cell" style="left:199.60px;width:36.20px">40</div>
<div class="cell" style="left:237.00px;width:36.20px">50</div>
<div class="cell h on" style="left:274.40px;width:36.20px">0h<i class=tri></i></div>
<div class="cell" style="left:311.80px;width:36.20px">05</div>
<div class="cell" style="left:349.20px;width:36.20px">10<i class=tri></i></div>
<div class="cell" style="left:386.60px;width:36.20px">15</div>
<div class="cell" style="left:424.00px;width:36.20px">20<i class=tri></i></div>
<div class="cell" style="left:461.40px;width:36.20px">25</div>
<div class="cell" style="left:498.80px;width:36.20px">30</div>
<div class="cell" style="left:536.20px;width:36.20px">35</div>
<div class="cell" style="left:573.60px;width:36.20px">40</div>
<div class="cell" style="left:611.00px;width:36.20px">45</div>
<div class="cell" style="left:648.40px;width:36.20px">50</div>
<div class="cell" style="left:685.80px;width:36.20px">55</div>
<div class="cell h" style="left:723.20px;width:36.20px">1h</div>
<div class="cell" style="left:760.60px;width:36.20px">05</div>
<div class="cell" style="left:798.00px;width:36.20px">10</div>
<div class="cell" style="left:835.40px;width:36.20px">15</div>
<div class="cell" style="left:872.80px;width:36.20px">20</div>
<div class="cell" style="left:910.20px;width:36.20px">25</div>
<div class="cell" style="left:947.60px;width:36.20px">30</div>
<div class="cell" style="left:985.00px;width:36.20px">35</div>
<div class="cell" style="left:1022.40px;width:36.20px">40</div>
<div class="cell" style="left:1059.80px;width:36.20px">45</div>
<div class="cell" style="left:1097.20px;width:36.20px">50</div>
<div class="cell" style="left:1134.60px;width:36.20px">55</div>
<div class="cell h" style="left:1172.00px;width:36.20px">2h</div>
<div class="cell h" style="left:1209.40px;width:36.20px">3h</div>
<div class="cell h" style="left:1246.80px;width:36.20px">4h</div>
<div class="cell h" style="left:1284.20px;width:36.20px">5h</div>
<div class="cell h" style="left:1321.60px;width:36.20px">6h</div>
<div class="cell h" style="left:1359.00px;width:36.20px">7h</div>
<div class="cell h" style="left:1396.40px;width:36.20px">8h</div>
<div class="cell h" style="left:1433.80px;width:36.20px">9h</div>
<div class="cell h" style="left:1471.20px;width:36.20px">10h</div>
<div class="cell h" style="left:1508.60px;width:36.20px">11h<i class=tri></i></div>
<div class="cell h" style="left:1546.00px;width:36.20px">12h</div>
<div class="cell h" style="left:1583.40px;width:36.20px">13h</div>
<div class="cell h" style="left:1620.80px;width:36.20px">14h</div>
<div class="cell h" style="left:1658.20px;width:36.20px">15h</div>
<div class="cell h" style="left:1695.60px;width:36.20px">16h</div>
<div class="cell h" style="left:1733.00px;width:36.20px">17h<i class=tri></i></div>
<div class="cell h" style="left:1770.40px;width:36.20px">18h</div>
<div class="cell h" style="left:1807.80px;width:36.20px">19h</div>
<div class="cell h" style="left:1845.20px;width:36.20px">20h<i class=tri></i></div>
<div class="cell h" style="left:1882.60px;width:36.20px">21h</div>
</div>
</body></html>
